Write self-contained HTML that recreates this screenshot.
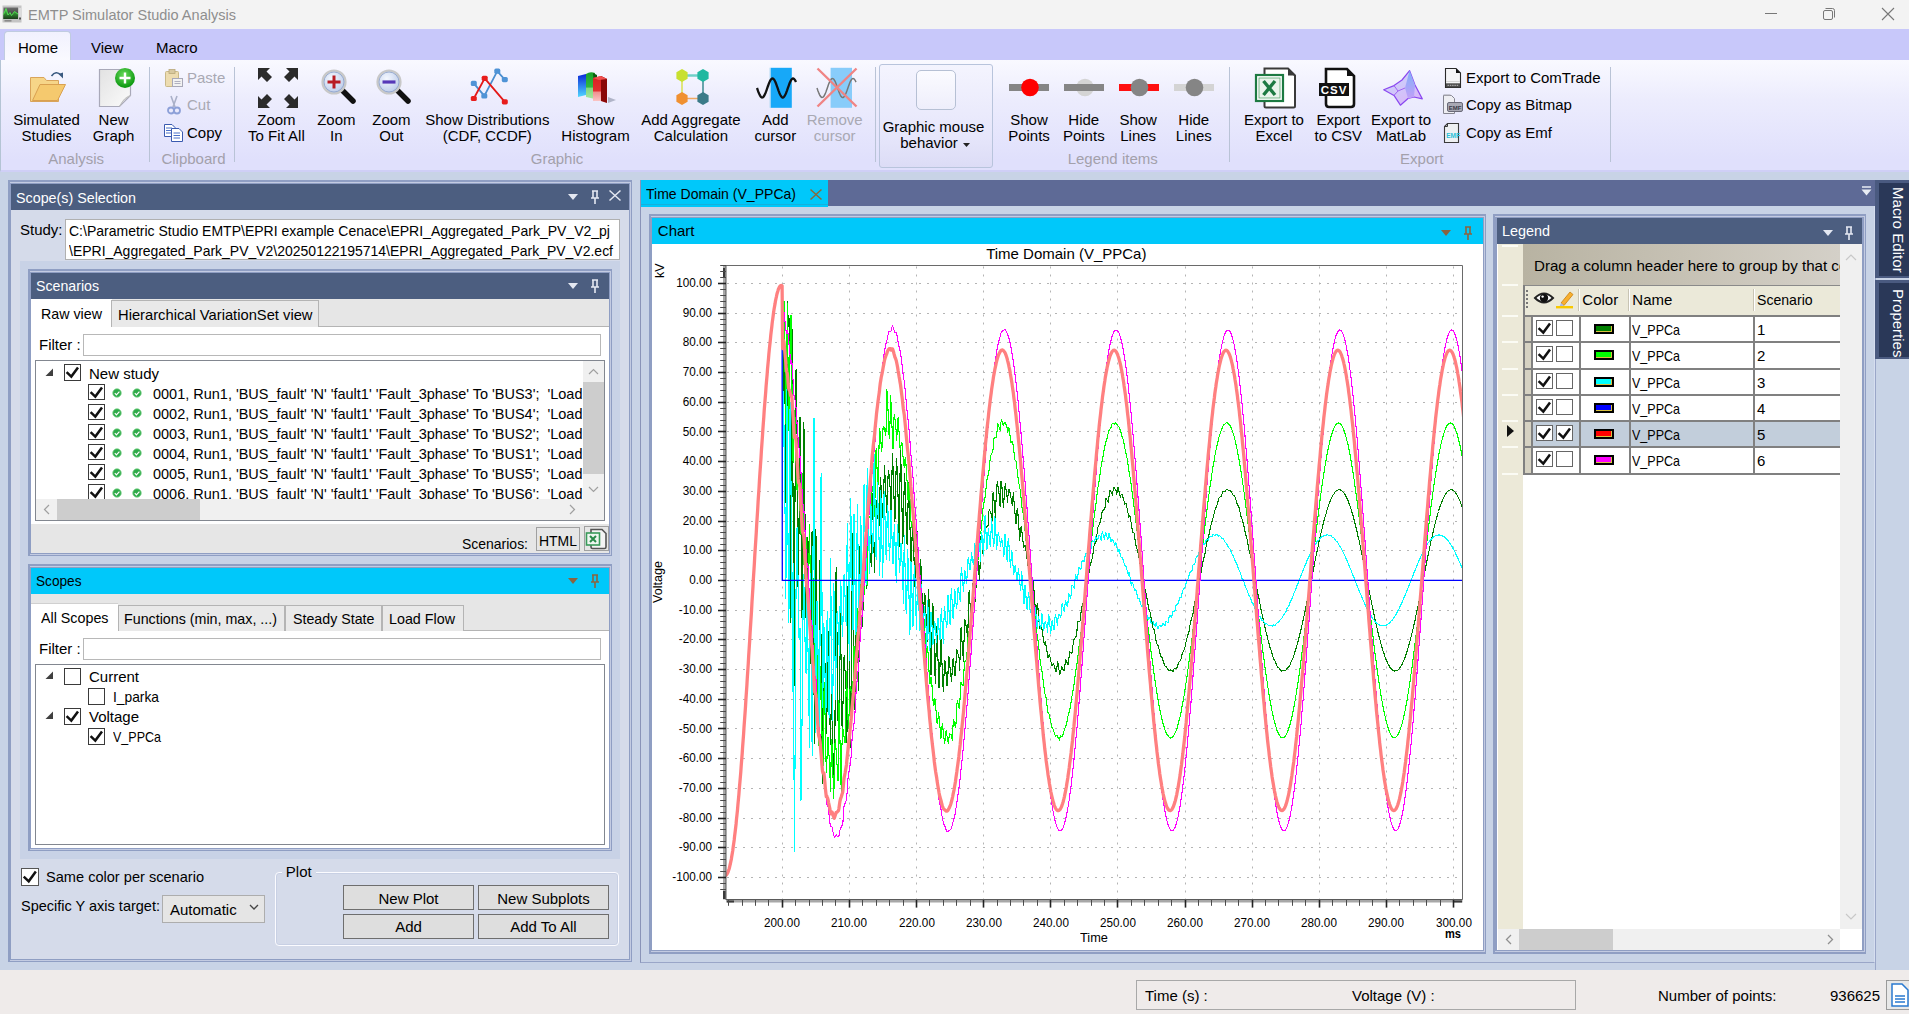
<!DOCTYPE html>
<html><head><meta charset="utf-8">
<style>
*{box-sizing:border-box}
html,body{margin:0;padding:0;width:1909px;height:1014px;overflow:hidden;background:#c8d3e6;font-family:"Liberation Sans",sans-serif;font-size:15px;color:#000}
.a{position:absolute}
.t{position:absolute;white-space:pre;line-height:1}
svg{position:absolute;overflow:visible}
</style></head><body>
<!-- title bar -->
<div class="a" style="left:0;top:0;width:1909px;height:29px;background:#f3f3f3"></div>
<svg style="left:2px;top:5px" width="20" height="18" viewBox="0 0 20 18"><defs><linearGradient id="scr" x1="0" y1="0" x2="0" y2="1"><stop offset="0" stop-color="#6e6e6e"/><stop offset="1" stop-color="#1e261e"/></linearGradient><linearGradient id="grn" x1="0" y1="0" x2="0" y2="1"><stop offset="0" stop-color="#48d848"/><stop offset="1" stop-color="#1a3a1a"/></linearGradient></defs><rect x="0.5" y="0.5" width="19" height="17" fill="#c4c4c4"/><rect x="1.5" y="2.5" width="14.5" height="11.5" fill="url(#scr)"/><path d="M1.5 9.5 L4 3.5 L6 10 L8 7.5 L9.5 10.5 L12.5 6.5 L16 9 V14 H1.5 Z" fill="url(#grn)"/><polyline points="1.5,9.5 4,3.5 6,10 8,7.5 9.5,10.5 12.5,6.5 16,9" fill="none" stroke="#50e050" stroke-width="1"/><rect x="17" y="3" width="2" height="11" fill="#dcdcdc"/><rect x="17" y="12.5" width="2" height="2" fill="#555"/><rect x="2.5" y="15" width="7" height="1.6" fill="#8a8a8a"/></svg>
<div class="t" style="left:28px;top:7px;color:#8e8e8e;font-size:15px;transform-origin:0 0;transform:scaleX(0.968)">EMTP Simulator Studio Analysis</div>
<div class="a" style="left:1765px;top:13px;width:12px;height:1px;background:#777"></div>
<svg style="left:1822px;top:7px" width="14" height="14" viewBox="0 0 14 14"><rect x="1.5" y="3.5" width="9" height="9" rx="1.5" fill="none" stroke="#777" stroke-width="1"/><path d="M3.5 1.5 H10.5 Q12.5 1.5 12.5 3.5 V10.5" fill="none" stroke="#777" stroke-width="1"/></svg>
<svg style="left:1881px;top:7px" width="14" height="14" viewBox="0 0 14 14"><path d="M1 1 L13 13 M13 1 L1 13" stroke="#777" stroke-width="1.1"/></svg>

<!-- tab bar -->
<div class="a" style="left:0;top:29px;width:1909px;height:31px;background:#c8c8fa"></div>
<div class="a" style="left:4px;top:30.5px;width:67px;height:30px;background:linear-gradient(#f1f1fe,#fafaff);border:1px solid #c0cce0;border-bottom:none;border-radius:4px 4px 0 0"></div>
<div class="t" style="left:18px;top:40px">Home</div>
<div class="t" style="left:91px;top:40px">View</div>
<div class="t" style="left:156px;top:40px">Macro</div>

<!-- ribbon -->
<div class="a" style="left:0;top:60px;width:1909px;height:112px;background:linear-gradient(#f9f9ff 0px,#ececfd 40px,#e0e0fc 100px);border-left:1px solid #b4c4d4;border-bottom:2px solid #cfcff6"></div>
<div class="a" style="left:149px;top:67px;width:1px;height:95px;background:#b9c3d6"></div>
<div class="a" style="left:234px;top:67px;width:1px;height:95px;background:#b9c3d6"></div>
<div class="a" style="left:875px;top:67px;width:1px;height:95px;background:#b9c3d6"></div>
<div class="a" style="left:1229px;top:67px;width:1px;height:95px;background:#b9c3d6"></div>
<div class="a" style="left:1610px;top:67px;width:1px;height:95px;background:#b9c3d6"></div>
<div class="t" style="left:-73.8px;top:150.9px;width:300px;text-align:center;color:#a3a0ab;">Analysis</div>
<div class="t" style="left:43.5px;top:150.9px;width:300px;text-align:center;color:#a3a0ab;">Clipboard</div>
<div class="t" style="left:407.0px;top:150.9px;width:300px;text-align:center;color:#a3a0ab;">Graphic</div>
<div class="t" style="left:962.7px;top:150.9px;width:300px;text-align:center;color:#a3a0ab;">Legend items</div>
<div class="t" style="left:1271.8px;top:150.9px;width:300px;text-align:center;color:#a3a0ab;">Export</div>
<div class="t" style="left:-103.5px;top:112.1px;width:300px;text-align:center;">Simulated</div>
<div class="t" style="left:-103.5px;top:127.8px;width:300px;text-align:center;">Studies</div>
<div class="t" style="left:-36.4px;top:112.1px;width:300px;text-align:center;">New</div>
<div class="t" style="left:-36.4px;top:127.8px;width:300px;text-align:center;">Graph</div>
<div class="t" style="left:126.4px;top:112.1px;width:300px;text-align:center;">Zoom</div>
<div class="t" style="left:126.4px;top:127.8px;width:300px;text-align:center;">To Fit All</div>
<div class="t" style="left:186.3px;top:112.1px;width:300px;text-align:center;">Zoom</div>
<div class="t" style="left:186.3px;top:127.8px;width:300px;text-align:center;">In</div>
<div class="t" style="left:241.4px;top:112.1px;width:300px;text-align:center;">Zoom</div>
<div class="t" style="left:241.4px;top:127.8px;width:300px;text-align:center;">Out</div>
<div class="t" style="left:337.3px;top:112.1px;width:300px;text-align:center;">Show Distributions</div>
<div class="t" style="left:337.3px;top:127.8px;width:300px;text-align:center;">(CDF, CCDF)</div>
<div class="t" style="left:445.5px;top:112.1px;width:300px;text-align:center;">Show</div>
<div class="t" style="left:445.5px;top:127.8px;width:300px;text-align:center;">Histogram</div>
<div class="t" style="left:540.9px;top:112.1px;width:300px;text-align:center;">Add Aggregate</div>
<div class="t" style="left:540.9px;top:127.8px;width:300px;text-align:center;">Calculation</div>
<div class="t" style="left:625.3px;top:112.1px;width:300px;text-align:center;">Add</div>
<div class="t" style="left:625.3px;top:127.8px;width:300px;text-align:center;">cursor</div>
<div class="t" style="left:684.7px;top:112.1px;width:300px;text-align:center;color:#a9a9b3;">Remove</div>
<div class="t" style="left:684.7px;top:127.8px;width:300px;text-align:center;color:#a9a9b3;">cursor</div>
<div class="t" style="left:879.0px;top:112.1px;width:300px;text-align:center;">Show</div>
<div class="t" style="left:879.0px;top:127.8px;width:300px;text-align:center;">Points</div>
<div class="t" style="left:933.8px;top:112.1px;width:300px;text-align:center;">Hide</div>
<div class="t" style="left:933.8px;top:127.8px;width:300px;text-align:center;">Points</div>
<div class="t" style="left:988.2px;top:112.1px;width:300px;text-align:center;">Show</div>
<div class="t" style="left:988.2px;top:127.8px;width:300px;text-align:center;">Lines</div>
<div class="t" style="left:1043.8px;top:112.1px;width:300px;text-align:center;">Hide</div>
<div class="t" style="left:1043.8px;top:127.8px;width:300px;text-align:center;">Lines</div>
<div class="t" style="left:1123.9px;top:112.1px;width:300px;text-align:center;">Export to</div>
<div class="t" style="left:1123.9px;top:127.8px;width:300px;text-align:center;">Excel</div>
<div class="t" style="left:1188.3px;top:112.1px;width:300px;text-align:center;">Export</div>
<div class="t" style="left:1188.3px;top:127.8px;width:300px;text-align:center;">to CSV</div>
<div class="t" style="left:1251.0px;top:112.1px;width:300px;text-align:center;">Export to</div>
<div class="t" style="left:1251.0px;top:127.8px;width:300px;text-align:center;">MatLab</div>
<div class="a" style="left:879px;top:64px;width:114px;height:104px;border:1px solid #b8c4dc;border-radius:3px;background:linear-gradient(#f4f4fe,#e6e6fb 70%,#dcdcf6)"></div>
<div class="a" style="left:916px;top:70px;width:40px;height:40px;border:1px solid #b6c0d4;border-radius:5px;background:linear-gradient(#fbfbff,#eeeefb)"></div>
<div class="t" style="left:783.5px;top:119.0px;width:300px;text-align:center;">Graphic mouse</div>
<div class="t" style="left:779.0px;top:134.5px;width:300px;text-align:center;">behavior</div>
<svg style="left:963px;top:143px" width="7" height="4" viewBox="0 0 7 4"><path d="M0 0 H7 L3.5 4 Z" fill="#222"/></svg>
<div class="t" style="left:187.0px;top:69.9px;color:#a9a9b3;">Paste</div>
<div class="t" style="left:187.0px;top:96.9px;color:#a9a9b3;">Cut</div>
<div class="t" style="left:187.0px;top:124.9px;">Copy</div>
<div class="t" style="left:1466.0px;top:69.8px;">Export to ComTrade</div>
<div class="t" style="left:1466.0px;top:97.3px;">Copy as Bitmap</div>
<div class="t" style="left:1466.0px;top:125.1px;">Copy as Emf</div>
<svg style="left:28px;top:70px" width="40" height="34" viewBox="0 0 40 34">
<path d="M2.5 7.5 H16 L18.5 10.5 H30.5 V31.5 H2.5 Z" fill="#f6d588" stroke="#d9a45a" stroke-width="1"/>
<path d="M12 14.5 H37.5 L29.5 30.5 H4.5 Z" fill="#f5c96e" stroke="#d9a050" stroke-width="1"/>
<path d="M23.5 6 Q28 0 33 5" fill="none" stroke="#3a5a80" stroke-width="1.6"/><path d="M30.5 4 L35 8.5 L35 2.5 Z" fill="#3a5a80"/></svg>
<svg style="left:98px;top:67px" width="36" height="42" viewBox="0 0 36 42">
<defs><linearGradient id="pg" x1="0" y1="0" x2="1" y2="1"><stop offset="0" stop-color="#e2e2e2"/><stop offset="1" stop-color="#fbfbfb"/></linearGradient>
<radialGradient id="gc" cx="0.45" cy="0.35" r="0.6"><stop offset="0" stop-color="#6bdc5c"/><stop offset="1" stop-color="#0e9a12"/></radialGradient></defs>
<path d="M1.5 2.5 H32.5 V28.5 L21.5 39.5 H1.5 Z" fill="url(#pg)" stroke="#a9a9b9" stroke-width="1.2"/>
<path d="M32.5 28.5 Q26 30 21.5 39.5 Q24 33 32.5 28.5" fill="#ddd" stroke="#bbb" stroke-width="0.8"/>
<circle cx="27" cy="11" r="10" fill="url(#gc)"/><path d="M21.5 11 H32.5 M27 5.5 V16.5" stroke="#fff" stroke-width="2.4"/></svg>
<svg style="left:164px;top:68px" width="20" height="20" viewBox="0 0 20 20"><rect x="1.5" y="3.5" width="13" height="15" rx="1" fill="#eddcb0" stroke="#c9b98a"/><rect x="5" y="1.5" width="6" height="4" fill="#d8c9a0" stroke="#b9a97a" stroke-width="0.8"/>
<rect x="8.5" y="10.5" width="10" height="8" fill="#f2f2f2" stroke="#a8a8b8"/><path d="M10.5 13.5 H16.5 M10.5 15.5 H16.5" stroke="#b0b0c0"/></svg>
<svg style="left:166px;top:95px" width="16" height="20" viewBox="0 0 16 20"><path d="M5 1 L9 12 M11 1 L7 12" stroke="#aab0c8" stroke-width="1.6"/><circle cx="5" cy="15.5" r="3" fill="none" stroke="#8da0d8" stroke-width="1.8"/><circle cx="11" cy="15.5" r="3" fill="none" stroke="#8da0d8" stroke-width="1.8"/></svg>
<svg style="left:163px;top:123px" width="22" height="19" viewBox="0 0 22 19"><path d="M1.5 1.5 H9 L12 4.5 V13.5 H1.5 Z" fill="#fff" stroke="#3a5ab0"/><path d="M3 5 H9 M3 7.5 H9 M3 10 H9" stroke="#4a70c8"/>
<path d="M8.5 5.5 H16 L19.5 9 V18.5 H8.5 Z" fill="#fff" stroke="#3a5ab0"/><path d="M10.5 10 H17 M10.5 12.5 H17 M10.5 15 H17" stroke="#4a70c8"/></svg>
<svg style="left:258px;top:68px" width="40" height="40" viewBox="0 0 40 40"><g><path d="M0 0 H12 L8.5 3.5 L14 9 L9 14 L3.5 8.5 L0 12 Z" fill="#2b2b2b"/></g><g transform="translate(40,0) scale(-1,1)"><path d="M0 0 H12 L8.5 3.5 L14 9 L9 14 L3.5 8.5 L0 12 Z" fill="#2b2b2b"/></g>
<g transform="translate(0,40) scale(1,-1)"><path d="M0 0 H12 L8.5 3.5 L14 9 L9 14 L3.5 8.5 L0 12 Z" fill="#2b2b2b"/></g><g transform="translate(40,40) scale(-1,-1)"><path d="M0 0 H12 L8.5 3.5 L14 9 L9 14 L3.5 8.5 L0 12 Z" fill="#2b2b2b"/></g></svg>
<svg style="left:321px;top:69px" width="36" height="36" viewBox="0 0 36 36"><defs><radialGradient id="lensi" cx="0.4" cy="0.35" r="0.7"><stop offset="0" stop-color="#f4f8ff"/><stop offset="1" stop-color="#b8c8e8"/></radialGradient></defs>
<path d="M22 22 L32 32" stroke="#111" stroke-width="5.5" stroke-linecap="round"/>
<circle cx="13" cy="13" r="11.5" fill="url(#lensi)" stroke="#c8c8c8" stroke-width="2.2"/><circle cx="13" cy="13" r="10" fill="none" stroke="#8aa0c8" stroke-width="0.8"/><path d="M6.5 13 H19.5 M13 6.5 V19.5" stroke="#b81c24" stroke-width="3"/></svg>
<svg style="left:376px;top:69px" width="36" height="36" viewBox="0 0 36 36"><defs><radialGradient id="lenso" cx="0.4" cy="0.35" r="0.7"><stop offset="0" stop-color="#f4f8ff"/><stop offset="1" stop-color="#b8c8e8"/></radialGradient></defs>
<path d="M22 22 L32 32" stroke="#111" stroke-width="5.5" stroke-linecap="round"/>
<circle cx="13" cy="13" r="11.5" fill="url(#lenso)" stroke="#c8c8c8" stroke-width="2.2"/><circle cx="13" cy="13" r="10" fill="none" stroke="#8aa0c8" stroke-width="0.8"/><path d="M6.5 13 H19.5" stroke="#5638b8" stroke-width="3.2"/></svg>
<svg style="left:460px;top:62px" width="52" height="48" viewBox="0 0 52 48"><polyline points="13.8,21.4 24.3,33.9 37.3,9.2 44.8,17.6" fill="none" stroke="#4a8ed0" stroke-width="1.8"/>
<polyline points="13.8,36.5 24.7,16.3 44.8,39.8" fill="none" stroke="#e41818" stroke-width="1.8"/><rect x="10.8" y="18.8" width="6" height="5.2" rx="1.6" fill="#4f93d6"/><rect x="21.3" y="31.3" width="6" height="5.2" rx="1.6" fill="#4f93d6"/><rect x="34.3" y="6.6" width="6" height="5.2" rx="1.6" fill="#4f93d6"/><rect x="41.8" y="15.0" width="6" height="5.2" rx="1.6" fill="#4f93d6"/><rect x="10.8" y="33.9" width="6" height="5.2" rx="1.6" fill="#e81c1c"/><rect x="21.7" y="13.7" width="6" height="5.2" rx="1.6" fill="#e81c1c"/><rect x="41.8" y="37.2" width="6" height="5.2" rx="1.6" fill="#e81c1c"/></svg>
<svg style="left:576px;top:72px" width="42" height="34" viewBox="0 0 42 34"><defs><linearGradient id="hb" x1="0" y1="0" x2="0" y2="1"><stop offset="0" stop-color="#0a28d8"/><stop offset="1" stop-color="#50d8ff"/></linearGradient>
<linearGradient id="hg" x1="0" y1="0" x2="0" y2="1"><stop offset="0" stop-color="#1aa02a"/><stop offset="0.55" stop-color="#30b840"/><stop offset="0.6" stop-color="#80d880"/><stop offset="1" stop-color="#a8e8a0"/></linearGradient>
<linearGradient id="hr" x1="0" y1="0" x2="0" y2="1"><stop offset="0" stop-color="#d82020"/><stop offset="0.55" stop-color="#e03030"/><stop offset="0.6" stop-color="#f09090"/><stop offset="1" stop-color="#fcd0d0"/></linearGradient></defs>
<path d="M32 25 L40 28 L32 31 Z" fill="#b0b4c8"/>
<path d="M2 4 L10 2 V23 L2 25 Z" fill="url(#hb)"/><path d="M10 2 L12 3 V24 L10 23 Z" fill="#2040a0"/>
<path d="M10 2 Q14 -1 19 1 V27 L10 25 Z" fill="url(#hg)"/><path d="M17 1 L21 3 V27 L19 27 Z" fill="#0a5a10"/>
<path d="M17 6 L25 4 L31 7 V31 L25 29 L17 29 Z" fill="url(#hr)"/><path d="M25 4 L31 7 V31 L25 29 Z" fill="#8a0808"/><path d="M17 6 L25 4 L31 7 L23 8 Z" fill="#f05050"/></svg>
<svg style="left:673px;top:67px" width="40" height="41" viewBox="0 0 40 41"><path d="M9 8.5 H30" stroke="#70d0c8" stroke-width="2.5"/><path d="M9 8.5 V31.5" stroke="#d8e050" stroke-width="1.5"/><path d="M30 8.5 V31.5" stroke="#3a8a90" stroke-width="1.5"/><path d="M9 31.5 H30" stroke="#f0a860" stroke-width="1.5"/>
<polygon points="14.6,11.8 9.0,15.0 3.4,11.8 3.4,5.3 9.0,2.0 14.6,5.2" fill="#c8e030"/><polygon points="35.6,11.8 30.0,15.0 24.4,11.8 24.4,5.3 30.0,2.0 35.6,5.2" fill="#20b8a0"/><polygon points="14.6,34.8 9.0,38.0 3.4,34.8 3.4,28.2 9.0,25.0 14.6,28.2" fill="#f09030"/><polygon points="35.6,34.8 30.0,38.0 24.4,34.8 24.4,28.2 30.0,25.0 35.6,28.2" fill="#3a7a88"/></svg>
<svg style="left:756px;top:67px" width="42" height="41" viewBox="0 0 42 41"><rect x="14.5" y="0.8" width="21.3" height="40" fill="#17a8f8"/><rect x="13.5" y="0.8" width="1" height="40" fill="#b8dcf4"/><polyline points="1.0,21.0 1.5,22.4 2.0,23.9 2.5,25.2 3.0,26.4 3.5,27.6 4.0,28.5 4.5,29.3 5.0,29.9 5.5,30.3 6.0,30.5 6.5,30.4 7.0,30.2 7.5,29.7 8.0,29.0 8.5,28.2 9.0,27.1 9.5,26.0 10.0,24.7 10.5,23.3 11.0,21.9 11.5,20.4 12.0,19.0 12.5,17.6 13.0,16.3 13.5,15.1 14.0,14.0 14.5,13.1 15.0,12.4 15.5,11.9 16.0,11.6 16.5,11.5 17.0,11.6 17.5,12.0 18.0,12.5 18.5,13.3 19.0,14.2 19.5,15.3 20.0,16.5 20.5,17.9 21.0,19.3 21.5,20.7 22.0,22.2 22.5,23.6 23.0,24.9 23.5,26.2 24.0,27.3 24.5,28.3 25.0,29.2 25.5,29.8 26.0,30.3 26.5,30.5 27.0,30.5 27.5,30.3 28.0,29.8 28.5,29.2 29.0,28.3 29.5,27.3 30.0,26.2 30.5,24.9 31.0,23.6 31.5,22.2 32.0,20.7 32.5,19.3 33.0,17.9 33.5,16.5 34.0,15.3 34.5,14.2 35.0,13.3 35.5,12.5 36.0,12.0 36.5,11.6 37.0,11.5 37.5,11.6 38.0,11.9 38.5,12.4 39.0,13.1 39.5,14.0 40.0,15.1" fill="none" stroke="#111" stroke-width="2.3"/></svg>
<svg style="left:816px;top:67px" width="42" height="41" viewBox="0 0 42 41"><rect x="14.6" y="0.8" width="21.4" height="40" fill="#88ccfa"/><polyline points="1.0,21.0 1.5,22.4 2.0,23.9 2.5,25.2 3.0,26.4 3.5,27.6 4.0,28.5 4.5,29.3 5.0,29.9 5.5,30.3 6.0,30.5 6.5,30.4 7.0,30.2 7.5,29.7 8.0,29.0 8.5,28.2 9.0,27.1 9.5,26.0 10.0,24.7 10.5,23.3 11.0,21.9 11.5,20.4 12.0,19.0 12.5,17.6 13.0,16.3 13.5,15.1 14.0,14.0 14.5,13.1 15.0,12.4 15.5,11.9 16.0,11.6 16.5,11.5 17.0,11.6 17.5,12.0 18.0,12.5 18.5,13.3 19.0,14.2 19.5,15.3 20.0,16.5 20.5,17.9 21.0,19.3 21.5,20.7 22.0,22.2 22.5,23.6 23.0,24.9 23.5,26.2 24.0,27.3 24.5,28.3 25.0,29.2 25.5,29.8 26.0,30.3 26.5,30.5 27.0,30.5 27.5,30.3 28.0,29.8 28.5,29.2 29.0,28.3 29.5,27.3 30.0,26.2 30.5,24.9 31.0,23.6 31.5,22.2 32.0,20.7 32.5,19.3 33.0,17.9 33.5,16.5 34.0,15.3 34.5,14.2 35.0,13.3 35.5,12.5 36.0,12.0 36.5,11.6 37.0,11.5 37.5,11.6 38.0,11.9 38.5,12.4 39.0,13.1 39.5,14.0 40.0,15.1" fill="none" stroke="#777" stroke-width="1.5"/><path d="M1.5 1.5 L40.5 39.5 M40.5 1.5 L1.5 39.5" stroke="#f08484" stroke-width="2.4"/></svg>
<svg style="left:1009px;top:77px" width="41" height="20" viewBox="0 0 41 20"><rect x="0" y="7" width="40" height="7" fill="#858585"/><circle cx="21" cy="10.5" r="8.8" fill="#ff0000"/></svg>
<svg style="left:1064px;top:77px" width="41" height="20" viewBox="0 0 41 20"><circle cx="21" cy="10.5" r="8.8" fill="#d4d4d4"/><rect x="0" y="7" width="40" height="7" fill="#858585"/></svg>
<svg style="left:1119px;top:77px" width="41" height="20" viewBox="0 0 41 20"><rect x="0" y="7" width="40" height="7" fill="#ff1010"/><circle cx="20.5" cy="10.5" r="8.8" fill="#858585"/></svg>
<svg style="left:1174px;top:77px" width="41" height="20" viewBox="0 0 41 20"><rect x="0" y="7" width="40" height="7" fill="#d4d4d4"/><circle cx="20.5" cy="10.5" r="8.8" fill="#858585"/></svg>
<svg style="left:1255px;top:67px" width="42" height="42" viewBox="0 0 42 42"><path d="M9.5 1.5 H33 L40 8.5 V39 Q40 40.5 38.5 40.5 H11 Q9.5 40.5 9.5 39 Z" fill="#fff" stroke="#3a3a3a" stroke-width="2"/><path d="M33 1.5 V8.5 H40" fill="#3a3a3a"/>
<rect x="1" y="8" width="27" height="26" fill="#fff" stroke="#1d7a42" stroke-width="2.2"/><rect x="4" y="11" width="21" height="20" fill="#eaf4ec" stroke="#5aa870" stroke-width="0.8"/><path d="M8.5 14 L20 28 M20 14 L8.5 28" stroke="#1d7a42" stroke-width="3.4"/></svg>
<svg style="left:1319px;top:67px" width="40" height="42" viewBox="0 0 40 42"><path d="M7 2 H28 L35 9 V37 Q35 40 32 40 H10 Q7 40 7 37 Z" fill="#fff" stroke="#111" stroke-width="2.6"/><path d="M28 2 V9 H35" fill="#111"/>
<rect x="0" y="16" width="30" height="13" fill="#111"/><text x="15" y="27" font-family="Liberation Sans" font-weight="bold" font-size="11.5" fill="#fff" text-anchor="middle" letter-spacing="1">CSV</text></svg>
<svg style="left:1382px;top:68px" width="42" height="40" viewBox="0 0 42 40"><defs><linearGradient id="ml" x1="0" y1="0" x2="0.6" y2="1"><stop offset="0" stop-color="#c8d8fc"/><stop offset="1" stop-color="#d8b8f8"/></linearGradient>
<linearGradient id="ml2" x1="0" y1="0" x2="0" y2="1"><stop offset="0" stop-color="#80b0f8"/><stop offset="1" stop-color="#c0a0f8"/></linearGradient></defs>
<path d="M27.6 2.6 L20 12 L12 17.6 L1.7 21.7 L12 27.4 L18.4 37.2 L26 30.5 L32 29 L40.3 30.9 L33 17 Z" fill="url(#ml)" stroke="#8a48f0" stroke-width="1.2" stroke-linejoin="round"/>
<path d="M27.6 2.6 L23 20 L26 30.5 L32 29 L33 17 Z" fill="url(#ml2)"/>
<path d="M12 17.6 L16 23 L12 27.4 M16 23 L23 20" fill="none" stroke="#9a58f0" stroke-width="0.9"/></svg>
<svg style="left:1443px;top:67px" width="20" height="22" viewBox="0 0 20 22"><path d="M2.5 1.5 H13 L17.5 6 V20.5 H2.5 Z" fill="#f4f4f6" stroke="#2a2a2a" stroke-width="1.1"/><path d="M13 1.5 V6 H17.5 Z" fill="#111"/><rect x="3" y="16.3" width="14" height="4" fill="#4a4a4a"/><path d="M4.5 18.3 H15.5" stroke="#bbb" stroke-width="1" stroke-dasharray="1.5 0.8"/><path d="M3 14.5 H17" stroke="#ccc" stroke-width="0.8"/></svg>
<svg style="left:1442px;top:94px" width="22" height="22" viewBox="0 0 22 22"><path d="M1.5 1.5 H9.5 L12.5 4.5 V19.5 H1.5 Z" fill="#eeeef2" stroke="#858590" stroke-width="1"/><rect x="1.5" y="0.5" width="7" height="1.5" fill="#a0a0a8"/><rect x="5.5" y="8.5" width="15" height="9" rx="1.5" fill="#a8a8b4" stroke="#6a6a78"/><text x="13" y="15.6" font-family="Liberation Sans" font-weight="bold" font-size="6" fill="#3a3a48" text-anchor="middle">EMF</text></svg>
<svg style="left:1443px;top:122px" width="20" height="22" viewBox="0 0 20 22"><path d="M4.5 1.5 H15.5 V20.5 H1.5 V4.5 Z" fill="#eef0f2" stroke="#3a3a3a" stroke-width="1.1"/><path d="M1.5 4.5 H4.5 V1.5" fill="none" stroke="#3a3a3a" stroke-width="1"/><text x="10" y="15.5" font-family="Liberation Sans" font-weight="bold" font-size="6.5" fill="#28c0d8" text-anchor="middle">EMF</text></svg>


<!-- status bar -->
<div class="a" style="left:0;top:970px;width:1909px;height:44px;background:#efebea"></div>
<div class="a" style="left:1136px;top:980px;width:440px;height:30px;border:1px solid #a8a8a8"></div>
<div class="t" style="left:1145px;top:988px">Time (s) :</div>
<div class="t" style="left:1352px;top:988px">Voltage (V) :</div>
<div class="t" style="left:1658px;top:988px">Number of points:</div>
<div class="t" style="left:1830px;top:988px">936625</div>
<div class="a" style="left:1886px;top:980px;width:24px;height:30px;border:1px solid #9a9a9a;background:#e8e8e8"></div>
<svg style="left:1890px;top:983px" width="19" height="24" viewBox="0 0 19 24"><path d="M2 1 H12 L18 7 V23 H2 Z" fill="#fff" stroke="#2a7ad0" stroke-width="1.5"/><path d="M5 13 H15 M5 16 H15 M5 19 H15" stroke="#2a7ad0" stroke-width="1.6"/></svg>

<div class="a" style="left:8px;top:180px;width:624px;height:782px;background:#8f9ec3"></div>
<div class="a" style="left:10px;top:182px;width:620px;height:1px;background:#c3cbe2"></div>
<div class="a" style="left:11px;top:184px;width:618px;height:26px;background:#4c5e80"></div>
<div class="a" style="left:11px;top:210px;width:618px;height:749px;background:#d5dbea"></div>
<div class="a" style="left:630px;top:182px;width:1px;height:779px;background:#c3cbe2"></div>
<div class="a" style="left:10px;top:960px;width:621px;height:1px;background:#c3cbe2"></div>
<div class="t" style="left:16.0px;top:190.1px;font-size:15px;transform-origin:0 0;transform:scaleX(0.9531);color:#fff;">Scope(s) Selection</div>
<svg style="left:568px;top:194px" width="10" height="6" viewBox="0 0 10 6"><path d="M0 0 H10 L5 6 Z" fill="#e4e8f2"/></svg>
<svg style="left:590px;top:190px" width="10" height="14" viewBox="0 0 10 14"><path d="M2 1 H8 M3 1 V8 H7 V1 M1 8 H9 M5 8 V14" fill="none" stroke="#e4e8f2" stroke-width="1.6"/></svg>
<svg style="left:609px;top:190px" width="12" height="11" viewBox="0 0 12 11"><path d="M0.5 0.5 L11.5 10.5 M11.5 0.5 L0.5 10.5" stroke="#e4e8f2" stroke-width="1.5"/></svg>
<div class="t" style="left:20.0px;top:222.0px;">Study:</div>
<div class="a" style="left:65px;top:219px;width:555px;height:41px;background:#fff;border:1px solid #b0b0b0"></div>
<div class="t" style="left:69.0px;top:222.7px;font-size:15px;transform-origin:0 0;transform:scaleX(0.9336);">C:\Parametric Studio EMTP\EPRI example Cenace\EPRI_Aggregated_Park_PV_V2_pj</div>
<div class="t" style="left:69.0px;top:243.1px;font-size:15px;transform-origin:0 0;transform:scaleX(0.9319);">\EPRI_Aggregated_Park_PV_V2\20250122195714\EPRI_Aggregated_Park_PV_V2.ecf</div>
<div class="a" style="left:20px;top:261px;width:600px;height:598px;background:#c8d2e6"></div>
<div class="a" style="left:28px;top:269px;width:584px;height:287px;background:#8f9ec3"></div>
<div class="a" style="left:30px;top:271px;width:580px;height:1px;background:#c3cbe2"></div>
<div class="a" style="left:31px;top:273px;width:578px;height:26px;background:#4c5e80"></div>
<div class="a" style="left:31px;top:299px;width:578px;height:254px;background:#e6e6e6"></div>
<div class="a" style="left:610px;top:271px;width:1px;height:284px;background:#c3cbe2"></div>
<div class="a" style="left:30px;top:554px;width:581px;height:1px;background:#c3cbe2"></div>
<div class="t" style="left:36.0px;top:278.1px;font-size:15px;transform-origin:0 0;transform:scaleX(0.9445);color:#fff;">Scenarios</div>
<svg style="left:568px;top:283px" width="10" height="6" viewBox="0 0 10 6"><path d="M0 0 H10 L5 6 Z" fill="#e4e8f2"/></svg>
<svg style="left:590px;top:279px" width="10" height="14" viewBox="0 0 10 14"><path d="M2 1 H8 M3 1 V8 H7 V1 M1 8 H9 M5 8 V14" fill="none" stroke="#e4e8f2" stroke-width="1.6"/></svg>
<div class="a" style="left:31px;top:326px;width:578px;height:198px;background:#fff"></div>
<div class="a" style="left:111px;top:326px;width:498px;height:1px;background:#b4b4b4"></div>
<div class="a" style="left:31px;top:299px;width:81px;height:28px;background:#fff"></div>
<div class="a" style="left:111px;top:300px;width:208px;height:27px;background:#e9e9e9;border:1px solid #b4b4b4;border-bottom:none"></div>
<div class="t" style="left:41.0px;top:305.9px;font-size:15px;transform-origin:0 0;transform:scaleX(0.9503);">Raw view</div>
<div class="t" style="left:117.5px;top:307.3px;font-size:15px;transform-origin:0 0;transform:scaleX(0.9816);">Hierarchical VariationSet view</div>
<div class="t" style="left:39.0px;top:337.0px;">Filter :</div>
<div class="a" style="left:83px;top:334px;width:518px;height:22px;background:#fff;border:1px solid #b8b8b8"></div>
<div class="a" style="left:35px;top:360px;width:570px;height:161px;background:#fff;border:1px solid #828790"></div>
<svg style="left:45px;top:368px" width="9" height="9" viewBox="0 0 9 9"><path d="M8 0.5 V8 H0.5 Z" fill="#404040"/></svg>
<svg style="left:64px;top:364px" width="17" height="17" viewBox="0 0 17 17"><rect x="0.5" y="0.5" width="16" height="16" fill="#fff" stroke="#3a3a3a"/><path d="M2.60 8.20 L7.30 12.60 L14.00 3.40" fill="none" stroke="#111" stroke-width="2.5"/></svg>
<div class="t" style="left:89.0px;top:366.3px;">New study</div>
<svg style="left:88px;top:383.6px" width="17" height="16" viewBox="0 0 17 16"><rect x="0.5" y="0.5" width="16" height="15" fill="#fff" stroke="#3a3a3a"/><path d="M2.60 8.20 L7.30 12.60 L14.00 3.40" fill="none" stroke="#111" stroke-width="2.5"/></svg>
<svg style="left:111.7px;top:387.6px" width="10" height="10" viewBox="0 0 10 10"><circle cx="5" cy="5" r="4.3" fill="#2eaa48"/><circle cx="5" cy="5" r="4.3" fill="none" stroke="#8ad898" stroke-width="0.8"/><path d="M2.8 5.2 L4.4 6.8 L7.4 3.6" fill="none" stroke="#fff" stroke-width="1.2"/></svg>
<svg style="left:131.6px;top:387.6px" width="10" height="10" viewBox="0 0 10 10"><circle cx="5" cy="5" r="4.3" fill="#2eaa48"/><circle cx="5" cy="5" r="4.3" fill="none" stroke="#8ad898" stroke-width="0.8"/><path d="M2.8 5.2 L4.4 6.8 L7.4 3.6" fill="none" stroke="#fff" stroke-width="1.2"/></svg>
<div class="t" style="left:152.7px;top:385.9px;font-size:15px;transform-origin:0 0;transform:scaleX(0.9655);">0001, Run1, 'BUS_fault' 'N' 'fault1' 'Fault_3phase' To 'BUS3';  'Load</div>
<svg style="left:88px;top:403.6px" width="17" height="16" viewBox="0 0 17 16"><rect x="0.5" y="0.5" width="16" height="15" fill="#fff" stroke="#3a3a3a"/><path d="M2.60 8.20 L7.30 12.60 L14.00 3.40" fill="none" stroke="#111" stroke-width="2.5"/></svg>
<svg style="left:111.7px;top:407.6px" width="10" height="10" viewBox="0 0 10 10"><circle cx="5" cy="5" r="4.3" fill="#2eaa48"/><circle cx="5" cy="5" r="4.3" fill="none" stroke="#8ad898" stroke-width="0.8"/><path d="M2.8 5.2 L4.4 6.8 L7.4 3.6" fill="none" stroke="#fff" stroke-width="1.2"/></svg>
<svg style="left:131.6px;top:407.6px" width="10" height="10" viewBox="0 0 10 10"><circle cx="5" cy="5" r="4.3" fill="#2eaa48"/><circle cx="5" cy="5" r="4.3" fill="none" stroke="#8ad898" stroke-width="0.8"/><path d="M2.8 5.2 L4.4 6.8 L7.4 3.6" fill="none" stroke="#fff" stroke-width="1.2"/></svg>
<div class="t" style="left:152.7px;top:405.9px;font-size:15px;transform-origin:0 0;transform:scaleX(0.9655);">0002, Run1, 'BUS_fault' 'N' 'fault1' 'Fault_3phase' To 'BUS4';  'Load</div>
<svg style="left:88px;top:423.6px" width="17" height="16" viewBox="0 0 17 16"><rect x="0.5" y="0.5" width="16" height="15" fill="#fff" stroke="#3a3a3a"/><path d="M2.60 8.20 L7.30 12.60 L14.00 3.40" fill="none" stroke="#111" stroke-width="2.5"/></svg>
<svg style="left:111.7px;top:427.6px" width="10" height="10" viewBox="0 0 10 10"><circle cx="5" cy="5" r="4.3" fill="#2eaa48"/><circle cx="5" cy="5" r="4.3" fill="none" stroke="#8ad898" stroke-width="0.8"/><path d="M2.8 5.2 L4.4 6.8 L7.4 3.6" fill="none" stroke="#fff" stroke-width="1.2"/></svg>
<svg style="left:131.6px;top:427.6px" width="10" height="10" viewBox="0 0 10 10"><circle cx="5" cy="5" r="4.3" fill="#2eaa48"/><circle cx="5" cy="5" r="4.3" fill="none" stroke="#8ad898" stroke-width="0.8"/><path d="M2.8 5.2 L4.4 6.8 L7.4 3.6" fill="none" stroke="#fff" stroke-width="1.2"/></svg>
<div class="t" style="left:152.7px;top:425.9px;font-size:15px;transform-origin:0 0;transform:scaleX(0.9655);">0003, Run1, 'BUS_fault' 'N' 'fault1' 'Fault_3phase' To 'BUS2';  'Load</div>
<svg style="left:88px;top:443.6px" width="17" height="16" viewBox="0 0 17 16"><rect x="0.5" y="0.5" width="16" height="15" fill="#fff" stroke="#3a3a3a"/><path d="M2.60 8.20 L7.30 12.60 L14.00 3.40" fill="none" stroke="#111" stroke-width="2.5"/></svg>
<svg style="left:111.7px;top:447.6px" width="10" height="10" viewBox="0 0 10 10"><circle cx="5" cy="5" r="4.3" fill="#2eaa48"/><circle cx="5" cy="5" r="4.3" fill="none" stroke="#8ad898" stroke-width="0.8"/><path d="M2.8 5.2 L4.4 6.8 L7.4 3.6" fill="none" stroke="#fff" stroke-width="1.2"/></svg>
<svg style="left:131.6px;top:447.6px" width="10" height="10" viewBox="0 0 10 10"><circle cx="5" cy="5" r="4.3" fill="#2eaa48"/><circle cx="5" cy="5" r="4.3" fill="none" stroke="#8ad898" stroke-width="0.8"/><path d="M2.8 5.2 L4.4 6.8 L7.4 3.6" fill="none" stroke="#fff" stroke-width="1.2"/></svg>
<div class="t" style="left:152.7px;top:445.9px;font-size:15px;transform-origin:0 0;transform:scaleX(0.9655);">0004, Run1, 'BUS_fault' 'N' 'fault1' 'Fault_3phase' To 'BUS1';  'Load</div>
<svg style="left:88px;top:463.6px" width="17" height="16" viewBox="0 0 17 16"><rect x="0.5" y="0.5" width="16" height="15" fill="#fff" stroke="#3a3a3a"/><path d="M2.60 8.20 L7.30 12.60 L14.00 3.40" fill="none" stroke="#111" stroke-width="2.5"/></svg>
<svg style="left:111.7px;top:467.6px" width="10" height="10" viewBox="0 0 10 10"><circle cx="5" cy="5" r="4.3" fill="#2eaa48"/><circle cx="5" cy="5" r="4.3" fill="none" stroke="#8ad898" stroke-width="0.8"/><path d="M2.8 5.2 L4.4 6.8 L7.4 3.6" fill="none" stroke="#fff" stroke-width="1.2"/></svg>
<svg style="left:131.6px;top:467.6px" width="10" height="10" viewBox="0 0 10 10"><circle cx="5" cy="5" r="4.3" fill="#2eaa48"/><circle cx="5" cy="5" r="4.3" fill="none" stroke="#8ad898" stroke-width="0.8"/><path d="M2.8 5.2 L4.4 6.8 L7.4 3.6" fill="none" stroke="#fff" stroke-width="1.2"/></svg>
<div class="t" style="left:152.7px;top:465.9px;font-size:15px;transform-origin:0 0;transform:scaleX(0.9655);">0005, Run1, 'BUS_fault' 'N' 'fault1' 'Fault_3phase' To 'BUS5';  'Load</div>
<svg style="left:88px;top:483.6px" width="17" height="16" viewBox="0 0 17 16"><rect x="0.5" y="0.5" width="16" height="15" fill="#fff" stroke="#3a3a3a"/><path d="M2.60 8.20 L7.30 12.60 L14.00 3.40" fill="none" stroke="#111" stroke-width="2.5"/></svg>
<svg style="left:111.7px;top:487.6px" width="10" height="10" viewBox="0 0 10 10"><circle cx="5" cy="5" r="4.3" fill="#2eaa48"/><circle cx="5" cy="5" r="4.3" fill="none" stroke="#8ad898" stroke-width="0.8"/><path d="M2.8 5.2 L4.4 6.8 L7.4 3.6" fill="none" stroke="#fff" stroke-width="1.2"/></svg>
<svg style="left:131.6px;top:487.6px" width="10" height="10" viewBox="0 0 10 10"><circle cx="5" cy="5" r="4.3" fill="#2eaa48"/><circle cx="5" cy="5" r="4.3" fill="none" stroke="#8ad898" stroke-width="0.8"/><path d="M2.8 5.2 L4.4 6.8 L7.4 3.6" fill="none" stroke="#fff" stroke-width="1.2"/></svg>
<div class="t" style="left:152.7px;top:485.9px;font-size:15px;transform-origin:0 0;transform:scaleX(0.9655);">0006, Run1, 'BUS_fault' 'N' 'fault1' 'Fault_3phase' To 'BUS6';  'Load</div>
<div class="a" style="left:36px;top:499px;width:568px;height:21px;background:#f0f0f0"></div>
<div class="a" style="left:57px;top:499px;width:143px;height:21px;background:#cdcdcd"></div>
<svg style="left:43px;top:504px" width="8" height="11" viewBox="0 0 8 11"><path d="M6 1 L1.5 5.5 L6 10" fill="none" stroke="#a0a0a0" stroke-width="1.2"/></svg>
<svg style="left:568px;top:504px" width="8" height="11" viewBox="0 0 8 11"><path d="M2 1 L6.5 5.5 L2 10" fill="none" stroke="#a0a0a0" stroke-width="1.2"/></svg>
<div class="a" style="left:583px;top:361px;width:21px;height:138px;background:#f0f0f0"></div>
<div class="a" style="left:583px;top:382px;width:21px;height:92px;background:#cdcdcd"></div>
<svg style="left:588px;top:368px" width="11" height="8" viewBox="0 0 11 8"><path d="M1 6 L5.5 1.5 L10 6" fill="none" stroke="#a0a0a0" stroke-width="1.2"/></svg>
<svg style="left:588px;top:485px" width="11" height="8" viewBox="0 0 11 8"><path d="M1 2 L5.5 6.5 L10 2" fill="none" stroke="#a0a0a0" stroke-width="1.2"/></svg>
<div class="t" style="left:462.4px;top:535.8px;font-size:15px;transform-origin:0 0;transform:scaleX(0.9312);">Scenarios:</div>
<div class="a" style="left:536px;top:527px;width:44px;height:24px;background:#e6e6e6;border:1px solid #a0a0a0"></div>
<div class="t" style="left:539.0px;top:532.8px;font-size:15px;transform-origin:0 0;transform:scaleX(0.9304);">HTML</div>
<div class="a" style="left:584px;top:526px;width:25px;height:25px;background:#e6e6e6;border:1px solid #a0a0a0"></div>
<svg style="left:585px;top:528px" width="23" height="22" viewBox="0 0 23 22"><path d="M6 1.5 H17 L21 5.5 V19 Q21 20.5 19.5 20.5 H7.5 Q6 20.5 6 19 Z" fill="#f4f4f4" stroke="#555" stroke-width="1.6"/><rect x="1.5" y="5" width="13" height="12" fill="#eef6f0" stroke="#3a9a5a" stroke-width="1.6"/><path d="M5 8 L11 14 M11 8 L5 14" stroke="#2a8a4a" stroke-width="2"/></svg>
<div class="a" style="left:28px;top:564px;width:584px;height:287px;background:#8f9ec3"></div>
<div class="a" style="left:30px;top:566px;width:580px;height:1px;background:#c3cbe2"></div>
<div class="a" style="left:31px;top:568px;width:578px;height:26px;background:#00c8fa"></div>
<div class="a" style="left:31px;top:594px;width:578px;height:254px;background:#e6e6e6"></div>
<div class="a" style="left:610px;top:566px;width:1px;height:284px;background:#c3cbe2"></div>
<div class="a" style="left:30px;top:849px;width:581px;height:1px;background:#c3cbe2"></div>
<div class="t" style="left:36.0px;top:572.7px;font-size:15px;transform-origin:0 0;transform:scaleX(0.9091);">Scopes</div>
<svg style="left:568px;top:578px" width="10" height="6" viewBox="0 0 10 6"><path d="M0 0 H10 L5 6 Z" fill="#8a6440"/></svg>
<svg style="left:590px;top:574px" width="10" height="14" viewBox="0 0 10 14"><path d="M2 1 H8 M3 1 V8 H7 V1 M1 8 H9 M5 8 V14" fill="none" stroke="#8a6440" stroke-width="1.6"/></svg>
<div class="a" style="left:31px;top:630px;width:578px;height:218px;background:#fff"></div>
<div class="a" style="left:118px;top:630px;width:491px;height:1px;background:#b4b4b4"></div>
<div class="a" style="left:31px;top:603px;width:87px;height:28px;background:#fff;border-top:1px solid #d0d0d0"></div>
<div class="a" style="left:118px;top:605px;width:167px;height:26px;background:#e9e9e9;border:1px solid #b4b4b4;border-bottom:none"></div>
<div class="a" style="left:285px;top:605px;width:97px;height:26px;background:#e9e9e9;border:1px solid #b4b4b4;border-bottom:none"></div>
<div class="a" style="left:382px;top:605px;width:82px;height:26px;background:#e9e9e9;border:1px solid #b4b4b4;border-bottom:none"></div>
<div class="t" style="left:41.0px;top:609.9px;font-size:15px;transform-origin:0 0;transform:scaleX(0.9524);">All Scopes</div>
<div class="t" style="left:124.0px;top:611.3px;font-size:15px;transform-origin:0 0;transform:scaleX(0.9510);">Functions (min, max, ...)</div>
<div class="t" style="left:293.0px;top:611.3px;font-size:15px;transform-origin:0 0;transform:scaleX(0.9487);">Steady State</div>
<div class="t" style="left:389.0px;top:611.3px;font-size:15px;transform-origin:0 0;transform:scaleX(0.9535);">Load Flow</div>
<div class="t" style="left:39.0px;top:640.8px;">Filter :</div>
<div class="a" style="left:83px;top:638px;width:518px;height:22px;background:#fff;border:1px solid #b8b8b8"></div>
<div class="a" style="left:35px;top:664px;width:570px;height:181px;background:#fff;border:1px solid #828790"></div>
<svg style="left:45px;top:671px" width="9" height="9" viewBox="0 0 9 9"><path d="M8 0.5 V8 H0.5 Z" fill="#404040"/></svg>
<svg style="left:64px;top:668px" width="17" height="17" viewBox="0 0 17 17"><rect x="0.5" y="0.5" width="16" height="16" fill="#fff" stroke="#3a3a3a"/></svg>
<div class="t" style="left:89.0px;top:668.7px;">Current</div>
<svg style="left:88px;top:688px" width="17" height="17" viewBox="0 0 17 17"><rect x="0.5" y="0.5" width="16" height="16" fill="#fff" stroke="#3a3a3a"/></svg>
<div class="t" style="left:112.7px;top:688.7px;font-size:15px;transform-origin:0 0;transform:scaleX(0.9191);">I_parka</div>
<svg style="left:45px;top:711px" width="9" height="9" viewBox="0 0 9 9"><path d="M8 0.5 V8 H0.5 Z" fill="#404040"/></svg>
<svg style="left:64px;top:708px" width="17" height="17" viewBox="0 0 17 17"><rect x="0.5" y="0.5" width="16" height="16" fill="#fff" stroke="#3a3a3a"/><path d="M2.60 8.20 L7.30 12.60 L14.00 3.40" fill="none" stroke="#111" stroke-width="2.5"/></svg>
<div class="t" style="left:89.0px;top:708.7px;">Voltage</div>
<svg style="left:88px;top:728px" width="17" height="17" viewBox="0 0 17 17"><rect x="0.5" y="0.5" width="16" height="16" fill="#fff" stroke="#3a3a3a"/><path d="M2.60 8.20 L7.30 12.60 L14.00 3.40" fill="none" stroke="#111" stroke-width="2.5"/></svg>
<div class="t" style="left:112.7px;top:728.7px;font-size:15px;transform-origin:0 0;transform:scaleX(0.8341);">V_PPCa</div>
<svg style="left:21px;top:868px" width="18" height="18" viewBox="0 0 18 18"><rect x="0.5" y="0.5" width="17" height="17" fill="#fff" stroke="#555"/><path d="M2.75 8.68 L7.73 13.34 L14.82 3.60" fill="none" stroke="#111" stroke-width="2.5"/></svg>
<div class="t" style="left:45.7px;top:868.8px;font-size:15px;transform-origin:0 0;transform:scaleX(0.9718);">Same color per scenario</div>
<div class="t" style="left:20.5px;top:898.0px;font-size:15px;transform-origin:0 0;transform:scaleX(0.9674);">Specific Y axis target:</div>
<div class="a" style="left:162px;top:895px;width:103px;height:28px;background:#e5e5e5;border:1px solid #adadad"></div>
<div class="t" style="left:170.0px;top:902.1px;">Automatic</div>
<svg style="left:249px;top:904px" width="10" height="7" viewBox="0 0 10 7"><path d="M1 1 L5 5 L9 1" fill="none" stroke="#444" stroke-width="1.3"/></svg>
<div class="a" style="left:275px;top:872px;width:344px;height:74px;border:1px solid #fbfbff;border-radius:4px;box-shadow:inset 0 0 0 1px #c8d0e4"></div>
<div class="a" style="left:282px;top:865px;width:34px;height:14px;background:#d5dbea"></div>
<div class="t" style="left:285.8px;top:864.3px;">Plot</div>
<div class="a" style="left:343px;top:885px;width:131px;height:25px;background:#dedede;border:1px solid #6e6e6e"></div>
<div class="t" style="left:258.5px;top:890.6px;width:300px;text-align:center;">New Plot</div>
<div class="a" style="left:478px;top:885px;width:131px;height:25px;background:#dedede;border:1px solid #6e6e6e"></div>
<div class="t" style="left:393.5px;top:890.6px;width:300px;text-align:center;">New Subplots</div>
<div class="a" style="left:343px;top:913.5px;width:131px;height:25px;background:#dedede;border:1px solid #6e6e6e"></div>
<div class="t" style="left:258.5px;top:919.1px;width:300px;text-align:center;">Add</div>
<div class="a" style="left:478px;top:913.5px;width:131px;height:25px;background:#dedede;border:1px solid #6e6e6e"></div>
<div class="t" style="left:393.5px;top:919.1px;width:300px;text-align:center;">Add To All</div>

<div class="a" style="left:640px;top:180px;width:1235px;height:783px;background:#c8d3e6;border-left:1px solid #8a94b8;border-bottom:1px solid #9aa6c8;border-right:1px solid #d6def0"></div>
<div class="a" style="left:641px;top:180px;width:1234px;height:26px;background:#5e6a96"></div>
<div class="a" style="left:641px;top:180px;width:187px;height:27px;background:#00c8fa"></div>
<div class="a" style="left:641px;top:204px;width:187px;height:1px;background:#18b0dc"></div>
<div class="t" style="left:646.3px;top:186.1px;font-size:15px;transform-origin:0 0;transform:scaleX(0.9356);">Time Domain (V_PPCa)</div>
<svg style="left:810px;top:189px" width="12" height="11" viewBox="0 0 12 11"><path d="M0.5 0.5 L11.5 10.5 M11.5 0.5 L0.5 10.5" stroke="#8a6a3a" stroke-width="1.5"/></svg>
<svg style="left:1861px;top:186px" width="11" height="11" viewBox="0 0 11 11"><path d="M1 1 H10" stroke="#e8ecf4" stroke-width="1.5"/><path d="M0.5 3.5 H10.5 L5.5 9.5 Z" fill="#e8ecf4"/></svg>
<div class="a" style="left:649px;top:214px;width:837px;height:740px;background:#8f9ec3"></div>
<div class="a" style="left:651px;top:216px;width:833px;height:1px;background:#c3cbe2"></div>
<div class="a" style="left:652px;top:217.5px;width:831px;height:26.5px;background:#00c8fa"></div>
<div class="a" style="left:652px;top:244px;width:831px;height:706px;background:#fff"></div>
<div class="a" style="left:1484px;top:216px;width:1px;height:736px;background:#c3cbe2"></div>
<div class="a" style="left:651px;top:951px;width:833px;height:1px;background:#c3cbe2"></div>
<div class="t" style="left:657.8px;top:223.3px;">Chart</div>
<svg style="left:1441px;top:230px" width="10" height="6" viewBox="0 0 10 6"><path d="M0 0 H10 L5 6 Z" fill="#8a6440"/></svg>
<svg style="left:1463px;top:226px" width="10" height="14" viewBox="0 0 10 14"><path d="M2 1 H8 M3 1 V8 H7 V1 M1 8 H9 M5 8 V14" fill="none" stroke="#8a6440" stroke-width="1.6"/></svg>
<svg style="left:0;top:0" width="1909" height="1014" viewBox="0 0 1909 1014"><g stroke="#b4b4b4" stroke-width="1" stroke-dasharray="2 6"><line x1="727" y1="877.5" x2="1462.5" y2="877.5"/><line x1="727" y1="847.5" x2="1462.5" y2="847.5"/><line x1="727" y1="818.5" x2="1462.5" y2="818.5"/><line x1="727" y1="788.5" x2="1462.5" y2="788.5"/><line x1="727" y1="758.5" x2="1462.5" y2="758.5"/><line x1="727" y1="728.5" x2="1462.5" y2="728.5"/><line x1="727" y1="699.5" x2="1462.5" y2="699.5"/><line x1="727" y1="669.5" x2="1462.5" y2="669.5"/><line x1="727" y1="639.5" x2="1462.5" y2="639.5"/><line x1="727" y1="610.5" x2="1462.5" y2="610.5"/><line x1="727" y1="580.5" x2="1462.5" y2="580.5"/><line x1="727" y1="550.5" x2="1462.5" y2="550.5"/><line x1="727" y1="521.5" x2="1462.5" y2="521.5"/><line x1="727" y1="491.5" x2="1462.5" y2="491.5"/><line x1="727" y1="461.5" x2="1462.5" y2="461.5"/><line x1="727" y1="431.5" x2="1462.5" y2="431.5"/><line x1="727" y1="402.5" x2="1462.5" y2="402.5"/><line x1="727" y1="372.5" x2="1462.5" y2="372.5"/><line x1="727" y1="342.5" x2="1462.5" y2="342.5"/><line x1="727" y1="313.5" x2="1462.5" y2="313.5"/><line x1="727" y1="283.5" x2="1462.5" y2="283.5"/><line x1="782.5" y1="266.5" x2="782.5" y2="899.5"/><line x1="849.5" y1="266.5" x2="849.5" y2="899.5"/><line x1="916.5" y1="266.5" x2="916.5" y2="899.5"/><line x1="983.5" y1="266.5" x2="983.5" y2="899.5"/><line x1="1050.5" y1="266.5" x2="1050.5" y2="899.5"/><line x1="1117.5" y1="266.5" x2="1117.5" y2="899.5"/><line x1="1185.5" y1="266.5" x2="1185.5" y2="899.5"/><line x1="1252.5" y1="266.5" x2="1252.5" y2="899.5"/><line x1="1319.5" y1="266.5" x2="1319.5" y2="899.5"/><line x1="1386.5" y1="266.5" x2="1386.5" y2="899.5"/><line x1="1453.5" y1="266.5" x2="1453.5" y2="899.5"/></g><clipPath id="pc"><rect x="726" y="265.5" width="736.5" height="634.0"/></clipPath><g clip-path="url(#pc)"><polyline points="725.2,875.3 725.7,875.3 726.2,875.0 726.7,874.5 727.1,873.9 727.6,873.0 728.1,871.9 728.5,870.6 729.0,869.2 729.5,867.5 729.9,865.6 730.4,863.5 730.9,861.2 731.4,858.8 731.8,856.1 732.3,853.2 732.8,850.2 733.2,846.9 733.7,843.5 734.2,839.9 734.6,836.1 735.1,832.2 735.6,828.0 736.1,823.7 736.5,819.2 737.0,814.6 737.5,809.8 737.9,804.8 738.4,799.7 738.9,794.4 739.3,788.9 739.8,783.4 740.3,777.6 740.8,771.8 741.2,765.8 741.7,759.7 742.2,753.5 742.6,747.1 743.1,740.6 743.6,734.0 744.0,727.3 744.5,720.5 745.0,713.6 745.5,706.6 745.9,699.6 746.4,692.4 746.9,685.2 747.3,677.9 747.8,670.5 748.3,663.0 748.7,655.5 749.2,648.0 749.7,640.4 750.1,632.7 750.6,625.1 751.1,617.4 751.6,609.6 752.0,601.9 752.5,594.1 753.0,586.3 753.4,578.5 753.9,570.8 754.4,563.0 754.8,555.2 755.3,547.5 755.8,539.8 756.3,532.1 756.7,524.4 757.2,516.8 757.7,509.2 758.1,501.7 758.6,494.2 759.1,486.8 759.5,479.5 760.0,472.2 760.5,465.0 761.0,457.9 761.4,450.8 761.9,443.9 762.4,437.0 762.8,430.3 763.3,423.6 763.8,417.1 764.2,410.7 764.7,404.4 765.2,398.2 765.7,392.1 766.1,386.2 766.6,380.4 767.1,374.8 767.5,369.3 768.0,363.9 768.5,358.7 768.9,353.6 769.4,348.7 769.9,344.0 770.4,339.4 770.8,335.0 771.3,330.8 771.8,326.7 772.2,322.9 772.7,319.2 773.2,315.6 773.6,312.3 774.1,309.1 774.6,306.2 775.1,303.4 775.5,300.8 776.0,298.5 776.5,296.3 776.9,294.3 777.4,292.5 777.9,290.9 778.3,289.5 778.8,288.3 779.3,287.4 779.7,286.6 780.2,286.0 780.7,285.6 781.2,285.5 781.6,285.5 782.1,285.8 782.6,468.7 783.0,384.1 783.5,301.2 784.0,301.2 784.4,341.2 784.9,389.2 785.4,436.8 785.9,484.0 786.3,530.8 786.8,470.1 787.3,378.3 787.7,301.2 788.2,326.5 788.7,326.8 789.1,318.5 789.6,392.2 790.1,502.3 790.6,622.1 791.0,494.7 791.5,368.7 792.0,328.8 792.4,401.6 792.9,473.8 793.4,545.2 793.8,616.0 794.3,686.0 794.8,533.3 795.3,445.4 795.7,374.5 796.2,369.0 796.7,380.7 797.1,440.2 797.6,530.2 798.1,592.4 798.5,602.7 799.0,528.8 799.5,455.8 800.0,417.2 800.4,462.5 800.9,507.4 801.4,551.9 801.8,595.9 802.3,639.5 802.8,576.3 803.2,499.0 803.7,422.5 804.2,435.0 804.7,482.4 805.1,529.4 805.6,575.8 806.1,621.8 806.5,641.0 807.0,603.1 807.5,565.6 807.9,537.5 808.4,563.3 808.9,588.8 809.3,614.1 809.8,639.0 810.3,663.8 810.8,663.6 811.2,599.2 811.7,535.6 812.2,531.3 812.6,570.7 813.1,609.8 813.6,648.4 814.0,686.6 814.5,743.3 815.0,671.3 815.5,600.2 815.9,529.8 816.4,572.6 816.9,614.9 817.3,656.8 817.8,698.2 818.3,739.1 818.7,740.5 819.2,658.9 819.7,578.2 820.2,552.8 820.6,599.9 821.1,646.5 821.6,692.6 822.0,738.1 822.5,783.1 823.0,684.7 823.4,659.0 823.9,633.6 824.4,644.2 824.9,660.5 825.3,676.6 825.8,692.4 826.3,708.0 826.7,733.3 827.2,693.0 827.7,653.1 828.1,631.5 828.6,654.6 829.1,677.4 829.6,699.9 830.0,722.1 830.5,744.0 831.0,718.2 831.4,693.7 831.9,669.5 832.4,707.2 832.8,752.5 833.3,788.3 833.8,761.7 834.3,744.0 834.7,763.6 835.2,692.4 835.7,621.8 836.1,567.3 836.6,605.1 837.1,642.4 837.5,679.2 838.0,715.6 838.5,751.4 838.9,742.9 839.4,681.6 839.9,621.0 840.4,613.2 840.8,644.4 841.3,675.2 841.8,705.6 842.2,735.6 842.7,715.7 843.2,695.4 843.6,675.2 844.1,655.2 844.6,663.7 845.1,672.0 845.5,680.2 846.0,688.2 846.5,696.1 846.9,742.7 847.4,669.1 847.9,596.3 848.3,570.6 848.8,606.8 849.3,642.6 849.8,677.9 850.2,712.8 850.7,747.2 851.2,671.2 851.6,601.8 852.1,533.1 852.6,552.4 853.0,586.0 853.5,619.1 854.0,651.9 854.5,684.2 854.9,709.1 855.4,658.1 855.9,607.6 856.3,578.4 856.8,601.5 857.3,624.3 857.7,646.8 858.2,669.0 858.7,690.9 859.2,635.8 859.6,589.1 860.1,542.8 860.6,544.7 861.0,565.5 861.5,586.0 862.0,606.3 862.4,626.4 862.9,613.2 863.4,590.0 863.9,567.0 864.3,548.6 864.8,556.9 865.3,565.0 865.7,573.0 866.2,580.9 866.7,588.8 867.1,575.6 867.6,560.0 868.1,544.5 868.5,540.4 869.0,544.8 869.5,549.2 870.0,553.5 870.4,557.8 870.9,562.0 871.4,566.4 871.8,529.5 872.3,493.0 872.8,509.3 873.2,525.4 873.7,541.3 874.2,557.1 874.7,572.7 875.1,538.8 875.6,523.0 876.1,507.4 876.5,500.9 877.0,506.4 877.5,511.8 877.9,517.1 878.4,522.5 878.9,527.8 879.4,517.0 879.8,497.3 880.3,477.7 880.8,482.1 881.2,490.4 881.7,498.7 882.2,506.9 882.6,515.1 883.1,518.3 883.6,497.8 884.1,477.5 884.5,465.9 885.0,475.4 885.5,484.8 885.9,494.2 886.4,503.5 886.9,512.8 887.3,493.4 887.8,482.0 888.3,470.8 888.8,471.6 889.2,477.1 889.7,482.6 890.2,488.1 890.6,493.6 891.1,523.3 891.6,497.8 892.0,472.8 892.5,453.5 893.0,467.2 893.5,480.9 893.9,494.5 894.4,508.0 894.9,521.5 895.3,505.3 895.8,482.6 896.3,460.1 896.7,458.2 897.2,471.5 897.7,484.7 898.1,497.9 898.6,511.0 899.1,546.2 899.6,512.1 900.0,478.5 900.5,445.4 901.0,465.4 901.4,485.3 901.9,505.0 902.4,524.6 902.8,544.0 903.3,523.8 903.8,501.7 904.3,480.0 904.7,473.8 905.2,488.3 905.7,502.6 906.1,516.8 906.6,531.0 907.1,545.0 907.5,530.3 908.0,506.4 908.5,482.8 909.0,493.2 909.4,509.2 909.9,525.1 910.4,540.9 910.8,556.5 911.3,568.3 911.8,549.4 912.2,530.7 912.7,521.5 913.2,535.0 913.7,548.5 914.1,561.9 914.6,575.1 915.1,588.3 915.5,567.4 916.0,545.6 916.5,524.1 916.9,529.1 917.4,544.6 917.9,559.9 918.4,575.1 918.8,590.2 919.3,602.3 919.8,586.6 920.2,571.0 920.7,559.6 921.2,571.8 921.6,583.9 922.1,595.8 922.6,607.7 923.1,619.4 923.5,614.5 924.0,603.8 924.5,593.3 924.9,594.1 925.4,603.4 925.9,612.6 926.3,621.7 926.8,630.7 927.3,639.6 927.7,641.9 928.2,615.4 928.7,589.2 929.2,606.7 929.6,624.0 930.1,641.2 930.6,658.1 931.0,674.9 931.5,661.9 932.0,636.3 932.4,611.0 932.9,603.7 933.4,620.2 933.9,636.5 934.3,652.5 934.8,668.4 935.3,684.0 935.7,669.2 936.2,647.7 936.7,626.5 937.1,635.2 937.6,648.7 938.1,662.1 938.6,675.2 939.0,688.2 939.5,683.7 940.0,665.3 940.4,647.1 940.9,637.4 941.4,648.7 941.8,659.7 942.3,670.6 942.8,681.3 943.3,691.8 943.7,681.6 944.2,671.0 944.7,660.5 945.1,662.0 945.6,668.1 946.1,674.2 946.5,680.1 947.0,685.9 947.5,681.9 948.0,672.8 948.4,663.7 948.9,656.7 949.4,661.3 949.8,665.8 950.3,670.2 950.8,674.5 951.2,678.7 951.7,681.0 952.2,670.7 952.7,660.5 953.1,658.7 953.6,663.1 954.1,667.3 954.5,671.4 955.0,675.4 955.5,670.1 955.9,663.4 956.4,656.7 956.9,649.9 957.3,651.7 957.8,653.4 958.3,655.0 958.8,656.6 959.2,658.0 959.7,670.2 960.2,652.4 960.6,634.6 961.1,627.6 961.6,634.6 962.0,641.5 962.5,648.2 963.0,654.8 963.5,661.3 963.9,643.6 964.4,631.7 964.9,619.7 965.3,620.9 965.8,624.2 966.3,627.5 966.7,630.6 967.2,633.6 967.7,638.1 968.2,619.9 968.6,601.8 969.1,590.8 969.6,597.1 970.0,603.3 970.5,609.3 971.0,615.3 971.4,621.2 971.9,606.1 972.4,594.8 972.9,583.5 973.3,582.0 973.8,584.4 974.3,586.8 974.7,589.0 975.2,591.3 975.7,601.2 976.1,582.7 976.6,564.3 977.1,549.6 977.6,555.8 978.0,562.0 978.5,568.0 979.0,573.9 979.4,579.8 979.9,570.8 980.4,554.5 980.8,538.4 981.3,534.6 981.8,539.7 982.3,544.8 982.7,549.9 983.2,554.9 983.7,544.1 984.1,538.7 984.6,533.3 985.1,528.1 985.5,527.8 986.0,527.5 986.5,527.2 986.9,526.9 987.4,526.7 987.9,527.1 988.4,519.8 988.8,512.5 989.3,509.0 989.8,510.2 990.2,511.5 990.7,512.7 991.2,514.0 991.6,515.3 992.1,520.4 992.6,506.2 993.1,492.2 993.5,495.0 994.0,500.5 994.5,506.0 994.9,511.5 995.4,517.0 995.9,503.7 996.3,495.0 996.8,486.5 997.3,481.5 997.8,484.8 998.2,488.1 998.7,491.5 999.2,494.9 999.6,498.3 1000.1,506.2 1000.6,493.4 1001.0,480.8 1001.5,481.7 1002.0,488.1 1002.5,494.4 1002.9,500.7 1003.4,507.0 1003.9,500.6 1004.3,494.3 1004.8,488.2 1005.3,483.5 1005.7,487.1 1006.2,490.8 1006.7,494.5 1007.2,498.2 1007.6,502.0 1008.1,494.4 1008.6,491.9 1009.0,489.5 1009.5,489.9 1010.0,492.4 1010.4,495.0 1010.9,497.5 1011.4,500.1 1011.9,502.8 1012.3,505.7 1012.8,499.1 1013.3,492.7 1013.7,498.1 1014.2,503.6 1014.7,509.0 1015.1,514.5 1015.6,519.9 1016.1,524.0 1016.5,516.9 1017.0,509.9 1017.5,508.7 1018.0,515.0 1018.4,521.3 1018.9,527.6 1019.4,533.9 1019.8,540.2 1020.3,530.8 1020.8,528.5 1021.2,526.3 1021.7,529.7 1022.2,534.0 1022.7,538.3 1023.1,542.6 1023.6,547.0 1024.1,546.7 1024.5,546.2 1025.0,545.7 1025.5,546.5 1025.9,550.2 1026.4,553.9 1026.9,557.7 1027.4,561.4 1027.8,565.1 1028.3,566.0 1028.8,564.1 1029.2,562.2 1029.7,565.0 1030.2,569.7 1030.6,574.4 1031.1,579.0 1031.6,583.7 1032.1,598.2 1032.5,592.1 1033.0,586.0 1033.5,581.9 1033.9,588.8 1034.4,595.6 1034.9,602.4 1035.3,609.1 1035.8,615.8 1036.3,612.6 1036.8,608.1 1037.2,603.8 1037.7,605.2 1038.2,611.1 1038.6,616.8 1039.1,622.5 1039.6,628.1 1040.0,626.8 1040.5,626.5 1041.0,626.1 1041.5,625.8 1041.9,629.1 1042.4,632.4 1042.9,635.6 1043.3,638.8 1043.8,641.9 1044.3,644.4 1044.7,643.1 1045.2,641.8 1045.7,642.5 1046.1,645.8 1046.6,649.0 1047.1,652.2 1047.6,655.3 1048.0,658.3 1048.5,656.0 1049.0,655.3 1049.4,654.5 1049.9,656.4 1050.4,658.8 1050.8,661.0 1051.3,663.2 1051.8,665.3 1052.3,665.9 1052.7,665.0 1053.2,664.1 1053.7,663.9 1054.1,665.6 1054.6,667.2 1055.1,668.8 1055.5,670.3 1056.0,671.7 1056.5,671.8 1057.0,666.7 1057.4,661.5 1057.9,662.3 1058.4,665.5 1058.8,668.5 1059.3,671.5 1059.8,674.4 1060.2,673.7 1060.7,671.4 1061.2,669.0 1061.7,667.0 1062.1,667.9 1062.6,668.7 1063.1,669.4 1063.5,670.0 1064.0,670.6 1064.5,670.0 1064.9,665.3 1065.4,660.7 1065.9,659.5 1066.4,660.7 1066.8,661.9 1067.3,662.9 1067.8,663.9 1068.2,665.0 1068.7,660.6 1069.2,656.2 1069.6,651.7 1070.1,652.1 1070.6,652.5 1071.1,652.8 1071.5,653.0 1072.0,653.1 1072.5,649.5 1072.9,645.9 1073.4,642.3 1073.9,639.9 1074.3,639.2 1074.8,638.5 1075.3,637.7 1075.7,636.9 1076.2,636.0 1076.7,634.0 1077.2,627.9 1077.6,621.8 1078.1,621.1 1078.6,621.2 1079.0,621.3 1079.5,621.3 1080.0,621.3 1080.4,617.5 1080.9,613.7 1081.4,609.9 1081.9,606.8 1082.3,605.3 1082.8,603.9 1083.3,602.4 1083.7,600.9 1084.2,599.3 1084.7,597.7 1085.1,591.9 1085.6,586.1 1086.1,584.1 1086.6,583.5 1087.0,582.9 1087.5,582.3 1088.0,581.7 1088.4,577.4 1088.9,573.6 1089.4,569.9 1089.8,566.4 1090.3,564.8 1090.8,563.2 1091.3,561.6 1091.7,560.0 1092.2,558.4 1092.7,557.4 1093.1,552.7 1093.6,548.1 1094.1,545.6 1094.5,544.6 1095.0,543.7 1095.5,542.8 1096.0,541.8 1096.4,538.5 1096.9,534.8 1097.4,531.2 1097.8,527.7 1098.3,526.5 1098.8,525.4 1099.2,524.4 1099.7,523.3 1100.2,522.3 1100.7,521.1 1101.1,517.7 1101.6,514.3 1102.1,512.1 1102.5,511.4 1103.0,510.7 1103.5,510.1 1103.9,509.5 1104.4,509.0 1104.9,508.6 1105.3,503.6 1105.8,498.7 1106.3,498.7 1106.8,499.5 1107.2,500.4 1107.7,501.2 1108.2,502.2 1108.6,500.1 1109.1,496.1 1109.6,492.3 1110.0,489.9 1110.5,490.8 1111.0,491.8 1111.5,492.9 1111.9,494.0 1112.4,495.1 1112.9,491.5 1113.3,489.7 1113.8,487.9 1114.3,487.8 1114.7,488.6 1115.2,489.3 1115.7,490.1 1116.2,491.0 1116.6,494.7 1117.1,491.9 1117.6,489.1 1118.0,487.1 1118.5,489.1 1119.0,491.2 1119.4,493.2 1119.9,495.3 1120.4,497.5 1120.9,495.0 1121.3,494.5 1121.8,494.1 1122.3,494.9 1122.7,496.4 1123.2,498.0 1123.7,499.7 1124.1,501.4 1124.6,504.5 1125.1,504.1 1125.6,503.8 1126.0,503.6 1126.5,505.8 1127.0,508.0 1127.4,510.3 1127.9,512.7 1128.4,515.0 1128.8,517.6 1129.3,516.7 1129.8,515.9 1130.3,516.8 1130.7,519.9 1131.2,523.1 1131.7,526.3 1132.1,529.5 1132.6,532.8 1133.1,532.5 1133.5,532.6 1134.0,532.7 1134.5,535.4 1134.9,538.5 1135.4,541.7 1135.9,544.9 1136.4,548.1 1136.8,548.6 1137.3,550.1 1137.8,551.6 1138.2,553.4 1138.7,556.2 1139.2,558.9 1139.6,561.6 1140.1,564.4 1140.6,567.1 1141.1,570.0 1141.5,569.9 1142.0,569.8 1142.5,572.5 1142.9,576.2 1143.4,579.9 1143.9,583.6 1144.3,587.3 1144.8,589.0 1145.3,590.5 1145.8,592.0 1146.2,593.6 1146.7,596.5 1147.2,599.3 1147.6,602.1 1148.1,604.9 1148.6,607.7 1149.0,609.3 1149.5,610.6 1150.0,611.9 1150.5,614.1 1150.9,616.8 1151.4,619.4 1151.9,622.1 1152.3,624.7 1152.8,627.2 1153.3,628.8 1153.7,629.1 1154.2,629.3 1154.7,632.2 1155.2,635.1 1155.6,637.9 1156.1,640.6 1156.6,643.3 1157.0,644.0 1157.5,644.7 1158.0,645.4 1158.4,646.7 1158.9,648.8 1159.4,650.8 1159.8,652.8 1160.3,654.7 1160.8,656.6 1161.3,656.9 1161.7,657.3 1162.2,657.7 1162.7,659.1 1163.1,660.7 1163.6,662.2 1164.1,663.6 1164.5,665.0 1165.0,666.0 1165.5,666.3 1166.0,666.5 1166.4,666.9 1166.9,667.8 1167.4,668.6 1167.8,669.4 1168.3,670.1 1168.8,670.8 1169.2,670.5 1169.7,670.3 1170.2,669.9 1170.7,670.1 1171.1,670.5 1171.6,670.7 1172.1,670.9 1172.5,671.1 1173.0,672.2 1173.5,670.8 1173.9,669.4 1174.4,668.1 1174.9,668.3 1175.4,668.4 1175.8,668.4 1176.3,668.4 1176.8,668.3 1177.2,666.7 1177.7,665.3 1178.2,663.7 1178.6,662.7 1179.1,662.1 1179.6,661.4 1180.1,660.7 1180.5,659.9 1181.0,659.0 1181.5,657.7 1181.9,655.3 1182.4,652.9 1182.9,652.0 1183.3,651.1 1183.8,650.2 1184.3,649.2 1184.8,648.1 1185.2,646.0 1185.7,643.6 1186.2,641.1 1186.6,639.0 1187.1,637.6 1187.6,636.1 1188.0,634.6 1188.5,633.1 1189.0,631.5 1189.4,628.6 1189.9,625.7 1190.4,622.8 1190.9,621.0 1191.3,619.3 1191.8,617.6 1192.3,615.8 1192.7,614.0 1193.2,613.1 1193.7,609.5 1194.1,605.9 1194.6,602.8 1195.1,601.2 1195.6,599.6 1196.0,598.0 1196.5,596.3 1197.0,594.6 1197.4,591.0 1197.9,587.8 1198.4,584.7 1198.8,582.4 1199.3,580.4 1199.8,578.4 1200.3,576.4 1200.7,574.4 1201.2,572.4 1201.7,569.2 1202.1,566.0 1202.6,563.0 1203.1,561.1 1203.5,559.2 1204.0,557.3 1204.5,555.5 1205.0,553.6 1205.4,551.0 1205.9,547.7 1206.4,544.4 1206.8,542.1 1207.3,540.5 1207.8,538.9 1208.2,537.4 1208.7,535.8 1209.2,533.6 1209.7,531.1 1210.1,528.7 1210.6,526.4 1211.1,524.7 1211.5,523.0 1212.0,521.4 1212.5,519.8 1212.9,518.3 1213.4,516.5 1213.9,514.5 1214.4,512.5 1214.8,510.8 1215.3,509.5 1215.8,508.2 1216.2,507.0 1216.7,505.8 1217.2,504.7 1217.6,503.2 1218.1,501.1 1218.6,499.0 1219.0,498.2 1219.5,497.6 1220.0,497.2 1220.5,496.7 1220.9,496.4 1221.4,495.8 1221.9,494.2 1222.3,492.7 1222.8,491.6 1223.3,491.5 1223.7,491.4 1224.2,491.4 1224.7,491.5 1225.2,491.6 1225.6,490.6 1226.1,490.1 1226.6,489.5 1227.0,489.5 1227.5,489.7 1228.0,490.0 1228.4,490.3 1228.9,490.7 1229.4,490.8 1229.9,490.8 1230.3,490.9 1230.8,491.0 1231.3,491.7 1231.7,492.4 1232.2,493.2 1232.7,494.1 1233.1,495.0 1233.6,495.8 1234.1,495.9 1234.6,496.2 1235.0,497.1 1235.5,498.5 1236.0,499.9 1236.4,501.4 1236.9,503.0 1237.4,505.0 1237.8,505.5 1238.3,506.1 1238.8,506.7 1239.3,508.6 1239.7,510.6 1240.2,512.5 1240.7,514.5 1241.1,516.6 1241.6,517.8 1242.1,519.3 1242.5,520.8 1243.0,522.5 1243.5,524.5 1244.0,526.6 1244.4,528.7 1244.9,530.8 1245.4,532.9 1245.8,535.0 1246.3,536.4 1246.8,537.8 1247.2,540.1 1247.7,542.7 1248.2,545.3 1248.6,547.9 1249.1,550.5 1249.6,552.6 1250.1,554.3 1250.5,555.9 1251.0,557.9 1251.5,560.6 1251.9,563.3 1252.4,565.9 1252.9,568.6 1253.3,571.4 1253.8,573.2 1254.3,575.2 1254.8,577.1 1255.2,579.5 1255.7,582.2 1256.2,584.8 1256.6,587.4 1257.1,590.1 1257.6,592.5 1258.0,594.5 1258.5,596.5 1259.0,598.6 1259.5,601.1 1259.9,603.6 1260.4,606.1 1260.9,608.6 1261.3,611.0 1261.8,613.1 1262.3,615.1 1262.7,617.2 1263.2,619.3 1263.7,621.5 1264.2,623.8 1264.6,625.9 1265.1,628.1 1265.6,630.1 1266.0,631.9 1266.5,633.7 1267.0,635.5 1267.4,637.4 1267.9,639.4 1268.4,641.2 1268.9,643.0 1269.3,644.8 1269.8,647.1 1270.3,648.2 1270.7,649.2 1271.2,650.6 1271.7,652.3 1272.1,654.0 1272.6,655.7 1273.1,657.3 1273.6,658.8 1274.0,659.3 1274.5,660.3 1275.0,661.1 1275.4,662.3 1275.9,663.4 1276.4,664.4 1276.8,665.4 1277.3,666.3 1277.8,667.2 1278.2,667.5 1278.7,667.8 1279.2,668.1 1279.7,668.8 1280.1,669.5 1280.6,670.1 1281.1,670.6 1281.5,671.1 1282.0,671.0 1282.5,670.9 1282.9,670.8 1283.4,670.8 1283.9,670.9 1284.4,670.9 1284.8,670.8 1285.3,670.6 1285.8,670.6 1286.2,669.8 1286.7,669.0 1287.2,668.2 1287.6,667.8 1288.1,667.4 1288.6,667.0 1289.1,666.5 1289.5,665.9 1290.0,664.9 1290.5,663.7 1290.9,662.4 1291.4,661.3 1291.9,660.4 1292.3,659.4 1292.8,658.4 1293.3,657.3 1293.8,656.1 1294.2,654.3 1294.7,652.7 1295.2,651.1 1295.6,649.6 1296.1,648.2 1296.6,646.7 1297.0,645.1 1297.5,643.5 1298.0,641.8 1298.5,639.9 1298.9,637.9 1299.4,636.0 1299.9,634.2 1300.3,632.3 1300.8,630.4 1301.3,628.5 1301.7,626.5 1302.2,624.3 1302.7,621.9 1303.2,619.5 1303.6,617.4 1304.1,615.4 1304.6,613.4 1305.0,611.3 1305.5,609.2 1306.0,606.7 1306.4,604.3 1306.9,601.9 1307.4,599.5 1307.8,597.3 1308.3,595.0 1308.8,592.6 1309.3,590.3 1309.7,588.0 1310.2,585.6 1310.7,583.1 1311.1,580.6 1311.6,578.2 1312.1,575.9 1312.5,573.6 1313.0,571.3 1313.5,569.0 1314.0,566.7 1314.4,564.1 1314.9,561.6 1315.4,559.1 1315.8,556.9 1316.3,554.7 1316.8,552.5 1317.2,550.4 1317.7,548.2 1318.2,546.1 1318.7,543.6 1319.1,541.1 1319.6,538.9 1320.1,537.0 1320.5,535.0 1321.0,533.1 1321.5,531.3 1321.9,529.4 1322.4,527.2 1322.9,525.1 1323.4,523.0 1323.8,521.3 1324.3,519.6 1324.8,517.9 1325.2,516.3 1325.7,514.8 1326.2,513.1 1326.6,511.4 1327.1,509.7 1327.6,508.2 1328.1,506.9 1328.5,505.6 1329.0,504.3 1329.5,503.1 1329.9,502.0 1330.4,500.7 1330.9,499.3 1331.3,498.0 1331.8,497.1 1332.3,496.3 1332.8,495.6 1333.2,494.9 1333.7,494.3 1334.2,493.5 1334.6,492.7 1335.1,492.1 1335.6,491.5 1336.0,491.1 1336.5,490.8 1337.0,490.5 1337.4,490.3 1337.9,490.1 1338.4,489.9 1338.9,489.8 1339.3,489.7 1339.8,489.8 1340.3,489.9 1340.7,490.2 1341.2,490.4 1341.7,490.8 1342.1,491.2 1342.6,491.6 1343.1,491.9 1343.6,492.4 1344.0,493.1 1344.5,493.8 1345.0,494.6 1345.4,495.5 1345.9,496.4 1346.4,497.3 1346.8,498.1 1347.3,499.0 1347.8,500.1 1348.3,501.3 1348.7,502.5 1349.2,503.8 1349.7,505.2 1350.1,506.5 1350.6,507.9 1351.1,509.3 1351.5,510.7 1352.0,512.3 1352.5,514.0 1353.0,515.6 1353.4,517.4 1353.9,519.1 1354.4,520.9 1354.8,522.7 1355.3,524.5 1355.8,526.3 1356.2,528.3 1356.7,530.3 1357.2,532.4 1357.7,534.5 1358.1,536.6 1358.6,538.6 1359.1,540.6 1359.5,542.7 1360.0,544.9 1360.5,547.2 1360.9,549.5 1361.4,551.8 1361.9,554.1 1362.4,556.6 1362.8,558.7 1363.3,560.9 1363.8,563.2 1364.2,565.6 1364.7,568.1 1365.2,570.5 1365.6,572.9 1366.1,575.4 1366.6,577.6 1367.0,579.9 1367.5,582.3 1368.0,584.7 1368.5,587.1 1368.9,589.5 1369.4,591.9 1369.9,594.3 1370.3,596.7 1370.8,599.0 1371.3,601.2 1371.7,603.5 1372.2,605.8 1372.7,608.1 1373.2,610.5 1373.6,612.7 1374.1,615.0 1374.6,617.3 1375.0,619.3 1375.5,621.3 1376.0,623.4 1376.4,625.6 1376.9,627.7 1377.4,629.8 1377.9,631.9 1378.3,633.9 1378.8,635.6 1379.3,637.3 1379.7,639.0 1380.2,640.9 1380.7,642.7 1381.1,644.5 1381.6,646.3 1382.1,648.0 1382.6,649.5 1383.0,651.0 1383.5,652.3 1384.0,653.7 1384.4,655.1 1384.9,656.5 1385.4,657.8 1385.8,659.1 1386.3,660.3 1386.8,661.3 1387.3,662.3 1387.7,663.2 1388.2,664.1 1388.7,665.1 1389.1,665.9 1389.6,666.8 1390.1,667.5 1390.5,668.2 1391.0,668.6 1391.5,669.1 1392.0,669.5 1392.4,669.9 1392.9,670.3 1393.4,670.6 1393.8,670.8 1394.3,671.0 1394.8,671.0 1395.2,671.0 1395.7,670.9 1396.2,670.8 1396.6,670.6 1397.1,670.4 1397.6,670.1 1398.1,669.8 1398.5,669.4 1399.0,668.8 1399.5,668.3 1399.9,667.6 1400.4,667.0 1400.9,666.3 1401.3,665.5 1401.8,664.6 1402.3,663.8 1402.8,662.8 1403.2,661.7 1403.7,660.6 1404.2,659.5 1404.6,658.3 1405.1,657.1 1405.6,655.8 1406.0,654.4 1406.5,653.2 1407.0,651.6 1407.5,650.0 1407.9,648.3 1408.4,646.8 1408.9,645.2 1409.3,643.6 1409.8,641.9 1410.3,640.2 1410.7,638.3 1411.2,636.4 1411.7,634.4 1412.2,632.4 1412.6,630.5 1413.1,628.5 1413.6,626.5 1414.0,624.5 1414.5,622.4 1415.0,620.3 1415.4,618.0 1415.9,615.7 1416.4,613.5 1416.9,611.3 1417.3,609.1 1417.8,606.9 1418.3,604.7 1418.7,602.3 1419.2,600.0 1419.7,597.6 1420.1,595.2 1420.6,592.9 1421.1,590.5 1421.6,588.1 1422.0,585.8 1422.5,583.4 1423.0,581.0 1423.4,578.6 1423.9,576.1 1424.4,573.7 1424.8,571.4 1425.3,569.0 1425.8,566.7 1426.2,564.4 1426.7,562.1 1427.2,559.7 1427.7,557.3 1428.1,555.0 1428.6,552.7 1429.1,550.5 1429.5,548.2 1430.0,546.0 1430.5,543.9 1430.9,541.7 1431.4,539.5 1431.9,537.3 1432.4,535.2 1432.8,533.2 1433.3,531.2 1433.8,529.2 1434.2,527.3 1434.7,525.4 1435.2,523.5 1435.6,521.6 1436.1,519.7 1436.6,518.0 1437.1,516.3 1437.5,514.7 1438.0,513.1 1438.5,511.5 1438.9,510.0 1439.4,508.5 1439.9,507.0 1440.3,505.6 1440.8,504.3 1441.3,503.1 1441.8,501.9 1442.2,500.8 1442.7,499.7 1443.2,498.5 1443.6,497.5 1444.1,496.6 1444.6,495.7 1445.0,494.9 1445.5,494.1 1446.0,493.5 1446.5,492.8 1446.9,492.3 1447.4,491.7 1447.9,491.2 1448.3,490.8 1448.8,490.5 1449.3,490.3 1449.7,490.1 1450.2,490.0 1450.7,489.9 1451.2,489.9 1451.6,489.8 1452.1,489.9 1452.6,490.1 1453.0,490.3 1453.5,490.7 1454.0,491.1 1454.4,491.5 1454.9,492.1 1455.4,492.5 1455.8,493.1 1456.3,493.7 1456.8,494.5 1457.3,495.3 1457.7,496.2 1458.2,497.1 1458.7,498.1 1459.1,499.1 1459.6,500.1 1460.1,501.2 1460.5,502.4 1461.0,503.7 1461.5,505.0 1462.0,506.4 1462.4,507.8 1462.9,509.3 1463.4,510.7 1463.8,512.2 1464.3,513.8 1464.8,515.4 1465.2,517.2" fill="none" stroke="#008000" stroke-width="1.1" stroke-linejoin="round" shape-rendering="crispEdges"/><polyline points="725.2,875.3 725.7,875.3 726.2,875.0 726.7,874.5 727.1,873.9 727.6,873.0 728.1,871.9 728.5,870.6 729.0,869.2 729.5,867.5 729.9,865.6 730.4,863.5 730.9,861.2 731.4,858.8 731.8,856.1 732.3,853.2 732.8,850.2 733.2,846.9 733.7,843.5 734.2,839.9 734.6,836.1 735.1,832.2 735.6,828.0 736.1,823.7 736.5,819.2 737.0,814.6 737.5,809.8 737.9,804.8 738.4,799.7 738.9,794.4 739.3,788.9 739.8,783.4 740.3,777.6 740.8,771.8 741.2,765.8 741.7,759.7 742.2,753.5 742.6,747.1 743.1,740.6 743.6,734.0 744.0,727.3 744.5,720.5 745.0,713.6 745.5,706.6 745.9,699.6 746.4,692.4 746.9,685.2 747.3,677.9 747.8,670.5 748.3,663.0 748.7,655.5 749.2,648.0 749.7,640.4 750.1,632.7 750.6,625.1 751.1,617.4 751.6,609.6 752.0,601.9 752.5,594.1 753.0,586.3 753.4,578.5 753.9,570.8 754.4,563.0 754.8,555.2 755.3,547.5 755.8,539.8 756.3,532.1 756.7,524.4 757.2,516.8 757.7,509.2 758.1,501.7 758.6,494.2 759.1,486.8 759.5,479.5 760.0,472.2 760.5,465.0 761.0,457.9 761.4,450.8 761.9,443.9 762.4,437.0 762.8,430.3 763.3,423.6 763.8,417.1 764.2,410.7 764.7,404.4 765.2,398.2 765.7,392.1 766.1,386.2 766.6,380.4 767.1,374.8 767.5,369.3 768.0,363.9 768.5,358.7 768.9,353.6 769.4,348.7 769.9,344.0 770.4,339.4 770.8,335.0 771.3,330.8 771.8,326.7 772.2,322.9 772.7,319.2 773.2,315.6 773.6,312.3 774.1,309.1 774.6,306.2 775.1,303.4 775.5,300.8 776.0,298.5 776.5,296.3 776.9,294.3 777.4,292.5 777.9,290.9 778.3,289.5 778.8,288.3 779.3,287.4 779.7,286.6 780.2,286.0 780.7,285.6 781.2,285.5 781.6,285.5 782.1,285.8 782.6,385.0 783.0,334.3 783.5,301.2 784.0,301.2 784.4,331.9 784.9,362.5 785.4,392.9 785.9,423.1 786.3,421.3 786.8,361.9 787.3,303.4 787.7,337.2 788.2,374.1 788.7,410.6 789.1,433.8 789.6,407.8 790.1,336.0 790.6,322.6 791.0,315.4 791.5,346.1 792.0,387.9 792.4,424.0 792.9,459.8 793.4,462.2 793.8,441.4 794.3,421.0 794.8,410.6 795.3,429.2 795.7,447.6 796.2,465.9 796.7,484.1 797.1,490.3 797.6,478.9 798.1,467.8 798.5,466.8 799.0,480.9 799.5,494.9 800.0,508.9 800.4,522.8 800.9,534.2 801.4,503.8 801.8,474.0 802.3,473.5 802.8,498.2 803.2,522.6 803.7,546.8 804.2,570.7 804.7,578.7 805.1,555.4 805.6,532.4 806.1,539.3 806.5,560.0 807.0,580.5 807.5,600.8 807.9,620.9 808.4,621.5 808.9,572.8 809.3,524.7 809.8,544.4 810.3,578.4 810.8,612.0 811.2,645.2 811.7,678.0 812.2,659.1 812.6,618.3 813.1,578.0 813.6,604.9 814.0,633.9 814.5,662.5 815.0,690.8 815.5,718.6 815.9,704.1 816.4,668.9 816.9,640.6 817.3,665.8 817.8,690.7 818.3,715.3 818.7,739.4 819.2,749.0 819.7,716.6 820.2,684.6 820.6,666.5 821.1,689.0 821.6,711.1 822.0,732.9 822.5,754.3 823.0,765.9 823.4,730.3 823.9,695.1 824.4,683.0 824.9,705.9 825.3,728.5 825.8,750.7 826.3,772.5 826.7,767.1 827.2,752.6 827.7,738.2 828.1,737.1 828.6,747.3 829.1,757.2 829.6,766.9 830.0,776.4 830.5,791.0 831.0,765.4 831.4,740.0 831.9,741.9 832.4,756.4 832.8,770.6 833.3,784.5 833.8,798.1 834.3,770.2 834.7,754.8 835.2,739.5 835.7,743.2 836.1,750.9 836.6,758.4 837.1,765.6 837.5,772.6 838.0,780.7 838.5,740.2 838.9,700.1 839.4,717.9 839.9,737.4 840.4,756.6 840.8,775.4 841.3,793.8 841.8,750.6 842.2,738.1 842.7,727.4 843.2,730.9 843.6,734.2 844.1,737.3 844.6,740.3 845.1,743.1 845.5,729.7 846.0,694.0 846.5,671.3 846.9,686.1 847.4,700.6 847.9,714.8 848.3,728.7 848.8,720.8 849.3,707.3 849.8,693.9 850.2,686.5 850.7,688.3 851.2,689.9 851.6,691.3 852.1,692.7 852.6,715.6 853.0,685.2 853.5,655.1 854.0,646.6 854.5,656.5 854.9,666.2 855.4,675.7 855.9,684.9 856.3,652.2 856.8,632.0 857.3,612.0 857.7,608.5 858.2,612.7 858.7,616.7 859.2,620.6 859.6,624.3 860.1,624.9 860.6,603.7 861.0,582.6 861.5,582.6 862.0,587.0 862.4,591.4 862.9,595.6 863.4,599.7 863.9,601.1 864.3,570.4 864.8,539.9 865.3,548.2 865.7,557.7 866.2,567.0 866.7,576.3 867.1,585.3 867.6,538.9 868.1,528.1 868.5,518.6 869.0,517.9 869.5,517.3 870.0,516.7 870.4,516.0 870.9,515.4 871.4,505.5 871.8,494.6 872.3,486.5 872.8,486.6 873.2,486.7 873.7,486.8 874.2,487.0 874.7,516.3 875.1,488.6 875.6,461.3 876.1,448.7 876.5,458.4 877.0,468.0 877.5,477.6 877.9,487.0 878.4,469.2 878.9,451.4 879.4,433.8 879.8,428.7 880.3,434.3 880.8,440.0 881.2,445.6 881.7,451.2 882.2,444.6 882.6,436.0 883.1,427.5 883.6,426.1 884.1,428.0 884.5,429.9 885.0,432.0 885.5,434.1 885.9,435.6 886.4,412.5 886.9,389.8 887.3,394.8 887.8,405.8 888.3,416.7 888.8,427.6 889.2,438.5 889.7,435.8 890.2,415.3 890.6,395.2 891.1,405.0 891.6,415.9 892.0,426.7 892.5,437.6 893.0,448.4 893.5,424.1 893.9,418.8 894.4,414.5 894.9,418.7 895.3,423.0 895.8,427.3 896.3,431.7 896.7,440.3 897.2,431.2 897.7,422.4 898.1,417.7 898.6,425.1 899.1,432.5 899.6,440.0 900.0,447.4 900.5,449.3 901.0,445.7 901.4,442.2 901.9,442.4 902.4,448.0 902.8,453.7 903.3,459.5 903.8,465.3 904.3,467.4 904.7,462.4 905.2,457.6 905.7,459.4 906.1,466.8 906.6,474.3 907.1,481.8 907.5,489.3 908.0,499.7 908.5,491.6 909.0,483.7 909.4,487.9 909.9,497.8 910.4,507.6 910.8,517.4 911.3,527.2 911.8,522.4 912.2,520.9 912.7,519.6 913.2,525.0 913.7,531.9 914.1,538.8 914.6,545.7 915.1,552.6 915.5,556.6 916.0,549.5 916.5,542.5 916.9,552.2 917.4,562.4 917.9,572.6 918.4,582.7 918.8,592.7 919.3,583.5 919.8,584.1 920.2,585.4 920.7,591.6 921.2,597.7 921.6,603.8 922.1,609.8 922.6,619.5 923.1,618.9 923.5,618.3 924.0,619.5 924.5,626.1 924.9,632.6 925.4,639.0 925.9,645.3 926.3,661.3 926.8,654.0 927.3,646.9 927.7,646.4 928.2,655.9 928.7,665.3 929.2,674.6 929.6,683.7 930.1,683.2 930.6,680.0 931.0,676.9 931.5,679.1 932.0,685.7 932.4,692.1 932.9,698.5 933.4,704.7 933.9,705.3 934.3,701.7 934.8,698.1 935.3,701.0 935.7,706.9 936.2,712.6 936.7,718.2 937.1,723.7 937.6,723.3 938.1,717.8 938.6,712.3 939.0,716.1 939.5,721.9 940.0,727.5 940.4,732.9 940.9,738.2 941.4,733.7 941.8,728.8 942.3,723.8 942.8,727.8 943.3,732.0 943.7,736.1 944.2,740.0 944.7,743.7 945.1,739.1 945.6,734.4 946.1,730.4 946.5,733.3 947.0,736.1 947.5,738.7 948.0,741.2 948.4,743.5 948.9,738.5 949.4,735.7 949.8,733.7 950.3,734.2 950.8,734.5 951.2,734.8 951.7,734.9 952.2,741.0 952.7,732.6 953.1,724.1 953.6,719.9 954.1,722.1 954.5,724.2 955.0,726.1 955.5,727.9 955.9,725.1 956.4,714.6 956.9,704.1 957.3,700.5 957.8,702.6 958.3,704.6 958.8,706.4 959.2,708.1 959.7,706.1 960.2,695.3 960.6,684.5 961.1,681.9 961.6,683.2 962.0,684.3 962.5,685.3 963.0,686.2 963.5,681.6 963.9,672.5 964.4,663.4 964.9,661.4 965.3,660.9 965.8,660.2 966.3,659.5 966.7,658.7 967.2,649.7 967.7,642.3 968.2,634.8 968.6,632.7 969.1,630.7 969.6,628.6 970.0,626.5 970.5,624.3 971.0,616.2 971.4,608.6 971.9,601.6 972.4,599.4 972.9,597.1 973.3,594.8 973.8,592.4 974.3,590.1 974.7,584.5 975.2,575.3 975.7,568.1 976.1,566.6 976.6,565.1 977.1,563.6 977.6,562.1 978.0,559.7 978.5,550.8 979.0,542.0 979.4,536.1 979.9,534.6 980.4,533.1 980.8,531.7 981.3,530.2 981.8,522.7 982.3,517.0 982.7,511.4 983.2,507.4 983.7,504.7 984.1,502.0 984.6,499.3 985.1,496.8 985.5,494.4 986.0,488.7 986.5,483.1 986.9,479.9 987.4,477.9 987.9,476.0 988.4,474.1 988.8,472.3 989.3,468.9 989.8,463.3 990.2,457.9 990.7,455.9 991.2,454.8 991.6,453.7 992.1,452.7 992.6,451.8 993.1,449.0 993.5,443.6 994.0,438.4 994.5,438.0 994.9,437.8 995.4,437.8 995.9,437.8 996.3,437.9 996.8,434.0 997.3,428.5 997.8,423.8 998.2,424.9 998.7,426.1 999.2,427.4 999.6,428.8 1000.1,430.2 1000.6,425.4 1001.0,422.1 1001.5,420.0 1002.0,421.2 1002.5,422.6 1002.9,424.0 1003.4,425.6 1003.9,423.9 1004.3,423.1 1004.8,422.4 1005.3,422.5 1005.7,423.7 1006.2,425.0 1006.7,426.4 1007.2,427.8 1007.6,432.6 1008.1,430.0 1008.6,427.6 1009.0,428.4 1009.5,431.8 1010.0,435.3 1010.4,438.8 1010.9,442.5 1011.4,441.6 1011.9,441.3 1012.3,441.1 1012.8,443.4 1013.3,446.8 1013.7,450.4 1014.2,454.0 1014.7,457.6 1015.1,460.6 1015.6,460.8 1016.1,461.2 1016.5,464.7 1017.0,468.9 1017.5,473.2 1018.0,477.5 1018.4,481.9 1018.9,483.4 1019.4,485.3 1019.8,487.2 1020.3,491.3 1020.8,495.6 1021.2,499.8 1021.7,504.2 1022.2,508.6 1022.7,511.1 1023.1,513.0 1023.6,515.2 1024.1,520.1 1024.5,525.0 1025.0,529.9 1025.5,534.8 1025.9,540.4 1026.4,542.6 1026.9,544.9 1027.4,548.0 1027.8,553.0 1028.3,558.0 1028.8,563.0 1029.2,568.0 1029.7,572.6 1030.2,574.2 1030.6,575.8 1031.1,578.9 1031.6,584.5 1032.1,590.0 1032.5,595.5 1033.0,601.0 1033.5,603.9 1033.9,607.1 1034.4,610.3 1034.9,614.2 1035.3,618.8 1035.8,623.2 1036.3,627.7 1036.8,632.1 1037.2,637.5 1037.7,639.5 1038.2,641.5 1038.6,645.4 1039.1,650.1 1039.6,654.8 1040.0,659.4 1040.5,663.9 1041.0,666.0 1041.5,668.5 1041.9,670.9 1042.4,674.5 1042.9,678.3 1043.3,682.1 1043.8,685.7 1044.3,689.3 1044.7,693.2 1045.2,694.1 1045.7,695.0 1046.1,698.7 1046.6,702.4 1047.1,706.1 1047.6,709.6 1048.0,713.0 1048.5,712.2 1049.0,713.8 1049.4,715.5 1049.9,717.8 1050.4,720.1 1050.8,722.3 1051.3,724.3 1051.8,727.4 1052.3,727.9 1052.7,728.3 1053.2,729.1 1053.7,730.8 1054.1,732.5 1054.6,734.1 1055.1,735.5 1055.5,736.3 1056.0,736.0 1056.5,735.5 1057.0,735.6 1057.4,736.5 1057.9,737.4 1058.4,738.1 1058.8,738.7 1059.3,740.1 1059.8,738.4 1060.2,736.6 1060.7,736.0 1061.2,736.3 1061.7,736.5 1062.1,736.6 1062.6,736.5 1063.1,734.0 1063.5,732.4 1064.0,730.8 1064.5,729.5 1064.9,728.5 1065.4,727.3 1065.9,726.0 1066.4,724.6 1066.8,722.8 1067.3,719.8 1067.8,716.8 1068.2,715.0 1068.7,713.5 1069.2,711.8 1069.6,710.1 1070.1,708.2 1070.6,705.1 1071.1,701.9 1071.5,698.5 1072.0,696.1 1072.5,693.6 1072.9,691.1 1073.4,688.4 1073.9,685.7 1074.3,682.1 1074.8,678.2 1075.3,674.3 1075.7,671.3 1076.2,668.3 1076.7,665.2 1077.2,662.1 1077.6,659.6 1078.1,655.0 1078.6,650.3 1079.0,646.0 1079.5,642.7 1080.0,639.4 1080.4,636.0 1080.9,632.6 1081.4,629.6 1081.9,624.1 1082.3,618.6 1082.8,614.0 1083.3,610.7 1083.7,607.4 1084.2,604.1 1084.7,600.8 1085.1,595.8 1085.6,590.8 1086.1,585.8 1086.6,581.5 1087.0,577.8 1087.5,574.1 1088.0,570.4 1088.4,566.7 1088.9,562.7 1089.4,557.2 1089.8,551.7 1090.3,547.7 1090.8,544.4 1091.3,541.1 1091.7,537.8 1092.2,534.5 1092.7,529.8 1093.1,525.4 1093.6,521.1 1094.1,517.4 1094.5,513.8 1095.0,510.3 1095.5,506.9 1096.0,503.5 1096.4,500.6 1096.9,495.8 1097.4,491.2 1097.8,488.3 1098.3,485.6 1098.8,483.0 1099.2,480.4 1099.7,477.8 1100.2,473.3 1100.7,469.7 1101.1,466.3 1101.6,463.8 1102.1,461.3 1102.5,459.0 1103.0,456.7 1103.5,454.2 1103.9,451.4 1104.4,448.6 1104.9,446.1 1105.3,444.2 1105.8,442.4 1106.3,440.7 1106.8,439.0 1107.2,438.1 1107.7,435.5 1108.2,433.1 1108.6,431.3 1109.1,430.4 1109.6,429.6 1110.0,429.0 1110.5,428.4 1111.0,427.5 1111.5,425.7 1111.9,424.0 1112.4,423.3 1112.9,423.3 1113.3,423.4 1113.8,423.7 1114.3,424.0 1114.7,423.2 1115.2,423.1 1115.7,423.0 1116.2,423.3 1116.6,423.8 1117.1,424.4 1117.6,425.1 1118.0,425.9 1118.5,426.7 1119.0,427.2 1119.4,427.8 1119.9,429.1 1120.4,430.5 1120.9,432.1 1121.3,433.7 1121.8,435.5 1122.3,437.4 1122.7,438.4 1123.2,439.5 1123.7,441.8 1124.1,444.2 1124.6,446.8 1125.1,449.4 1125.6,452.1 1126.0,453.5 1126.5,455.6 1127.0,457.9 1127.4,460.8 1127.9,463.7 1128.4,466.8 1128.8,469.9 1129.3,473.1 1129.8,475.7 1130.3,478.5 1130.7,481.5 1131.2,485.0 1131.7,488.5 1132.1,492.1 1132.6,495.7 1133.1,499.4 1133.5,502.8 1134.0,506.2 1134.5,509.9 1134.9,513.7 1135.4,517.6 1135.9,521.5 1136.4,525.4 1136.8,529.3 1137.3,533.1 1137.8,536.9 1138.2,540.9 1138.7,545.0 1139.2,549.2 1139.6,553.3 1140.1,557.5 1140.6,561.7 1141.1,565.4 1141.5,569.0 1142.0,573.2 1142.5,577.6 1142.9,582.0 1143.4,586.4 1143.9,590.8 1144.3,595.3 1144.8,598.7 1145.3,602.2 1145.8,606.5 1146.2,610.9 1146.7,615.3 1147.2,619.7 1147.6,624.0 1148.1,627.7 1148.6,631.0 1149.0,634.3 1149.5,638.5 1150.0,642.6 1150.5,646.8 1150.9,650.8 1151.4,654.9 1151.9,657.7 1152.3,660.9 1152.8,664.1 1153.3,667.8 1153.7,671.4 1154.2,675.0 1154.7,678.5 1155.2,681.7 1155.6,684.7 1156.1,687.6 1156.6,690.5 1157.0,693.5 1157.5,696.4 1158.0,699.3 1158.4,702.0 1158.9,704.9 1159.4,707.1 1159.8,709.3 1160.3,711.5 1160.8,713.9 1161.3,716.2 1161.7,718.4 1162.2,720.5 1162.7,722.5 1163.1,723.9 1163.6,725.1 1164.1,726.6 1164.5,728.3 1165.0,729.9 1165.5,731.3 1166.0,732.7 1166.4,733.7 1166.9,734.2 1167.4,734.6 1167.8,735.3 1168.3,736.2 1168.8,736.9 1169.2,737.5 1169.7,738.0 1170.2,738.1 1170.7,737.8 1171.1,737.4 1171.6,737.4 1172.1,737.3 1172.5,737.1 1173.0,736.8 1173.5,736.3 1173.9,735.4 1174.4,734.4 1174.9,733.3 1175.4,732.4 1175.8,731.3 1176.3,730.2 1176.8,729.0 1177.2,727.6 1177.7,725.9 1178.2,724.0 1178.6,722.0 1179.1,720.3 1179.6,718.5 1180.1,716.6 1180.5,714.6 1181.0,712.6 1181.5,710.0 1181.9,707.3 1182.4,704.7 1182.9,702.2 1183.3,699.7 1183.8,697.1 1184.3,694.4 1184.8,691.6 1185.2,688.4 1185.7,685.0 1186.2,681.8 1186.6,678.7 1187.1,675.6 1187.6,672.4 1188.0,669.1 1188.5,665.6 1189.0,661.9 1189.4,658.2 1189.9,654.5 1190.4,650.9 1190.9,647.3 1191.3,643.5 1191.8,639.8 1192.3,636.1 1192.7,631.9 1193.2,627.6 1193.7,623.7 1194.1,619.8 1194.6,616.0 1195.1,612.1 1195.6,608.2 1196.0,603.9 1196.5,599.5 1197.0,595.1 1197.4,591.0 1197.9,587.0 1198.4,583.1 1198.8,579.1 1199.3,575.1 1199.8,570.6 1200.3,566.4 1200.7,562.1 1201.2,558.0 1201.7,554.0 1202.1,550.0 1202.6,546.0 1203.1,542.0 1203.5,537.9 1204.0,533.8 1204.5,529.7 1205.0,525.8 1205.4,522.0 1205.9,518.3 1206.4,514.5 1206.8,510.9 1207.3,507.1 1207.8,503.2 1208.2,499.4 1208.7,496.0 1209.2,492.7 1209.7,489.4 1210.1,486.2 1210.6,482.9 1211.1,479.5 1211.5,476.3 1212.0,473.1 1212.5,470.2 1212.9,467.3 1213.4,464.5 1213.9,461.8 1214.4,459.2 1214.8,456.3 1215.3,453.6 1215.8,451.1 1216.2,448.9 1216.7,446.8 1217.2,444.8 1217.6,442.8 1218.1,440.9 1218.6,438.9 1219.0,436.9 1219.5,435.3 1220.0,433.8 1220.5,432.4 1220.9,431.1 1221.4,430.0 1221.9,428.8 1222.3,427.6 1222.8,426.5 1223.3,425.7 1223.7,425.1 1224.2,424.5 1224.7,424.1 1225.2,423.8 1225.6,423.3 1226.1,423.0 1226.6,422.7 1227.0,422.9 1227.5,423.1 1228.0,423.5 1228.4,423.9 1228.9,424.5 1229.4,424.9 1229.9,425.5 1230.3,426.3 1230.8,427.2 1231.3,428.3 1231.7,429.4 1232.2,430.7 1232.7,432.1 1233.1,433.4 1233.6,434.9 1234.1,436.4 1234.6,438.2 1235.0,440.1 1235.5,442.1 1236.0,444.2 1236.4,446.3 1236.9,448.5 1237.4,450.7 1237.8,453.1 1238.3,455.6 1238.8,458.2 1239.3,460.9 1239.7,463.7 1240.2,466.6 1240.7,469.4 1241.1,472.2 1241.6,475.3 1242.1,478.5 1242.5,481.7 1243.0,485.1 1243.5,488.5 1244.0,491.8 1244.4,495.2 1244.9,498.6 1245.4,502.1 1245.8,505.8 1246.3,509.6 1246.8,513.4 1247.2,517.3 1247.7,521.0 1248.2,524.8 1248.6,528.7 1249.1,532.7 1249.6,536.7 1250.1,540.7 1250.5,544.7 1251.0,548.8 1251.5,552.9 1251.9,556.9 1252.4,560.9 1252.9,565.1 1253.3,569.3 1253.8,573.5 1254.3,577.7 1254.8,582.0 1255.2,586.0 1255.7,590.1 1256.2,594.1 1256.6,598.3 1257.1,602.5 1257.6,606.6 1258.0,610.8 1258.5,614.9 1259.0,618.8 1259.5,622.7 1259.9,626.7 1260.4,630.7 1260.9,634.6 1261.3,638.5 1261.8,642.4 1262.3,646.3 1262.7,650.0 1263.2,653.6 1263.7,657.2 1264.2,660.8 1264.6,664.4 1265.1,667.9 1265.6,671.4 1266.0,674.8 1266.5,677.9 1267.0,681.0 1267.4,684.2 1267.9,687.3 1268.4,690.4 1268.9,693.4 1269.3,696.3 1269.8,699.1 1270.3,701.7 1270.7,704.2 1271.2,706.7 1271.7,709.2 1272.1,711.6 1272.6,713.9 1273.1,716.1 1273.6,718.1 1274.0,720.0 1274.5,721.8 1275.0,723.6 1275.4,725.3 1275.9,726.9 1276.4,728.4 1276.8,729.8 1277.3,731.1 1277.8,732.2 1278.2,733.1 1278.7,734.1 1279.2,735.0 1279.7,735.8 1280.1,736.4 1280.6,737.0 1281.1,737.3 1281.5,737.5 1282.0,737.6 1282.5,737.7 1282.9,737.7 1283.4,737.6 1283.9,737.4 1284.4,737.1 1284.8,736.5 1285.3,735.9 1285.8,735.2 1286.2,734.4 1286.7,733.5 1287.2,732.6 1287.6,731.5 1288.1,730.3 1288.6,728.9 1289.1,727.4 1289.5,725.9 1290.0,724.3 1290.5,722.6 1290.9,720.8 1291.4,718.8 1291.9,716.8 1292.3,714.7 1292.8,712.4 1293.3,710.1 1293.8,707.7 1294.2,705.2 1294.7,702.7 1295.2,700.1 1295.6,697.3 1296.1,694.4 1296.6,691.5 1297.0,688.5 1297.5,685.5 1298.0,682.4 1298.5,679.2 1298.9,676.0 1299.4,672.7 1299.9,669.2 1300.3,665.7 1300.8,662.2 1301.3,658.6 1301.7,655.0 1302.2,651.4 1302.7,647.7 1303.2,643.9 1303.6,640.0 1304.1,636.1 1304.6,632.2 1305.0,628.3 1305.5,624.3 1306.0,620.4 1306.4,616.4 1306.9,612.2 1307.4,608.1 1307.8,604.0 1308.3,599.9 1308.8,595.8 1309.3,591.7 1309.7,587.5 1310.2,583.4 1310.7,579.2 1311.1,575.1 1311.6,570.9 1312.1,566.8 1312.5,562.6 1313.0,558.5 1313.5,554.5 1314.0,550.4 1314.4,546.3 1314.9,542.2 1315.4,538.1 1315.8,534.2 1316.3,530.2 1316.8,526.4 1317.2,522.5 1317.7,518.6 1318.2,514.8 1318.7,511.0 1319.1,507.3 1319.6,503.7 1320.1,500.1 1320.5,496.6 1321.0,493.1 1321.5,489.7 1321.9,486.3 1322.4,483.0 1322.9,479.8 1323.4,476.6 1323.8,473.5 1324.3,470.5 1324.8,467.6 1325.2,464.7 1325.7,461.9 1326.2,459.2 1326.6,456.6 1327.1,454.1 1327.6,451.7 1328.1,449.3 1328.5,447.1 1329.0,445.0 1329.5,442.8 1329.9,440.8 1330.4,439.0 1330.9,437.2 1331.3,435.6 1331.8,434.0 1332.3,432.6 1332.8,431.1 1333.2,429.8 1333.7,428.6 1334.2,427.6 1334.6,426.7 1335.1,425.9 1335.6,425.1 1336.0,424.6 1336.5,424.0 1337.0,423.5 1337.4,423.2 1337.9,423.0 1338.4,423.0 1338.9,423.0 1339.3,423.2 1339.8,423.5 1340.3,423.8 1340.7,424.2 1341.2,424.7 1341.7,425.5 1342.1,426.3 1342.6,427.2 1343.1,428.2 1343.6,429.3 1344.0,430.5 1344.5,431.8 1345.0,433.2 1345.4,434.8 1345.9,436.4 1346.4,438.1 1346.8,440.0 1347.3,441.9 1347.8,443.9 1348.3,446.0 1348.7,448.2 1349.2,450.5 1349.7,452.9 1350.1,455.4 1350.6,458.0 1351.1,460.7 1351.5,463.4 1352.0,466.2 1352.5,469.1 1353.0,472.1 1353.4,475.1 1353.9,478.3 1354.4,481.5 1354.8,484.7 1355.3,488.0 1355.8,491.4 1356.2,494.9 1356.7,498.4 1357.2,502.0 1357.7,505.6 1358.1,509.3 1358.6,513.0 1359.1,516.8 1359.5,520.6 1360.0,524.5 1360.5,528.4 1360.9,532.3 1361.4,536.3 1361.9,540.3 1362.4,544.3 1362.8,548.4 1363.3,552.4 1363.8,556.5 1364.2,560.7 1364.7,564.8 1365.2,568.9 1365.6,573.1 1366.1,577.3 1366.6,581.4 1367.0,585.5 1367.5,589.7 1368.0,593.8 1368.5,598.0 1368.9,602.1 1369.4,606.2 1369.9,610.3 1370.3,614.3 1370.8,618.4 1371.3,622.4 1371.7,626.4 1372.2,630.4 1372.7,634.3 1373.2,638.2 1373.6,642.0 1374.1,645.8 1374.6,649.5 1375.0,653.3 1375.5,656.9 1376.0,660.5 1376.4,664.1 1376.9,667.6 1377.4,671.0 1377.9,674.3 1378.3,677.6 1378.8,680.9 1379.3,684.1 1379.7,687.2 1380.2,690.2 1380.7,693.1 1381.1,696.0 1381.6,698.7 1382.1,701.4 1382.6,704.0 1383.0,706.6 1383.5,709.0 1384.0,711.4 1384.4,713.6 1384.9,715.8 1385.4,717.8 1385.8,719.8 1386.3,721.7 1386.8,723.5 1387.3,725.2 1387.7,726.8 1388.2,728.2 1388.7,729.6 1389.1,730.9 1389.6,732.0 1390.1,733.1 1390.5,734.1 1391.0,734.9 1391.5,735.7 1392.0,736.3 1392.4,736.8 1392.9,737.2 1393.4,737.5 1393.8,737.7 1394.3,737.8 1394.8,737.8 1395.2,737.7 1395.7,737.4 1396.2,737.0 1396.6,736.6 1397.1,736.0 1397.6,735.3 1398.1,734.6 1398.5,733.7 1399.0,732.7 1399.5,731.6 1399.9,730.3 1400.4,729.0 1400.9,727.6 1401.3,726.1 1401.8,724.5 1402.3,722.8 1402.8,720.9 1403.2,719.0 1403.7,717.0 1404.2,714.9 1404.6,712.7 1405.1,710.4 1405.6,708.0 1406.0,705.5 1406.5,702.9 1407.0,700.3 1407.5,697.5 1407.9,694.7 1408.4,691.8 1408.9,688.9 1409.3,685.8 1409.8,682.7 1410.3,679.5 1410.7,676.2 1411.2,672.9 1411.7,669.5 1412.2,666.1 1412.6,662.6 1413.1,659.0 1413.6,655.4 1414.0,651.7 1414.5,648.0 1415.0,644.2 1415.4,640.4 1415.9,636.5 1416.4,632.6 1416.9,628.7 1417.3,624.7 1417.8,620.7 1418.3,616.7 1418.7,612.6 1419.2,608.5 1419.7,604.4 1420.1,600.3 1420.6,596.2 1421.1,592.1 1421.6,587.9 1422.0,583.8 1422.5,579.6 1423.0,575.5 1423.4,571.3 1423.9,567.2 1424.4,563.0 1424.8,558.9 1425.3,554.8 1425.8,550.7 1426.2,546.6 1426.7,542.6 1427.2,538.6 1427.7,534.6 1428.1,530.6 1428.6,526.7 1429.1,522.8 1429.5,519.0 1430.0,515.2 1430.5,511.4 1430.9,507.7 1431.4,504.1 1431.9,500.5 1432.4,496.9 1432.8,493.4 1433.3,490.0 1433.8,486.6 1434.2,483.3 1434.7,480.1 1435.2,476.9 1435.6,473.8 1436.1,470.8 1436.6,467.8 1437.1,465.0 1437.5,462.2 1438.0,459.5 1438.5,456.9 1438.9,454.3 1439.4,451.9 1439.9,449.5 1440.3,447.3 1440.8,445.1 1441.3,443.0 1441.8,441.1 1442.2,439.2 1442.7,437.4 1443.2,435.7 1443.6,434.1 1444.1,432.6 1444.6,431.2 1445.0,430.0 1445.5,428.8 1446.0,427.7 1446.5,426.8 1446.9,425.9 1447.4,425.2 1447.9,424.5 1448.3,424.0 1448.8,423.6 1449.3,423.3 1449.7,423.1 1450.2,423.0 1450.7,423.0 1451.2,423.1 1451.6,423.4 1452.1,423.7 1452.6,424.2 1453.0,424.7 1453.5,425.4 1454.0,426.2 1454.4,427.1 1454.9,428.1 1455.4,429.2 1455.8,430.4 1456.3,431.7 1456.8,433.1 1457.3,434.6 1457.7,436.3 1458.2,438.0 1458.7,439.8 1459.1,441.7 1459.6,443.7 1460.1,445.8 1460.5,448.0 1461.0,450.3 1461.5,452.7 1462.0,455.2 1462.4,457.7 1462.9,460.4 1463.4,463.1 1463.8,465.9 1464.3,468.8 1464.8,471.8 1465.2,474.8" fill="none" stroke="#00ff00" stroke-width="1.1" stroke-linejoin="round" shape-rendering="crispEdges"/><polyline points="725.2,875.3 725.7,875.3 726.2,875.0 726.7,874.5 727.1,873.9 727.6,873.0 728.1,871.9 728.5,870.6 729.0,869.2 729.5,867.5 729.9,865.6 730.4,863.5 730.9,861.2 731.4,858.8 731.8,856.1 732.3,853.2 732.8,850.2 733.2,846.9 733.7,843.5 734.2,839.9 734.6,836.1 735.1,832.2 735.6,828.0 736.1,823.7 736.5,819.2 737.0,814.6 737.5,809.8 737.9,804.8 738.4,799.7 738.9,794.4 739.3,788.9 739.8,783.4 740.3,777.6 740.8,771.8 741.2,765.8 741.7,759.7 742.2,753.5 742.6,747.1 743.1,740.6 743.6,734.0 744.0,727.3 744.5,720.5 745.0,713.6 745.5,706.6 745.9,699.6 746.4,692.4 746.9,685.2 747.3,677.9 747.8,670.5 748.3,663.0 748.7,655.5 749.2,648.0 749.7,640.4 750.1,632.7 750.6,625.1 751.1,617.4 751.6,609.6 752.0,601.9 752.5,594.1 753.0,586.3 753.4,578.5 753.9,570.8 754.4,563.0 754.8,555.2 755.3,547.5 755.8,539.8 756.3,532.1 756.7,524.4 757.2,516.8 757.7,509.2 758.1,501.7 758.6,494.2 759.1,486.8 759.5,479.5 760.0,472.2 760.5,465.0 761.0,457.9 761.4,450.8 761.9,443.9 762.4,437.0 762.8,430.3 763.3,423.6 763.8,417.1 764.2,410.7 764.7,404.4 765.2,398.2 765.7,392.1 766.1,386.2 766.6,380.4 767.1,374.8 767.5,369.3 768.0,363.9 768.5,358.7 768.9,353.6 769.4,348.7 769.9,344.0 770.4,339.4 770.8,335.0 771.3,330.8 771.8,326.7 772.2,322.9 772.7,319.2 773.2,315.6 773.6,312.3 774.1,309.1 774.6,306.2 775.1,303.4 775.5,300.8 776.0,298.5 776.5,296.3 776.9,294.3 777.4,292.5 777.9,290.9 778.3,289.5 778.8,288.3 779.3,287.4 779.7,286.6 780.2,286.0 780.7,285.6 781.2,285.5 781.6,285.5 782.1,285.8 782.6,500.8 783.0,442.3 783.5,391.3 784.0,428.5 784.4,465.5 784.9,502.1 785.4,538.4 785.9,598.3 786.3,493.6 786.8,389.9 787.3,440.1 787.7,501.4 788.2,562.1 788.7,622.3 789.1,603.1 789.6,502.2 790.1,402.4 790.6,428.2 791.0,487.5 791.5,546.3 792.0,604.4 792.4,691.6 792.9,576.5 793.4,564.0 793.8,707.1 794.3,851.6 794.8,787.1 795.3,734.3 795.7,621.4 796.2,577.8 796.7,534.7 797.1,527.3 797.6,555.3 798.1,583.0 798.5,610.3 799.0,637.4 799.5,637.8 800.0,628.0 800.4,703.9 800.9,800.6 801.4,794.6 801.8,738.0 802.3,700.9 802.8,635.5 803.2,598.3 803.7,574.3 804.2,597.8 804.7,621.0 805.1,644.0 805.6,666.7 806.1,673.8 806.5,630.2 807.0,592.0 807.5,618.1 807.9,643.9 808.4,669.3 808.9,694.5 809.3,747.2 809.8,659.7 810.3,573.1 810.8,612.3 811.2,660.6 811.7,708.3 812.2,755.5 812.6,668.4 813.1,537.3 813.6,429.6 814.0,418.0 814.5,519.8 815.0,634.6 815.5,698.2 815.9,732.3 816.4,666.7 816.9,601.7 817.3,601.6 817.8,637.1 818.3,672.3 818.7,707.0 819.2,726.3 819.7,687.6 820.2,610.0 820.6,537.2 821.1,473.5 821.6,509.8 822.0,601.7 822.5,707.2 823.0,686.8 823.4,643.3 823.9,623.6 824.4,646.3 824.9,668.7 825.3,690.8 825.8,712.7 826.3,699.1 826.7,646.6 827.2,611.4 827.7,638.3 828.1,665.0 828.6,691.3 829.1,717.2 829.6,709.0 830.0,629.1 830.5,558.5 831.0,599.8 831.4,640.6 831.9,680.9 832.4,720.8 832.8,706.6 833.3,644.8 833.8,583.6 834.3,608.1 834.7,638.8 835.2,669.2 835.7,699.2 836.1,652.3 836.6,631.8 837.1,611.5 837.5,614.0 838.0,622.5 838.5,631.0 838.9,639.3 839.4,655.5 839.9,618.7 840.4,582.3 840.8,580.5 841.3,597.5 841.8,614.4 842.2,631.1 842.7,636.5 843.2,608.9 843.6,581.5 844.1,574.0 844.6,586.2 845.1,598.1 845.5,610.0 846.0,621.7 846.5,625.1 846.9,555.6 847.4,523.7 847.9,558.4 848.3,592.7 848.8,626.7 849.3,660.3 849.8,604.9 850.2,541.3 850.7,498.6 851.2,530.3 851.6,561.6 852.1,592.6 852.6,623.4 853.0,630.1 853.5,568.7 854.0,514.4 854.5,544.8 854.9,574.9 855.4,604.7 855.9,634.2 856.3,624.4 856.8,564.1 857.3,504.4 857.7,528.0 858.2,557.8 858.7,587.2 859.2,616.4 859.6,623.7 860.1,569.7 860.6,516.2 861.0,525.9 861.5,552.5 862.0,578.8 862.4,604.9 862.9,609.5 863.4,547.4 863.9,485.9 864.3,484.4 864.8,515.8 865.3,547.0 865.7,577.8 866.2,584.6 866.7,532.3 867.1,480.6 867.6,468.3 868.1,494.9 868.5,521.3 869.0,547.5 869.5,573.4 870.0,540.5 870.4,515.5 870.9,504.0 871.4,516.6 871.8,529.0 872.3,541.4 872.8,553.7 873.2,538.1 873.7,487.7 874.2,454.3 874.7,481.0 875.1,507.4 875.6,533.6 876.1,559.6 876.5,544.4 877.0,511.5 877.5,482.7 877.9,500.2 878.4,517.6 878.9,534.9 879.4,552.0 879.8,575.6 880.3,532.9 880.8,490.7 881.2,509.1 881.7,532.1 882.2,554.8 882.6,577.4 883.1,557.6 883.6,524.3 884.1,491.4 884.5,499.0 885.0,517.4 885.5,535.7 885.9,553.8 886.4,559.0 886.9,532.3 887.3,505.9 887.8,506.5 888.3,521.7 888.8,536.8 889.2,551.8 889.7,560.2 890.2,537.2 890.6,514.4 891.1,509.9 891.6,523.6 892.0,537.2 892.5,550.6 893.0,564.0 893.5,559.5 893.9,535.2 894.4,525.0 894.9,539.6 895.3,554.1 895.8,568.5 896.3,582.7 896.7,556.1 897.2,537.0 897.7,524.7 898.1,536.8 898.6,548.9 899.1,560.9 899.6,572.8 900.0,565.0 900.5,553.2 901.0,542.9 901.4,551.3 901.9,559.5 902.4,567.7 902.8,575.9 903.3,603.6 903.8,569.5 904.3,535.7 904.7,552.2 905.2,572.3 905.7,592.3 906.1,612.0 906.6,613.9 907.1,581.7 907.5,549.8 908.0,558.1 908.5,577.3 909.0,596.2 909.4,615.0 909.9,634.6 910.4,597.8 910.8,561.4 911.3,562.4 911.8,583.9 912.2,605.1 912.7,626.2 913.2,624.7 913.7,597.8 914.1,571.1 914.6,566.0 915.1,582.2 915.5,598.3 916.0,614.1 916.5,629.8 916.9,608.7 917.4,586.7 917.9,577.5 918.4,591.0 918.8,604.4 919.3,617.6 919.8,630.7 920.2,628.2 920.7,601.5 921.2,584.1 921.6,599.8 922.1,615.4 922.6,630.7 923.1,645.9 923.5,624.6 924.0,614.7 924.5,606.1 924.9,612.5 925.4,618.9 925.9,625.1 926.3,631.3 926.8,647.6 927.3,624.2 927.7,600.9 928.2,611.7 928.7,624.9 929.2,637.9 929.6,650.8 930.1,646.3 930.6,629.2 931.0,612.2 931.5,616.1 932.0,625.6 932.4,635.0 932.9,644.3 933.4,642.2 933.9,631.7 934.3,621.2 934.8,621.2 935.3,626.8 935.7,632.4 936.2,637.8 936.7,642.6 937.1,631.6 937.6,620.7 938.1,618.1 938.6,623.7 939.0,629.1 939.5,634.5 940.0,639.7 940.4,634.8 940.9,617.1 941.4,609.0 941.8,617.8 942.3,626.6 942.8,635.2 943.3,643.7 943.7,626.6 944.2,614.9 944.7,607.0 945.1,612.3 945.6,617.5 946.1,622.7 946.5,627.7 947.0,624.6 947.5,608.9 948.0,595.0 948.4,602.2 948.9,609.3 949.4,616.3 949.8,623.2 950.3,624.3 950.8,606.1 951.2,588.0 951.7,594.4 952.2,602.6 952.7,610.7 953.1,618.7 953.6,617.2 954.1,603.4 954.5,589.8 955.0,591.3 955.5,597.0 955.9,602.5 956.4,608.0 956.9,606.3 957.3,597.7 957.8,589.2 958.3,588.0 958.8,590.7 959.2,593.4 959.7,596.1 960.2,601.3 960.6,586.5 961.1,571.9 961.6,567.7 962.0,573.7 962.5,579.6 963.0,585.5 963.5,591.3 963.9,585.6 964.4,575.8 964.9,570.7 965.3,574.1 965.8,577.4 966.3,580.8 966.7,584.0 967.2,573.3 967.7,563.8 968.2,557.1 968.6,560.4 969.1,563.7 969.6,566.9 970.0,570.1 970.5,569.2 971.0,560.6 971.4,553.0 971.9,555.9 972.4,558.7 972.9,561.6 973.3,564.4 973.8,564.7 974.3,553.9 974.7,543.2 975.2,546.4 975.7,550.6 976.1,554.9 976.6,559.0 977.1,552.7 977.6,546.7 978.0,540.8 978.5,541.1 979.0,543.0 979.4,545.0 979.9,546.9 980.4,561.3 980.8,547.4 981.3,533.6 981.8,532.9 982.3,539.3 982.7,545.6 983.2,552.0 983.7,554.4 984.1,537.0 984.6,519.8 985.1,515.6 985.5,524.2 986.0,532.8 986.5,541.3 986.9,549.8 987.4,542.2 987.9,533.2 988.4,529.0 988.8,533.5 989.3,538.0 989.8,542.5 990.2,547.0 990.7,540.1 991.2,527.4 991.6,519.0 992.1,525.8 992.6,532.6 993.1,539.4 993.5,546.2 994.0,544.2 994.5,529.5 994.9,516.7 995.4,524.9 995.9,533.1 996.3,541.3 996.8,549.4 997.3,539.1 997.8,535.8 998.2,532.5 998.7,534.6 999.2,537.1 999.6,539.6 1000.1,542.1 1000.6,546.5 1001.0,542.3 1001.5,538.2 1002.0,539.9 1002.5,543.1 1002.9,546.3 1003.4,549.6 1003.9,556.3 1004.3,545.1 1004.8,534.0 1005.3,534.8 1005.7,542.1 1006.2,549.3 1006.7,556.5 1007.2,561.7 1007.6,550.7 1008.1,539.9 1008.6,538.2 1009.0,545.6 1009.5,552.9 1010.0,560.2 1010.4,567.5 1010.9,562.0 1011.4,553.7 1011.9,550.6 1012.3,556.8 1012.8,562.9 1013.3,569.0 1013.7,575.0 1014.2,570.5 1014.7,567.3 1015.1,565.7 1015.6,569.1 1016.1,572.6 1016.5,576.1 1017.0,579.5 1017.5,578.2 1018.0,572.8 1018.4,568.2 1018.9,573.0 1019.4,577.7 1019.8,582.4 1020.3,587.0 1020.8,590.3 1021.2,580.9 1021.7,571.7 1022.2,577.4 1022.7,584.2 1023.1,591.0 1023.6,597.7 1024.1,603.9 1024.5,594.7 1025.0,585.5 1025.5,588.9 1025.9,595.5 1026.4,602.1 1026.9,608.6 1027.4,609.2 1027.8,600.9 1028.3,592.8 1028.8,593.8 1029.2,599.8 1029.7,605.7 1030.2,611.6 1030.6,612.0 1031.1,609.0 1031.6,606.0 1032.1,606.0 1032.5,609.1 1033.0,612.0 1033.5,615.0 1033.9,617.9 1034.4,618.5 1034.9,610.2 1035.3,607.0 1035.8,612.6 1036.3,618.1 1036.8,623.5 1037.2,628.9 1037.7,623.3 1038.2,618.9 1038.6,616.2 1039.1,619.4 1039.6,622.6 1040.0,625.7 1040.5,628.8 1041.0,626.6 1041.5,619.6 1041.9,613.4 1042.4,617.8 1042.9,622.0 1043.3,626.2 1043.8,630.4 1044.3,626.8 1044.7,624.1 1045.2,621.3 1045.7,622.7 1046.1,624.4 1046.6,626.0 1047.1,627.6 1047.6,632.3 1048.0,623.5 1048.5,614.9 1049.0,616.6 1049.4,621.2 1049.9,625.6 1050.4,629.9 1050.8,633.4 1051.3,627.3 1051.8,621.1 1052.3,620.8 1052.7,623.6 1053.2,626.3 1053.7,629.0 1054.1,630.0 1054.6,623.0 1055.1,616.1 1055.5,614.2 1056.0,617.1 1056.5,619.9 1057.0,622.7 1057.4,625.5 1057.9,619.8 1058.4,616.1 1058.8,614.1 1059.3,615.0 1059.8,615.8 1060.2,616.6 1060.7,617.4 1061.2,614.1 1061.7,607.9 1062.1,603.5 1062.6,605.5 1063.1,607.4 1063.5,609.3 1064.0,611.2 1064.5,611.7 1064.9,605.8 1065.4,600.4 1065.9,602.0 1066.4,603.6 1066.8,605.2 1067.3,606.7 1067.8,605.1 1068.2,599.2 1068.7,593.2 1069.2,594.2 1069.6,595.6 1070.1,597.0 1070.6,598.4 1071.1,594.8 1071.5,590.2 1072.0,585.6 1072.5,585.2 1072.9,585.8 1073.4,586.4 1073.9,587.0 1074.3,588.9 1074.8,582.5 1075.3,576.1 1075.7,574.8 1076.2,576.4 1076.7,578.0 1077.2,579.5 1077.6,577.9 1078.1,573.6 1078.6,569.3 1079.0,567.4 1079.5,567.9 1080.0,568.4 1080.4,568.9 1080.9,569.3 1081.4,566.4 1081.9,562.5 1082.3,560.2 1082.8,560.6 1083.3,560.9 1083.7,561.3 1084.2,561.7 1084.7,558.9 1085.1,555.8 1085.6,553.4 1086.1,553.5 1086.6,553.6 1087.0,553.7 1087.5,553.9 1088.0,554.9 1088.4,549.7 1088.9,544.9 1089.4,546.4 1089.8,547.9 1090.3,549.3 1090.8,550.8 1091.3,545.8 1091.7,543.4 1092.2,541.0 1092.7,541.0 1093.1,541.3 1093.6,541.5 1094.1,541.8 1094.5,542.2 1095.0,539.5 1095.5,536.9 1096.0,536.8 1096.4,537.5 1096.9,538.2 1097.4,538.8 1097.8,539.1 1098.3,537.4 1098.8,535.7 1099.2,535.4 1099.7,535.9 1100.2,536.4 1100.7,536.9 1101.1,540.3 1101.6,536.6 1102.1,532.9 1102.5,532.0 1103.0,533.9 1103.5,535.8 1103.9,537.7 1104.4,539.6 1104.9,536.4 1105.3,533.4 1105.8,532.2 1106.3,534.0 1106.8,535.9 1107.2,537.8 1107.7,539.7 1108.2,537.6 1108.6,534.9 1109.1,533.3 1109.6,535.3 1110.0,537.3 1110.5,539.4 1111.0,541.4 1111.5,540.0 1111.9,539.5 1112.4,539.1 1112.9,540.3 1113.3,541.5 1113.8,542.7 1114.3,544.0 1114.7,545.6 1115.2,543.9 1115.7,542.2 1116.2,544.1 1116.6,546.2 1117.1,548.3 1117.6,550.4 1118.0,551.8 1118.5,550.6 1119.0,549.5 1119.4,550.9 1119.9,552.9 1120.4,554.9 1120.9,557.0 1121.3,557.7 1121.8,557.6 1122.3,557.5 1122.7,558.5 1123.2,560.2 1123.7,561.9 1124.1,563.6 1124.6,565.0 1125.1,565.2 1125.6,565.5 1126.0,566.5 1126.5,568.1 1127.0,569.7 1127.4,571.3 1127.9,572.9 1128.4,575.5 1128.8,572.9 1129.3,572.4 1129.8,575.6 1130.3,578.8 1130.7,582.0 1131.2,585.1 1131.7,582.2 1132.1,582.2 1132.6,582.7 1133.1,584.5 1133.5,586.3 1134.0,588.1 1134.5,589.8 1134.9,590.6 1135.4,590.2 1135.9,589.9 1136.4,591.9 1136.8,593.9 1137.3,595.9 1137.8,597.9 1138.2,599.0 1138.7,598.7 1139.2,598.3 1139.6,600.0 1140.1,601.9 1140.6,603.7 1141.1,605.4 1141.5,606.9 1142.0,605.6 1142.5,604.4 1142.9,605.8 1143.4,608.0 1143.9,610.1 1144.3,612.2 1144.8,612.9 1145.3,612.9 1145.8,612.9 1146.2,613.7 1146.7,614.9 1147.2,616.2 1147.6,617.4 1148.1,619.5 1148.6,618.4 1149.0,617.3 1149.5,617.6 1150.0,619.1 1150.5,620.7 1150.9,622.2 1151.4,623.6 1151.9,622.4 1152.3,621.4 1152.8,621.2 1153.3,622.4 1153.7,623.6 1154.2,624.7 1154.7,625.8 1155.2,626.4 1155.6,624.2 1156.1,622.8 1156.6,624.3 1157.0,625.8 1157.5,627.2 1158.0,628.6 1158.4,626.4 1158.9,625.9 1159.4,625.3 1159.8,625.6 1160.3,625.9 1160.8,626.1 1161.3,626.3 1161.7,626.3 1162.2,624.9 1162.7,623.5 1163.1,623.8 1163.6,624.2 1164.1,624.5 1164.5,624.8 1165.0,625.5 1165.5,623.5 1166.0,621.6 1166.4,621.5 1166.9,621.8 1167.4,622.1 1167.8,622.3 1168.3,622.0 1168.8,619.0 1169.2,616.0 1169.7,615.3 1170.2,615.9 1170.7,616.5 1171.1,617.0 1171.6,617.4 1172.1,615.1 1172.5,612.8 1173.0,611.7 1173.5,611.6 1173.9,611.5 1174.4,611.4 1174.9,611.3 1175.4,608.6 1175.8,606.3 1176.3,604.8 1176.8,604.5 1177.2,604.2 1177.7,603.9 1178.2,603.6 1178.6,602.8 1179.1,600.1 1179.6,597.9 1180.1,597.7 1180.5,597.5 1181.0,597.2 1181.5,596.9 1181.9,594.2 1182.4,592.1 1182.9,590.1 1183.3,589.5 1183.8,588.8 1184.3,588.1 1184.8,587.5 1185.2,586.1 1185.7,584.4 1186.2,582.7 1186.6,581.7 1187.1,580.8 1187.6,579.8 1188.0,578.9 1188.5,578.2 1189.0,575.8 1189.4,573.4 1189.9,572.5 1190.4,571.9 1190.9,571.4 1191.3,570.8 1191.8,571.5 1192.3,568.6 1192.7,565.7 1193.2,564.5 1193.7,564.3 1194.1,564.2 1194.6,564.0 1195.1,563.0 1195.6,560.4 1196.0,557.9 1196.5,556.5 1197.0,556.3 1197.4,556.0 1197.9,555.8 1198.4,555.6 1198.8,553.2 1199.3,551.5 1199.8,550.3 1200.3,549.8 1200.7,549.3 1201.2,548.8 1201.7,548.4 1202.1,547.8 1202.6,545.7 1203.1,544.1 1203.5,544.0 1204.0,544.0 1204.5,544.0 1205.0,544.0 1205.4,543.0 1205.9,540.9 1206.4,539.1 1206.8,539.3 1207.3,539.5 1207.8,539.8 1208.2,540.1 1208.7,538.6 1209.2,537.5 1209.7,536.4 1210.1,536.4 1210.6,536.4 1211.1,536.4 1211.5,536.5 1212.0,536.9 1212.5,535.7 1212.9,534.5 1213.4,534.5 1213.9,535.0 1214.4,535.5 1214.8,536.0 1215.3,535.5 1215.8,534.8 1216.2,534.1 1216.7,534.2 1217.2,534.7 1217.6,535.3 1218.1,535.8 1218.6,536.3 1219.0,536.0 1219.5,535.7 1220.0,535.8 1220.5,536.5 1220.9,537.1 1221.4,537.8 1221.9,538.6 1222.3,538.7 1222.8,538.6 1223.3,538.9 1223.7,539.7 1224.2,540.6 1224.7,541.5 1225.2,542.5 1225.6,542.8 1226.1,542.9 1226.6,543.3 1227.0,544.3 1227.5,545.3 1228.0,546.4 1228.4,547.4 1228.9,548.0 1229.4,548.3 1229.9,548.6 1230.3,549.8 1230.8,551.1 1231.3,552.3 1231.7,553.6 1232.2,554.4 1232.7,555.0 1233.1,555.7 1233.6,556.9 1234.1,558.1 1234.6,559.3 1235.0,560.5 1235.5,561.8 1236.0,562.3 1236.4,562.8 1236.9,564.0 1237.4,565.5 1237.8,567.0 1238.3,568.4 1238.8,569.5 1239.3,570.4 1239.7,571.2 1240.2,572.4 1240.7,573.7 1241.1,575.1 1241.6,576.5 1242.1,578.7 1242.5,579.0 1243.0,579.3 1243.5,580.2 1244.0,581.9 1244.4,583.6 1244.9,585.3 1245.4,586.9 1245.8,587.7 1246.3,588.1 1246.8,589.0 1247.2,590.5 1247.7,592.1 1248.2,593.6 1248.6,595.2 1249.1,595.4 1249.6,596.3 1250.1,597.3 1250.5,598.5 1251.0,599.7 1251.5,600.9 1251.9,602.1 1252.4,603.4 1252.9,603.6 1253.3,603.9 1253.8,605.4 1254.3,606.8 1254.8,608.2 1255.2,609.5 1255.7,610.1 1256.2,610.7 1256.6,611.2 1257.1,612.2 1257.6,613.2 1258.0,614.2 1258.5,615.2 1259.0,616.1 1259.5,616.3 1259.9,616.5 1260.4,617.3 1260.9,618.3 1261.3,619.2 1261.8,620.1 1262.3,620.9 1262.7,620.9 1263.2,620.8 1263.7,621.3 1264.2,622.1 1264.6,622.8 1265.1,623.6 1265.6,624.1 1266.0,624.0 1266.5,623.9 1267.0,624.1 1267.4,624.6 1267.9,625.0 1268.4,625.5 1268.9,625.9 1269.3,625.6 1269.8,625.4 1270.3,625.3 1270.7,625.5 1271.2,625.7 1271.7,625.9 1272.1,626.1 1272.6,626.0 1273.1,625.5 1273.6,625.0 1274.0,625.1 1274.5,625.1 1275.0,625.1 1275.4,625.1 1275.9,624.3 1276.4,623.8 1276.8,623.2 1277.3,622.9 1277.8,622.6 1278.2,622.3 1278.7,622.0 1279.2,622.0 1279.7,620.8 1280.1,619.5 1280.6,619.2 1281.1,619.0 1281.5,618.7 1282.0,618.3 1282.5,617.2 1282.9,616.2 1283.4,615.3 1283.9,614.5 1284.4,613.8 1284.8,613.1 1285.3,612.4 1285.8,612.1 1286.2,610.6 1286.7,609.1 1287.2,608.2 1287.6,607.6 1288.1,606.9 1288.6,606.3 1289.1,605.2 1289.5,603.9 1290.0,602.6 1290.5,601.5 1290.9,600.5 1291.4,599.6 1291.9,598.6 1292.3,597.7 1292.8,596.4 1293.3,594.9 1293.8,593.7 1294.2,592.7 1294.7,591.7 1295.2,590.7 1295.6,589.6 1296.1,588.3 1296.6,586.8 1297.0,585.4 1297.5,584.4 1298.0,583.4 1298.5,582.3 1298.9,581.3 1299.4,579.8 1299.9,578.5 1300.3,577.1 1300.8,576.0 1301.3,574.9 1301.7,573.8 1302.2,572.7 1302.7,571.5 1303.2,570.1 1303.6,568.8 1304.1,567.7 1304.6,566.7 1305.0,565.6 1305.5,564.6 1306.0,563.6 1306.4,562.2 1306.9,560.8 1307.4,559.8 1307.8,558.9 1308.3,558.0 1308.8,557.1 1309.3,556.2 1309.7,554.8 1310.2,553.6 1310.7,552.6 1311.1,551.8 1311.6,551.0 1312.1,550.3 1312.5,549.7 1313.0,548.4 1313.5,547.1 1314.0,546.1 1314.4,545.6 1314.9,545.1 1315.4,544.6 1315.8,544.1 1316.3,543.2 1316.8,542.0 1317.2,541.1 1317.7,540.8 1318.2,540.4 1318.7,540.2 1319.1,539.9 1319.6,539.0 1320.1,538.4 1320.5,537.8 1321.0,537.5 1321.5,537.2 1321.9,536.9 1322.4,536.6 1322.9,536.5 1323.4,536.0 1323.8,535.5 1324.3,535.4 1324.8,535.4 1325.2,535.4 1325.7,535.5 1326.2,535.2 1326.6,535.0 1327.1,534.8 1327.6,534.9 1328.1,535.0 1328.5,535.2 1329.0,535.4 1329.5,535.7 1329.9,535.5 1330.4,535.3 1330.9,535.6 1331.3,536.1 1331.8,536.6 1332.3,537.1 1332.8,537.4 1333.2,537.6 1333.7,537.9 1334.2,538.3 1334.6,538.9 1335.1,539.5 1335.6,540.1 1336.0,541.0 1336.5,541.2 1337.0,541.5 1337.4,542.0 1337.9,542.9 1338.4,543.8 1338.9,544.7 1339.3,545.7 1339.8,546.1 1340.3,546.6 1340.7,547.3 1341.2,548.3 1341.7,549.3 1342.1,550.3 1342.6,551.4 1343.1,552.2 1343.6,553.0 1344.0,553.9 1344.5,555.0 1345.0,556.0 1345.4,557.1 1345.9,558.2 1346.4,559.2 1346.8,560.2 1347.3,561.2 1347.8,562.3 1348.3,563.5 1348.7,564.6 1349.2,565.8 1349.7,567.0 1350.1,568.0 1350.6,569.0 1351.1,570.3 1351.5,571.5 1352.0,572.8 1352.5,574.0 1353.0,575.3 1353.4,576.2 1353.9,577.0 1354.4,578.3 1354.8,579.7 1355.3,581.0 1355.8,582.4 1356.2,583.5 1356.7,584.6 1357.2,585.7 1357.7,586.9 1358.1,588.1 1358.6,589.3 1359.1,590.6 1359.5,591.9 1360.0,592.9 1360.5,593.8 1360.9,594.9 1361.4,596.2 1361.9,597.4 1362.4,598.6 1362.8,599.8 1363.3,600.7 1363.8,601.6 1364.2,602.6 1364.7,603.7 1365.2,604.8 1365.6,605.9 1366.1,607.0 1366.6,607.9 1367.0,608.7 1367.5,609.6 1368.0,610.5 1368.5,611.5 1368.9,612.4 1369.4,613.4 1369.9,614.1 1370.3,614.7 1370.8,615.3 1371.3,616.1 1371.7,617.0 1372.2,617.8 1372.7,618.6 1373.2,619.1 1373.6,619.6 1374.1,620.1 1374.6,620.7 1375.0,621.3 1375.5,621.9 1376.0,622.4 1376.4,623.0 1376.9,623.2 1377.4,623.4 1377.9,623.8 1378.3,624.3 1378.8,624.7 1379.3,625.0 1379.7,625.3 1380.2,625.3 1380.7,625.3 1381.1,625.4 1381.6,625.6 1382.1,625.8 1382.6,625.9 1383.0,626.1 1383.5,625.9 1384.0,625.6 1384.4,625.4 1384.9,625.5 1385.4,625.4 1385.8,625.4 1386.3,625.3 1386.8,624.9 1387.3,624.5 1387.7,624.1 1388.2,623.9 1388.7,623.6 1389.1,623.3 1389.6,622.9 1390.1,622.5 1390.5,621.8 1391.0,621.1 1391.5,620.7 1392.0,620.3 1392.4,619.8 1392.9,619.3 1393.4,618.5 1393.8,617.7 1394.3,616.9 1394.8,616.2 1395.2,615.6 1395.7,614.9 1396.2,614.1 1396.6,613.3 1397.1,612.3 1397.6,611.3 1398.1,610.4 1398.5,609.6 1399.0,608.8 1399.5,607.9 1399.9,606.9 1400.4,605.8 1400.9,604.6 1401.3,603.7 1401.8,602.7 1402.3,601.7 1402.8,600.7 1403.2,599.8 1403.7,598.5 1404.2,597.2 1404.6,596.1 1405.1,595.1 1405.6,594.0 1406.0,593.0 1406.5,591.9 1407.0,590.6 1407.5,589.2 1407.9,588.0 1408.4,586.9 1408.9,585.8 1409.3,584.7 1409.8,583.6 1410.3,582.3 1410.7,581.0 1411.2,579.8 1411.7,578.6 1412.2,577.5 1412.6,576.3 1413.1,575.1 1413.6,573.9 1414.0,572.6 1414.5,571.4 1415.0,570.3 1415.4,569.1 1415.9,568.0 1416.4,566.9 1416.9,565.8 1417.3,564.6 1417.8,563.3 1418.3,562.3 1418.7,561.3 1419.2,560.2 1419.7,559.2 1420.1,558.1 1420.6,557.0 1421.1,555.8 1421.6,554.9 1422.0,553.9 1422.5,553.1 1423.0,552.2 1423.4,551.3 1423.9,550.3 1424.4,549.3 1424.8,548.4 1425.3,547.6 1425.8,546.9 1426.2,546.1 1426.7,545.3 1427.2,544.5 1427.7,543.7 1428.1,543.0 1428.6,542.4 1429.1,541.8 1429.5,541.2 1430.0,540.8 1430.5,540.1 1430.9,539.4 1431.4,538.9 1431.9,538.5 1432.4,538.1 1432.8,537.7 1433.3,537.4 1433.8,536.9 1434.2,536.5 1434.7,536.2 1435.2,536.0 1435.6,535.8 1436.1,535.6 1436.6,535.5 1437.1,535.3 1437.5,535.1 1438.0,535.0 1438.5,535.0 1438.9,535.0 1439.4,535.0 1439.9,535.1 1440.3,535.1 1440.8,535.2 1441.3,535.3 1441.8,535.5 1442.2,535.7 1442.7,536.0 1443.2,536.2 1443.6,536.6 1444.1,536.8 1444.6,537.2 1445.0,537.6 1445.5,538.0 1446.0,538.5 1446.5,539.0 1446.9,539.6 1447.4,540.0 1447.9,540.4 1448.3,541.1 1448.8,541.7 1449.3,542.4 1449.7,543.1 1450.2,543.8 1450.7,544.5 1451.2,545.2 1451.6,546.0 1452.1,546.8 1452.6,547.6 1453.0,548.5 1453.5,549.4 1454.0,550.2 1454.4,551.0 1454.9,551.9 1455.4,552.9 1455.8,553.9 1456.3,555.0 1456.8,556.0 1457.3,556.9 1457.7,557.9 1458.2,558.9 1458.7,560.0 1459.1,561.1 1459.6,562.3 1460.1,563.4 1460.5,564.5 1461.0,565.5 1461.5,566.6 1462.0,567.8 1462.4,569.0 1462.9,570.2 1463.4,571.5 1463.8,572.6 1464.3,573.7 1464.8,574.8 1465.2,576.1" fill="none" stroke="#00ffff" stroke-width="1.1" stroke-linejoin="round" shape-rendering="crispEdges"/><polyline points="725.2,875.3 725.7,875.3 726.2,875.0 726.7,874.5 727.1,873.9 727.6,873.0 728.1,871.9 728.5,870.6 729.0,869.2 729.5,867.5 729.9,865.6 730.4,863.5 730.9,861.2 731.4,858.8 731.8,856.1 732.3,853.2 732.8,850.2 733.2,846.9 733.7,843.5 734.2,839.9 734.6,836.1 735.1,832.2 735.6,828.0 736.1,823.7 736.5,819.2 737.0,814.6 737.5,809.8 737.9,804.8 738.4,799.7 738.9,794.4 739.3,788.9 739.8,783.4 740.3,777.6 740.8,771.8 741.2,765.8 741.7,759.7 742.2,753.5 742.6,747.1 743.1,740.6 743.6,734.0 744.0,727.3 744.5,720.5 745.0,713.6 745.5,706.6 745.9,699.6 746.4,692.4 746.9,685.2 747.3,677.9 747.8,670.5 748.3,663.0 748.7,655.5 749.2,648.0 749.7,640.4 750.1,632.7 750.6,625.1 751.1,617.4 751.6,609.6 752.0,601.9 752.5,594.1 753.0,586.3 753.4,578.5 753.9,570.8 754.4,563.0 754.8,555.2 755.3,547.5 755.8,539.8 756.3,532.1 756.7,524.4 757.2,516.8 757.7,509.2 758.1,501.7 758.6,494.2 759.1,486.8 759.5,479.5 760.0,472.2 760.5,465.0 761.0,457.9 761.4,450.8 761.9,443.9 762.4,437.0 762.8,430.3 763.3,423.6 763.8,417.1 764.2,410.7 764.7,404.4 765.2,398.2 765.7,392.1 766.1,386.2 766.6,380.4 767.1,374.8 767.5,369.3 768.0,363.9 768.5,358.7 768.9,353.6 769.4,348.7 769.9,344.0 770.4,339.4 770.8,335.0 771.3,330.8 771.8,326.7 772.2,322.9 772.7,319.2 773.2,315.6 773.6,312.3 774.1,309.1 774.6,306.2 775.1,303.4 775.5,300.8 776.0,298.5 776.5,296.3 776.9,294.3 777.4,292.5 777.9,290.9 778.3,289.5 778.8,288.3 779.3,287.4 779.7,286.6 780.2,286.0 780.7,285.6 781.2,285.5 781.6,285.5 782.1,285.8 782.3,580.4 1462.5,580.4" fill="none" stroke="#0000ff" stroke-width="1.3"/><polyline points="725.2,875.3 725.7,875.3 726.2,875.0 726.7,874.5 727.1,873.9 727.6,873.0 728.1,871.9 728.5,870.6 729.0,869.2 729.5,867.5 729.9,865.6 730.4,863.5 730.9,861.2 731.4,858.8 731.8,856.1 732.3,853.2 732.8,850.2 733.2,846.9 733.7,843.5 734.2,839.9 734.6,836.1 735.1,832.2 735.6,828.0 736.1,823.7 736.5,819.2 737.0,814.6 737.5,809.8 737.9,804.8 738.4,799.7 738.9,794.4 739.3,788.9 739.8,783.4 740.3,777.6 740.8,771.8 741.2,765.8 741.7,759.7 742.2,753.5 742.6,747.1 743.1,740.6 743.6,734.0 744.0,727.3 744.5,720.5 745.0,713.6 745.5,706.6 745.9,699.6 746.4,692.4 746.9,685.2 747.3,677.9 747.8,670.5 748.3,663.0 748.7,655.5 749.2,648.0 749.7,640.4 750.1,632.7 750.6,625.1 751.1,617.4 751.6,609.6 752.0,601.9 752.5,594.1 753.0,586.3 753.4,578.5 753.9,570.8 754.4,563.0 754.8,555.2 755.3,547.5 755.8,539.8 756.3,532.1 756.7,524.4 757.2,516.8 757.7,509.2 758.1,501.7 758.6,494.2 759.1,486.8 759.5,479.5 760.0,472.2 760.5,465.0 761.0,457.9 761.4,450.8 761.9,443.9 762.4,437.0 762.8,430.3 763.3,423.6 763.8,417.1 764.2,410.7 764.7,404.4 765.2,398.2 765.7,392.1 766.1,386.2 766.6,380.4 767.1,374.8 767.5,369.3 768.0,363.9 768.5,358.7 768.9,353.6 769.4,348.7 769.9,344.0 770.4,339.4 770.8,335.0 771.3,330.8 771.8,326.7 772.2,322.9 772.7,319.2 773.2,315.6 773.6,312.3 774.1,309.1 774.6,306.2 775.1,303.4 775.5,300.8 776.0,298.5 776.5,296.3 776.9,294.3 777.4,292.5 777.9,290.9 778.3,289.5 778.8,288.3 779.3,287.4 779.7,286.6 780.2,286.0 780.7,285.6 781.2,285.5 781.6,285.5 782.1,285.8 782.6,318.1 783.0,314.7 783.5,311.6 784.0,312.5 784.4,316.5 784.9,320.6 785.4,324.8 785.9,329.2 786.3,333.7 786.8,331.5 787.3,331.1 787.7,330.9 788.2,335.5 788.7,340.3 789.1,345.2 789.6,350.2 790.1,355.4 790.6,363.2 791.0,362.0 791.5,360.9 792.0,363.5 792.4,370.5 792.9,377.7 793.4,385.0 793.8,392.4 794.3,399.9 794.8,399.2 795.3,401.2 795.7,403.5 796.2,409.8 796.7,417.0 797.1,424.2 797.6,431.5 798.1,438.8 798.5,444.1 799.0,447.8 799.5,451.6 800.0,456.5 800.4,463.9 800.9,471.5 801.4,479.1 801.8,486.7 802.3,494.4 802.8,503.0 803.2,505.3 803.7,507.7 804.2,514.8 804.7,523.9 805.1,532.9 805.6,542.0 806.1,551.0 806.5,563.9 807.0,563.5 807.5,563.3 807.9,564.6 808.4,575.4 808.9,586.0 809.3,596.6 809.8,607.2 810.3,617.6 810.8,619.9 811.2,620.6 811.7,621.3 812.2,627.3 812.6,637.3 813.1,647.1 813.6,656.9 814.0,666.5 814.5,675.6 815.0,676.4 815.5,677.2 815.9,678.0 816.4,687.2 816.9,696.2 817.3,705.1 817.8,713.9 818.3,722.6 818.7,725.1 819.2,728.2 819.7,731.2 820.2,735.8 820.6,742.5 821.1,749.0 821.6,755.3 822.0,761.6 822.5,767.6 823.0,770.3 823.4,771.0 823.9,771.7 824.4,777.2 824.9,783.4 825.3,789.4 825.8,795.2 826.3,800.9 826.7,803.9 827.2,804.8 827.7,805.6 828.1,807.4 828.6,811.6 829.1,815.6 829.6,819.5 830.0,823.2 830.5,826.7 831.0,826.9 831.4,826.9 831.9,826.8 832.4,828.6 832.8,831.0 833.3,833.2 833.8,835.2 834.3,837.0 834.7,837.7 835.2,836.7 835.7,835.6 836.1,834.6 836.6,835.3 837.1,835.9 837.5,836.3 838.0,836.6 838.5,836.6 838.9,836.3 839.4,833.4 839.9,830.3 840.4,828.6 840.8,828.0 841.3,827.2 841.8,826.2 842.2,825.0 842.7,825.4 843.2,818.7 843.6,811.9 844.1,805.0 844.6,804.3 845.1,803.5 845.5,802.5 846.0,801.2 846.5,799.8 846.9,795.2 847.4,787.7 847.9,780.1 848.3,774.8 848.8,772.5 849.3,770.0 849.8,767.3 850.2,764.6 850.7,761.6 851.2,755.4 851.6,747.0 852.1,738.5 852.6,734.3 853.0,730.7 853.5,727.0 854.0,723.2 854.5,719.2 854.9,713.7 855.4,704.7 855.9,695.6 856.3,687.9 856.8,683.5 857.3,679.0 857.7,674.4 858.2,669.7 858.7,665.0 859.2,655.7 859.6,648.0 860.1,640.2 860.6,633.8 861.0,627.9 861.5,621.9 862.0,616.0 862.4,610.0 862.9,603.4 863.4,595.2 863.9,587.0 864.3,579.1 864.8,573.2 865.3,567.3 865.7,561.4 866.2,555.5 866.7,549.7 867.1,544.0 867.6,535.2 868.1,526.5 868.5,519.7 869.0,514.4 869.5,509.1 870.0,503.9 870.4,498.6 870.9,493.5 871.4,485.3 871.8,476.8 872.3,468.5 872.8,463.7 873.2,459.0 873.7,454.4 874.2,449.9 874.7,445.4 875.1,440.4 875.6,432.5 876.1,424.7 876.5,418.7 877.0,414.9 877.5,411.1 877.9,407.5 878.4,404.0 878.9,400.6 879.4,393.4 879.8,386.6 880.3,380.1 880.8,376.7 881.2,374.0 881.7,371.4 882.2,369.0 882.6,366.7 883.1,361.6 883.6,357.7 884.1,353.9 884.5,350.6 885.0,348.3 885.5,346.0 885.9,344.0 886.4,342.1 886.9,340.3 887.3,339.5 887.8,336.2 888.3,333.0 888.8,331.8 889.2,331.4 889.7,331.1 890.2,331.1 890.6,331.2 891.1,330.9 891.6,328.9 892.0,327.1 892.5,325.8 893.0,326.8 893.5,328.0 893.9,329.4 894.4,330.9 894.9,332.5 895.3,332.9 895.8,332.8 896.3,332.9 896.7,334.3 897.2,336.7 897.7,339.3 898.1,342.0 898.6,344.8 899.1,346.7 899.6,348.6 900.0,350.6 900.5,352.8 901.0,356.2 901.4,359.7 901.9,363.4 902.4,367.3 902.8,371.2 903.3,375.6 903.8,378.5 904.3,381.5 904.7,385.3 905.2,390.2 905.7,395.2 906.1,400.4 906.6,405.6 907.1,411.0 907.5,414.6 908.0,419.2 908.5,423.9 909.0,429.3 909.4,435.0 909.9,440.7 910.4,446.6 910.8,452.5 911.3,459.5 911.8,463.8 912.2,468.3 912.7,473.4 913.2,480.3 913.7,487.3 914.1,494.3 914.6,501.4 915.1,508.5 915.5,514.7 916.0,519.8 916.5,524.9 916.9,531.6 917.4,538.8 917.9,546.1 918.4,553.4 918.8,560.7 919.3,567.1 919.8,572.8 920.2,578.5 920.7,584.4 921.2,591.6 921.6,598.7 922.1,605.8 922.6,612.9 923.1,619.9 923.5,625.5 924.0,631.4 924.5,637.3 924.9,643.6 925.4,650.4 925.9,657.0 926.3,663.6 926.8,670.2 927.3,676.7 927.7,682.8 928.2,687.6 928.7,692.4 929.2,698.9 929.6,705.3 930.1,711.7 930.6,717.9 931.0,724.0 931.5,729.1 932.0,733.6 932.4,738.0 932.9,742.8 933.4,748.2 933.9,753.5 934.3,758.7 934.8,763.7 935.3,768.6 935.7,772.2 936.2,775.4 936.7,778.5 937.1,782.8 937.6,787.1 938.1,791.3 938.6,795.4 939.0,799.3 939.5,802.3 940.0,804.4 940.4,806.4 940.9,808.7 941.4,811.8 941.8,814.7 942.3,817.4 942.8,820.0 943.3,822.4 943.7,823.9 944.2,824.8 944.7,825.7 945.1,827.0 945.6,828.4 946.1,829.6 946.5,830.7 947.0,831.5 947.5,831.8 948.0,831.5 948.4,831.0 948.9,830.5 949.4,830.5 949.8,830.2 950.3,829.8 950.8,829.3 951.2,828.5 951.7,827.4 952.2,825.4 952.7,823.3 953.1,821.6 953.6,820.0 954.1,818.3 954.5,816.4 955.0,814.4 955.5,811.9 955.9,808.8 956.4,805.5 956.9,802.1 957.3,799.2 957.8,796.1 958.3,792.9 958.8,789.5 959.2,786.0 959.7,782.1 960.2,777.8 960.6,773.3 961.1,768.9 961.6,764.7 962.0,760.2 962.5,755.7 963.0,751.0 963.5,746.2 963.9,741.1 964.4,735.7 964.9,730.1 965.3,724.8 965.8,719.5 966.3,714.1 966.7,708.7 967.2,703.1 967.7,697.6 968.2,691.1 968.6,684.6 969.1,678.2 969.6,672.4 970.0,666.5 970.5,660.5 971.0,654.5 971.4,648.5 971.9,641.4 972.4,634.8 972.9,628.1 973.3,621.7 973.8,615.2 974.3,608.7 974.7,602.2 975.2,595.7 975.7,589.1 976.1,582.4 976.6,575.6 977.1,568.9 977.6,562.3 978.0,555.8 978.5,549.3 979.0,542.8 979.4,536.4 979.9,529.9 980.4,523.0 980.8,516.2 981.3,509.8 981.8,503.7 982.3,497.6 982.7,491.6 983.2,485.7 983.7,479.8 984.1,473.6 984.6,467.4 985.1,461.3 985.5,455.6 986.0,450.0 986.5,444.6 986.9,439.2 987.4,433.9 987.9,428.5 988.4,422.9 988.8,417.5 989.3,412.4 989.8,407.8 990.2,403.2 990.7,398.7 991.2,394.4 991.6,390.2 992.1,385.8 992.6,381.4 993.1,377.2 993.5,373.5 994.0,370.0 994.5,366.6 994.9,363.4 995.4,360.3 995.9,357.1 996.3,353.9 996.8,351.0 997.3,348.2 997.8,345.9 998.2,343.8 998.7,341.8 999.2,339.9 999.6,338.3 1000.1,336.7 1000.6,334.9 1001.0,333.2 1001.5,332.1 1002.0,331.4 1002.5,330.9 1002.9,330.6 1003.4,330.4 1003.9,330.1 1004.3,329.9 1004.8,329.8 1005.3,330.0 1005.7,330.6 1006.2,331.3 1006.7,332.2 1007.2,333.3 1007.6,334.5 1008.1,335.7 1008.6,337.0 1009.0,338.5 1009.5,340.3 1010.0,342.4 1010.4,344.7 1010.9,347.2 1011.4,349.8 1011.9,352.5 1012.3,355.2 1012.8,358.1 1013.3,361.1 1013.7,364.4 1014.2,367.9 1014.7,371.6 1015.1,375.4 1015.6,379.3 1016.1,383.5 1016.5,387.4 1017.0,391.4 1017.5,395.8 1018.0,400.4 1018.4,405.2 1018.9,410.2 1019.4,415.2 1019.8,420.3 1020.3,425.2 1020.8,430.3 1021.2,435.5 1021.7,441.0 1022.2,446.6 1022.7,452.3 1023.1,458.1 1023.6,464.0 1024.1,469.9 1024.5,475.7 1025.0,481.6 1025.5,487.6 1025.9,493.9 1026.4,500.2 1026.9,506.6 1027.4,513.0 1027.8,519.5 1028.3,526.0 1028.8,532.2 1029.2,538.5 1029.7,545.1 1030.2,551.7 1030.6,558.4 1031.1,565.2 1031.6,571.9 1032.1,578.4 1032.5,584.9 1033.0,591.3 1033.5,597.9 1033.9,604.5 1034.4,611.1 1034.9,617.8 1035.3,624.3 1035.8,630.9 1036.3,637.4 1036.8,643.7 1037.2,649.9 1037.7,656.2 1038.2,662.5 1038.6,668.8 1039.1,675.1 1039.6,681.3 1040.0,687.5 1040.5,693.2 1041.0,698.9 1041.5,704.4 1041.9,710.2 1042.4,716.0 1042.9,721.6 1043.3,727.1 1043.8,732.5 1044.3,737.5 1044.7,742.5 1045.2,747.4 1045.7,752.2 1046.1,757.0 1046.6,761.7 1047.1,766.2 1047.6,770.6 1048.0,774.9 1048.5,778.9 1049.0,782.8 1049.4,786.6 1049.9,790.3 1050.4,793.9 1050.8,797.3 1051.3,800.5 1051.8,803.6 1052.3,806.6 1052.7,809.3 1053.2,811.8 1053.7,814.2 1054.1,816.5 1054.6,818.7 1055.1,820.7 1055.5,822.5 1056.0,824.1 1056.5,825.6 1057.0,826.8 1057.4,827.7 1057.9,828.7 1058.4,829.5 1058.8,830.2 1059.3,830.7 1059.8,831.0 1060.2,831.0 1060.7,830.8 1061.2,830.4 1061.7,829.8 1062.1,829.2 1062.6,828.5 1063.1,827.6 1063.5,826.5 1064.0,825.2 1064.5,823.6 1064.9,821.9 1065.4,820.0 1065.9,818.0 1066.4,815.9 1066.8,813.6 1067.3,811.1 1067.8,808.5 1068.2,805.8 1068.7,802.8 1069.2,799.6 1069.6,796.2 1070.1,792.8 1070.6,789.3 1071.1,785.6 1071.5,781.8 1072.0,777.8 1072.5,773.6 1072.9,769.3 1073.4,764.8 1073.9,760.3 1074.3,755.7 1074.8,750.9 1075.3,746.0 1075.7,741.0 1076.2,735.9 1076.7,730.7 1077.2,725.3 1077.6,719.8 1078.1,714.2 1078.6,708.7 1079.0,703.0 1079.5,697.2 1080.0,691.4 1080.4,685.4 1080.9,679.3 1081.4,673.2 1081.9,667.0 1082.3,660.8 1082.8,654.5 1083.3,648.2 1083.7,641.8 1084.2,635.4 1084.7,628.9 1085.1,622.3 1085.6,615.7 1086.1,609.1 1086.6,602.6 1087.0,596.1 1087.5,589.5 1088.0,583.0 1088.4,576.5 1088.9,569.8 1089.4,563.1 1089.8,556.4 1090.3,549.9 1090.8,543.4 1091.3,536.9 1091.7,530.5 1092.2,524.1 1092.7,517.6 1093.1,511.1 1093.6,504.7 1094.1,498.4 1094.5,492.2 1095.0,486.1 1095.5,480.1 1096.0,474.1 1096.4,468.3 1096.9,462.3 1097.4,456.5 1097.8,450.7 1098.3,445.1 1098.8,439.6 1099.2,434.3 1099.7,429.0 1100.2,423.8 1100.7,418.7 1101.1,413.6 1101.6,408.7 1102.1,403.9 1102.5,399.3 1103.0,394.8 1103.5,390.5 1103.9,386.3 1104.4,382.3 1104.9,378.2 1105.3,374.3 1105.8,370.6 1106.3,367.1 1106.8,363.7 1107.2,360.5 1107.7,357.4 1108.2,354.5 1108.6,351.8 1109.1,349.1 1109.6,346.6 1110.0,344.3 1110.5,342.2 1111.0,340.3 1111.5,338.5 1111.9,336.9 1112.4,335.5 1112.9,334.2 1113.3,333.0 1113.8,332.0 1114.3,331.3 1114.7,330.7 1115.2,330.3 1115.7,330.1 1116.2,330.1 1116.6,330.2 1117.1,330.4 1117.6,330.8 1118.0,331.4 1118.5,332.2 1119.0,333.2 1119.4,334.4 1119.9,335.7 1120.4,337.2 1120.9,338.9 1121.3,340.7 1121.8,342.6 1122.3,344.8 1122.7,347.1 1123.2,349.6 1123.7,352.3 1124.1,355.1 1124.6,358.1 1125.1,361.2 1125.6,364.4 1126.0,367.7 1126.5,371.3 1127.0,375.1 1127.4,379.0 1127.9,383.0 1128.4,387.1 1128.8,391.4 1129.3,395.7 1129.8,400.2 1130.3,404.9 1130.7,409.7 1131.2,414.6 1131.7,419.6 1132.1,424.8 1132.6,430.0 1133.1,435.3 1133.5,440.7 1134.0,446.2 1134.5,451.8 1134.9,457.5 1135.4,463.4 1135.9,469.3 1136.4,475.3 1136.8,481.3 1137.3,487.4 1137.8,493.5 1138.2,499.7 1138.7,506.0 1139.2,512.4 1139.6,518.8 1140.1,525.2 1140.6,531.7 1141.1,538.1 1141.5,544.6 1142.0,551.2 1142.5,557.8 1142.9,564.4 1143.4,571.0 1143.9,577.6 1144.3,584.2 1144.8,590.8 1145.3,597.4 1145.8,603.9 1146.2,610.5 1146.7,617.1 1147.2,623.6 1147.6,630.1 1148.1,636.6 1148.6,643.0 1149.0,649.4 1149.5,655.7 1150.0,661.9 1150.5,668.1 1150.9,674.3 1151.4,680.4 1151.9,686.4 1152.3,692.4 1152.8,698.3 1153.3,704.0 1153.7,709.7 1154.2,715.3 1154.7,720.8 1155.2,726.3 1155.6,731.6 1156.1,736.8 1156.6,742.0 1157.0,747.0 1157.5,751.8 1158.0,756.5 1158.4,761.2 1158.9,765.7 1159.4,770.1 1159.8,774.3 1160.3,778.5 1160.8,782.5 1161.3,786.3 1161.7,789.9 1162.2,793.5 1162.7,796.9 1163.1,800.1 1163.6,803.2 1164.1,806.2 1164.5,808.9 1165.0,811.6 1165.5,814.0 1166.0,816.3 1166.4,818.4 1166.9,820.4 1167.4,822.2 1167.8,823.8 1168.3,825.3 1168.8,826.6 1169.2,827.7 1169.7,828.6 1170.2,829.4 1170.7,830.0 1171.1,830.4 1171.6,830.7 1172.1,830.8 1172.5,830.7 1173.0,830.4 1173.5,830.0 1173.9,829.4 1174.4,828.6 1174.9,827.6 1175.4,826.5 1175.8,825.2 1176.3,823.7 1176.8,822.0 1177.2,820.2 1177.7,818.2 1178.2,816.1 1178.6,813.7 1179.1,811.3 1179.6,808.7 1180.1,805.9 1180.5,802.9 1181.0,799.8 1181.5,796.6 1181.9,793.1 1182.4,789.6 1182.9,785.9 1183.3,782.0 1183.8,778.0 1184.3,773.9 1184.8,769.7 1185.2,765.3 1185.7,760.7 1186.2,756.1 1186.6,751.3 1187.1,746.4 1187.6,741.4 1188.0,736.3 1188.5,731.1 1189.0,725.8 1189.4,720.4 1189.9,714.8 1190.4,709.2 1190.9,703.5 1191.3,697.7 1191.8,691.8 1192.3,685.9 1192.7,679.8 1193.2,673.8 1193.7,667.6 1194.1,661.3 1194.6,655.0 1195.1,648.7 1195.6,642.4 1196.0,635.9 1196.5,629.5 1197.0,623.0 1197.4,616.5 1197.9,609.9 1198.4,603.3 1198.8,596.7 1199.3,590.1 1199.8,583.5 1200.3,576.9 1200.7,570.3 1201.2,563.7 1201.7,557.2 1202.1,550.6 1202.6,544.0 1203.1,537.5 1203.5,531.0 1204.0,524.6 1204.5,518.1 1205.0,511.8 1205.4,505.4 1205.9,499.1 1206.4,492.9 1206.8,486.8 1207.3,480.7 1207.8,474.6 1208.2,468.7 1208.7,462.8 1209.2,457.0 1209.7,451.3 1210.1,445.7 1210.6,440.2 1211.1,434.8 1211.5,429.4 1212.0,424.2 1212.5,419.1 1212.9,414.1 1213.4,409.2 1213.9,404.5 1214.4,399.8 1214.8,395.3 1215.3,390.9 1215.8,386.7 1216.2,382.6 1216.7,378.6 1217.2,374.8 1217.6,371.1 1218.1,367.5 1218.6,364.1 1219.0,360.8 1219.5,357.7 1220.0,354.8 1220.5,352.0 1220.9,349.4 1221.4,346.9 1221.9,344.6 1222.3,342.5 1222.8,340.5 1223.3,338.7 1223.7,337.1 1224.2,335.6 1224.7,334.3 1225.2,333.2 1225.6,332.2 1226.1,331.4 1226.6,330.8 1227.0,330.4 1227.5,330.1 1228.0,330.0 1228.4,330.1 1228.9,330.4 1229.4,330.8 1229.9,331.4 1230.3,332.2 1230.8,333.1 1231.3,334.3 1231.7,335.6 1232.2,337.1 1232.7,338.7 1233.1,340.5 1233.6,342.5 1234.1,344.6 1234.6,346.9 1235.0,349.4 1235.5,352.0 1236.0,354.8 1236.4,357.7 1236.9,360.8 1237.4,364.1 1237.8,367.5 1238.3,371.0 1238.8,374.7 1239.3,378.6 1239.7,382.6 1240.2,386.7 1240.7,390.9 1241.1,395.3 1241.6,399.8 1242.1,404.5 1242.5,409.2 1243.0,414.1 1243.5,419.1 1244.0,424.2 1244.4,429.4 1244.9,434.8 1245.4,440.2 1245.8,445.7 1246.3,451.3 1246.8,457.0 1247.2,462.8 1247.7,468.7 1248.2,474.6 1248.6,480.7 1249.1,486.8 1249.6,492.9 1250.1,499.2 1250.5,505.4 1251.0,511.7 1251.5,518.1 1251.9,524.6 1252.4,531.0 1252.9,537.5 1253.3,544.0 1253.8,550.6 1254.3,557.1 1254.8,563.7 1255.2,570.3 1255.7,576.9 1256.2,583.5 1256.6,590.2 1257.1,596.8 1257.6,603.4 1258.0,609.9 1258.5,616.5 1259.0,623.0 1259.5,629.5 1259.9,635.9 1260.4,642.4 1260.9,648.7 1261.3,655.1 1261.8,661.4 1262.3,667.6 1262.7,673.7 1263.2,679.8 1263.7,685.9 1264.2,691.8 1264.6,697.7 1265.1,703.5 1265.6,709.2 1266.0,714.8 1266.5,720.3 1267.0,725.8 1267.4,731.1 1267.9,736.3 1268.4,741.4 1268.9,746.4 1269.3,751.3 1269.8,756.1 1270.3,760.7 1270.7,765.3 1271.2,769.7 1271.7,773.9 1272.1,778.0 1272.6,782.0 1273.1,785.9 1273.6,789.6 1274.0,793.1 1274.5,796.5 1275.0,799.8 1275.4,802.9 1275.9,805.9 1276.4,808.7 1276.8,811.3 1277.3,813.8 1277.8,816.1 1278.2,818.2 1278.7,820.2 1279.2,822.0 1279.7,823.7 1280.1,825.1 1280.6,826.5 1281.1,827.6 1281.5,828.6 1282.0,829.3 1282.5,830.0 1282.9,830.4 1283.4,830.7 1283.9,830.8 1284.4,830.7 1284.8,830.4 1285.3,830.0 1285.8,829.4 1286.2,828.6 1286.7,827.7 1287.2,826.6 1287.6,825.3 1288.1,823.8 1288.6,822.2 1289.1,820.4 1289.5,818.4 1290.0,816.3 1290.5,814.0 1290.9,811.5 1291.4,808.9 1291.9,806.1 1292.3,803.2 1292.8,800.1 1293.3,796.9 1293.8,793.5 1294.2,789.9 1294.7,786.2 1295.2,782.4 1295.6,778.4 1296.1,774.3 1296.6,770.1 1297.0,765.7 1297.5,761.2 1298.0,756.5 1298.5,751.8 1298.9,746.9 1299.4,741.9 1299.9,736.8 1300.3,731.6 1300.8,726.3 1301.3,720.9 1301.7,715.4 1302.2,709.7 1302.7,704.0 1303.2,698.2 1303.6,692.4 1304.1,686.4 1304.6,680.4 1305.0,674.3 1305.5,668.2 1306.0,661.9 1306.4,655.7 1306.9,649.3 1307.4,643.0 1307.8,636.5 1308.3,630.1 1308.8,623.6 1309.3,617.1 1309.7,610.5 1310.2,604.0 1310.7,597.4 1311.1,590.8 1311.6,584.2 1312.1,577.6 1312.5,571.0 1313.0,564.4 1313.5,557.8 1314.0,551.2 1314.4,544.7 1314.9,538.1 1315.4,531.6 1315.8,525.2 1316.3,518.7 1316.8,512.4 1317.2,506.0 1317.7,499.7 1318.2,493.5 1318.7,487.4 1319.1,481.3 1319.6,475.2 1320.1,469.3 1320.5,463.4 1321.0,457.6 1321.5,451.9 1321.9,446.2 1322.4,440.7 1322.9,435.3 1323.4,429.9 1323.8,424.7 1324.3,419.6 1324.8,414.6 1325.2,409.7 1325.7,404.9 1326.2,400.3 1326.6,395.7 1327.1,391.3 1327.6,387.1 1328.1,383.0 1328.5,379.0 1329.0,375.1 1329.5,371.4 1329.9,367.8 1330.4,364.4 1330.9,361.1 1331.3,358.0 1331.8,355.1 1332.3,352.3 1332.8,349.6 1333.2,347.2 1333.7,344.8 1334.2,342.7 1334.6,340.7 1335.1,338.9 1335.6,337.2 1336.0,335.7 1336.5,334.4 1337.0,333.3 1337.4,332.3 1337.9,331.5 1338.4,330.9 1338.9,330.4 1339.3,330.1 1339.8,330.0 1340.3,330.1 1340.7,330.3 1341.2,330.8 1341.7,331.4 1342.1,332.1 1342.6,333.1 1343.1,334.2 1343.6,335.5 1344.0,336.9 1344.5,338.5 1345.0,340.3 1345.4,342.3 1345.9,344.4 1346.4,346.7 1346.8,349.1 1347.3,351.8 1347.8,354.5 1348.3,357.5 1348.7,360.5 1349.2,363.8 1349.7,367.2 1350.1,370.7 1350.6,374.4 1351.1,378.2 1351.5,382.2 1352.0,386.3 1352.5,390.5 1353.0,394.9 1353.4,399.4 1353.9,404.0 1354.4,408.8 1354.8,413.6 1355.3,418.6 1355.8,423.7 1356.2,428.9 1356.7,434.3 1357.2,439.7 1357.7,445.2 1358.1,450.8 1358.6,456.5 1359.1,462.3 1359.5,468.1 1360.0,474.1 1360.5,480.1 1360.9,486.2 1361.4,492.3 1361.9,498.6 1362.4,504.8 1362.8,511.2 1363.3,517.5 1363.8,523.9 1364.2,530.4 1364.7,536.9 1365.2,543.4 1365.6,550.0 1366.1,556.5 1366.6,563.1 1367.0,569.7 1367.5,576.3 1368.0,582.9 1368.5,589.5 1368.9,596.1 1369.4,602.7 1369.9,609.3 1370.3,615.8 1370.8,622.4 1371.3,628.9 1371.7,635.3 1372.2,641.7 1372.7,648.1 1373.2,654.5 1373.6,660.8 1374.1,667.0 1374.6,673.2 1375.0,679.3 1375.5,685.3 1376.0,691.3 1376.4,697.1 1376.9,702.9 1377.4,708.7 1377.9,714.3 1378.3,719.8 1378.8,725.3 1379.3,730.6 1379.7,735.8 1380.2,741.0 1380.7,746.0 1381.1,750.9 1381.6,755.7 1382.1,760.3 1382.6,764.8 1383.0,769.2 1383.5,773.5 1384.0,777.7 1384.4,781.7 1384.9,785.5 1385.4,789.2 1385.8,792.8 1386.3,796.2 1386.8,799.5 1387.3,802.6 1387.7,805.6 1388.2,808.4 1388.7,811.0 1389.1,813.5 1389.6,815.9 1390.1,818.0 1390.5,820.0 1391.0,821.9 1391.5,823.5 1392.0,825.0 1392.4,826.3 1392.9,827.5 1393.4,828.5 1393.8,829.3 1394.3,829.9 1394.8,830.4 1395.2,830.7 1395.7,830.8 1396.2,830.7 1396.6,830.5 1397.1,830.1 1397.6,829.5 1398.1,828.7 1398.5,827.8 1399.0,826.7 1399.5,825.4 1399.9,824.0 1400.4,822.3 1400.9,820.6 1401.3,818.6 1401.8,816.5 1402.3,814.2 1402.8,811.8 1403.2,809.2 1403.7,806.4 1404.2,803.5 1404.6,800.4 1405.1,797.2 1405.6,793.8 1406.0,790.3 1406.5,786.6 1407.0,782.8 1407.5,778.8 1407.9,774.7 1408.4,770.5 1408.9,766.1 1409.3,761.6 1409.8,757.0 1410.3,752.2 1410.7,747.4 1411.2,742.4 1411.7,737.3 1412.2,732.1 1412.6,726.8 1413.1,721.4 1413.6,715.9 1414.0,710.3 1414.5,704.6 1415.0,698.8 1415.4,692.9 1415.9,687.0 1416.4,681.0 1416.9,674.9 1417.3,668.8 1417.8,662.5 1418.3,656.3 1418.7,649.9 1419.2,643.6 1419.7,637.2 1420.1,630.7 1420.6,624.2 1421.1,617.7 1421.6,611.2 1422.0,604.6 1422.5,598.0 1423.0,591.4 1423.4,584.8 1423.9,578.2 1424.4,571.6 1424.8,565.0 1425.3,558.4 1425.8,551.8 1426.2,545.3 1426.7,538.8 1427.2,532.3 1427.7,525.8 1428.1,519.4 1428.6,513.0 1429.1,506.6 1429.5,500.3 1430.0,494.1 1430.5,487.9 1430.9,481.8 1431.4,475.8 1431.9,469.8 1432.4,463.9 1432.8,458.1 1433.3,452.4 1433.8,446.8 1434.2,441.2 1434.7,435.8 1435.2,430.5 1435.6,425.2 1436.1,420.1 1436.6,415.1 1437.1,410.2 1437.5,405.4 1438.0,400.7 1438.5,396.2 1438.9,391.8 1439.4,387.5 1439.9,383.3 1440.3,379.3 1440.8,375.5 1441.3,371.7 1441.8,368.2 1442.2,364.7 1442.7,361.5 1443.2,358.3 1443.6,355.4 1444.1,352.5 1444.6,349.9 1445.0,347.4 1445.5,345.0 1446.0,342.9 1446.5,340.9 1446.9,339.0 1447.4,337.4 1447.9,335.9 1448.3,334.5 1448.8,333.4 1449.3,332.4 1449.7,331.6 1450.2,330.9 1450.7,330.4 1451.2,330.2 1451.6,330.0 1452.1,330.1 1452.6,330.3 1453.0,330.7 1453.5,331.3 1454.0,332.0 1454.4,333.0 1454.9,334.1 1455.4,335.3 1455.8,336.8 1456.3,338.4 1456.8,340.1 1457.3,342.1 1457.7,344.2 1458.2,346.5 1458.7,348.9 1459.1,351.5 1459.6,354.3 1460.1,357.2 1460.5,360.2 1461.0,363.5 1461.5,366.8 1462.0,370.4 1462.4,374.0 1462.9,377.8 1463.4,381.8 1463.8,385.9 1464.3,390.1 1464.8,394.5 1465.2,399.0" fill="none" stroke="#ff00ff" stroke-width="1.1" stroke-linejoin="round" shape-rendering="crispEdges"/><polyline points="725.2,875.3 725.7,875.3 726.2,875.0 726.7,874.5 727.1,873.9 727.6,873.0 728.1,871.9 728.5,870.6 729.0,869.2 729.5,867.5 729.9,865.6 730.4,863.5 730.9,861.2 731.4,858.8 731.8,856.1 732.3,853.2 732.8,850.2 733.2,846.9 733.7,843.5 734.2,839.9 734.6,836.1 735.1,832.2 735.6,828.0 736.1,823.7 736.5,819.2 737.0,814.6 737.5,809.8 737.9,804.8 738.4,799.7 738.9,794.4 739.3,788.9 739.8,783.4 740.3,777.6 740.8,771.8 741.2,765.8 741.7,759.7 742.2,753.5 742.6,747.1 743.1,740.6 743.6,734.0 744.0,727.3 744.5,720.5 745.0,713.6 745.5,706.6 745.9,699.6 746.4,692.4 746.9,685.2 747.3,677.9 747.8,670.5 748.3,663.0 748.7,655.5 749.2,648.0 749.7,640.4 750.1,632.7 750.6,625.1 751.1,617.4 751.6,609.6 752.0,601.9 752.5,594.1 753.0,586.3 753.4,578.5 753.9,570.8 754.4,563.0 754.8,555.2 755.3,547.5 755.8,539.8 756.3,532.1 756.7,524.4 757.2,516.8 757.7,509.2 758.1,501.7 758.6,494.2 759.1,486.8 759.5,479.5 760.0,472.2 760.5,465.0 761.0,457.9 761.4,450.8 761.9,443.9 762.4,437.0 762.8,430.3 763.3,423.6 763.8,417.1 764.2,410.7 764.7,404.4 765.2,398.2 765.7,392.1 766.1,386.2 766.6,380.4 767.1,374.8 767.5,369.3 768.0,363.9 768.5,358.7 768.9,353.6 769.4,348.7 769.9,344.0 770.4,339.4 770.8,335.0 771.3,330.8 771.8,326.7 772.2,322.9 772.7,319.2 773.2,315.6 773.6,312.3 774.1,309.1 774.6,306.2 775.1,303.4 775.5,300.8 776.0,298.5 776.5,296.3 776.9,294.3 777.4,292.5 777.9,290.9 778.3,289.5 778.8,288.3 779.3,287.4 779.7,286.6 780.2,286.0 780.7,285.6 781.2,285.5 781.6,285.5 782.1,285.8 782.6,348.6 783.0,344.4 783.5,340.5 784.0,341.9 784.4,347.1 784.9,352.4 785.4,357.8 785.9,363.4 786.3,369.0 786.8,371.8 787.3,373.7 787.7,376.9 788.2,383.8 788.7,388.4 789.1,389.9 789.6,390.0 790.1,392.5 790.6,395.6 791.0,395.8 791.5,395.6 792.0,398.5 792.4,406.1 792.9,413.9 793.4,421.6 793.8,429.5 794.3,437.4 794.8,438.1 795.3,436.9 795.7,436.0 796.2,443.3 796.7,452.1 797.1,460.8 797.6,469.6 798.1,478.4 798.5,482.5 799.0,483.3 799.5,484.4 800.0,487.7 800.4,496.2 800.9,504.8 801.4,513.4 801.8,522.0 802.3,530.5 802.8,533.1 803.2,534.0 803.7,535.0 804.2,541.9 804.7,551.0 805.1,560.1 805.6,569.1 806.1,578.1 806.5,582.7 807.0,587.8 807.5,592.8 807.9,598.2 808.4,605.1 808.9,612.0 809.3,618.8 809.8,625.7 810.3,632.4 810.8,638.8 811.2,642.0 811.7,645.2 812.2,650.9 812.6,658.3 813.1,665.7 813.6,672.9 814.0,680.1 814.5,691.5 815.0,692.7 815.5,693.9 815.9,695.1 816.4,702.7 816.9,710.2 817.3,717.6 817.8,724.8 818.3,731.9 818.7,735.8 819.2,737.5 819.7,739.1 820.2,742.6 820.6,748.6 821.1,754.4 821.6,760.1 822.0,765.7 822.5,771.1 823.0,773.0 823.4,773.0 823.9,773.0 824.4,777.5 824.9,782.6 825.3,787.6 825.8,792.3 826.3,796.9 826.7,795.7 827.2,797.1 827.7,798.3 828.1,799.9 828.6,802.6 829.1,805.0 829.6,807.3 830.0,809.4 830.5,811.4 831.0,813.8 831.4,812.9 831.9,811.9 832.4,812.8 832.8,814.4 833.3,815.9 833.8,817.1 834.3,818.2 834.7,817.0 835.2,815.5 835.7,813.9 836.1,812.3 836.6,812.3 837.1,812.1 837.5,811.7 838.0,811.2 838.5,810.5 838.9,808.6 839.4,805.1 839.9,801.4 840.4,799.3 840.8,798.1 841.3,796.8 841.8,795.3 842.2,793.7 842.7,792.2 843.2,787.6 843.6,782.8 844.1,777.9 844.6,775.5 845.1,773.0 845.5,770.4 846.0,767.6 846.5,764.7 846.9,759.7 847.4,755.1 847.9,750.4 848.3,745.9 848.8,741.7 849.3,737.5 849.8,733.1 850.2,728.6 850.7,724.1 851.2,719.2 851.6,713.2 852.1,707.2 852.6,702.3 853.0,697.4 853.5,692.5 854.0,687.5 854.5,682.4 854.9,676.5 855.4,669.8 855.9,663.2 856.3,656.9 856.8,651.6 857.3,646.2 857.7,640.7 858.2,635.2 858.7,629.6 859.2,624.7 859.6,616.7 860.1,608.8 860.6,602.9 861.0,597.7 861.5,592.5 862.0,587.3 862.4,582.1 862.9,576.4 863.4,568.7 863.9,561.1 864.3,553.8 864.8,548.5 865.3,543.2 865.7,537.9 866.2,532.7 866.7,527.4 867.1,519.6 867.6,513.1 868.1,506.7 868.5,500.9 869.0,495.4 869.5,490.0 870.0,484.7 870.4,479.5 870.9,474.3 871.4,468.2 871.8,461.5 872.3,455.0 872.8,450.6 873.2,446.2 873.7,441.9 874.2,437.7 874.7,433.6 875.1,428.2 875.6,423.2 876.1,418.3 876.5,413.8 877.0,409.8 877.5,405.9 877.9,402.2 878.4,398.6 878.9,395.1 879.4,391.6 879.8,387.2 880.3,383.0 880.8,380.1 881.2,377.5 881.7,375.1 882.2,372.8 882.6,370.6 883.1,367.8 883.6,365.1 884.1,362.5 884.5,360.2 885.0,358.6 885.5,357.1 885.9,355.7 886.4,354.5 886.9,353.4 887.3,351.9 887.8,350.7 888.3,349.7 888.8,349.1 889.2,348.7 889.7,348.6 890.2,348.6 890.6,348.7 891.1,350.1 891.6,349.4 892.0,349.0 892.5,348.9 893.0,350.2 893.5,351.7 893.9,353.4 894.4,355.2 894.9,357.2 895.3,357.9 895.8,359.3 896.3,360.8 896.7,362.8 897.2,365.3 897.7,367.9 898.1,370.6 898.6,373.5 899.1,376.6 899.6,379.2 900.0,381.9 900.5,384.8 901.0,388.4 901.4,392.0 901.9,395.9 902.4,399.8 902.8,403.9 903.3,408.5 903.8,411.7 904.3,415.1 904.7,419.2 905.2,424.1 905.7,429.2 906.1,434.3 906.6,439.5 907.1,444.8 907.5,448.8 908.0,453.2 908.5,457.7 909.0,463.1 909.4,468.8 909.9,474.6 910.4,480.5 910.8,486.4 911.3,491.8 911.8,497.1 912.2,502.5 912.7,508.1 913.2,514.1 913.7,520.2 914.1,526.3 914.6,532.4 915.1,538.5 915.5,544.9 916.0,550.3 916.5,555.7 916.9,561.8 917.4,568.3 917.9,574.7 918.4,581.2 918.8,587.6 919.3,593.4 919.8,599.1 920.2,604.8 920.7,610.5 921.2,616.8 921.6,623.0 922.1,629.2 922.6,635.3 923.1,641.4 923.5,647.4 924.0,652.8 924.5,658.1 924.9,663.8 925.4,669.7 925.9,675.5 926.3,681.2 926.8,686.9 927.3,692.5 927.7,697.1 928.2,702.1 928.7,707.1 929.2,712.2 929.6,717.3 930.1,722.3 930.6,727.1 931.0,731.9 931.5,736.9 932.0,740.9 932.4,744.7 932.9,748.8 933.4,753.1 933.9,757.4 934.3,761.5 934.8,765.4 935.3,769.3 935.7,772.1 936.2,775.1 936.7,777.9 937.1,781.1 937.6,784.2 938.1,787.2 938.6,790.0 939.0,792.6 939.5,795.2 940.0,797.0 940.4,798.6 940.9,800.2 941.4,802.2 941.8,804.0 942.3,805.7 942.8,807.1 943.3,808.5 943.7,809.0 944.2,809.4 944.7,809.7 945.1,810.2 945.6,810.7 946.1,811.0 946.5,811.2 947.0,811.2 947.5,810.9 948.0,810.2 948.4,809.4 948.9,808.5 949.4,807.6 949.8,806.6 950.3,805.4 950.8,804.0 951.2,802.5 951.7,800.8 952.2,798.7 952.7,796.5 953.1,794.2 953.6,792.0 954.1,789.6 954.5,787.0 955.0,784.3 955.5,781.3 955.9,778.1 956.4,774.8 956.9,771.3 957.3,767.9 957.8,764.4 958.3,760.7 958.8,756.9 959.2,753.0 959.7,748.9 960.2,744.5 960.6,740.1 961.1,735.6 961.6,731.1 962.0,726.5 962.5,721.8 963.0,717.0 963.5,712.1 963.9,706.9 964.4,701.7 964.9,696.4 965.3,691.2 965.8,685.8 966.3,680.4 966.7,674.9 967.2,669.4 967.7,663.8 968.2,658.0 968.6,652.1 969.1,646.2 969.6,640.4 970.0,634.6 970.5,628.7 971.0,622.8 971.4,616.9 971.9,610.9 972.4,604.7 972.9,598.4 973.3,592.4 973.8,586.4 974.3,580.4 974.7,574.4 975.2,568.4 975.7,562.2 976.1,556.1 976.6,550.0 977.1,544.0 977.6,538.0 978.0,532.1 978.5,526.2 979.0,520.3 979.4,514.5 979.9,508.8 980.4,502.9 980.8,497.1 981.3,491.4 981.8,485.9 982.3,480.5 982.7,475.1 983.2,469.8 983.7,464.5 984.1,459.2 984.6,453.9 985.1,448.8 985.5,443.9 986.0,439.1 986.5,434.4 986.9,429.8 987.4,425.3 987.9,420.9 988.4,416.5 988.8,412.2 989.3,408.0 989.8,404.1 990.2,400.3 990.7,396.6 991.2,393.0 991.6,389.6 992.1,386.2 992.6,382.9 993.1,379.7 993.5,376.8 994.0,374.1 994.5,371.5 994.9,369.1 995.4,366.8 995.9,364.6 996.3,362.5 996.8,360.5 997.3,358.7 997.8,357.2 998.2,355.8 998.7,354.5 999.2,353.5 999.6,352.6 1000.1,351.7 1000.6,351.0 1001.0,350.4 1001.5,350.1 1002.0,350.0 1002.5,350.0 1002.9,350.2 1003.4,350.6 1003.9,351.1 1004.3,351.7 1004.8,352.4 1005.3,353.3 1005.7,354.4 1006.2,355.7 1006.7,357.2 1007.2,358.8 1007.6,360.6 1008.1,362.5 1008.6,364.5 1009.0,366.6 1009.5,368.9 1010.0,371.4 1010.4,374.1 1010.9,377.0 1011.4,379.9 1011.9,383.0 1012.3,386.1 1012.8,389.4 1013.3,392.8 1013.7,396.4 1014.2,400.2 1014.7,404.0 1015.1,408.0 1015.6,412.1 1016.1,416.4 1016.5,420.6 1017.0,424.9 1017.5,429.4 1018.0,434.1 1018.4,438.9 1018.9,443.8 1019.4,448.8 1019.8,453.9 1020.3,459.0 1020.8,464.1 1021.2,469.4 1021.7,474.8 1022.2,480.2 1022.7,485.8 1023.1,491.3 1023.6,497.0 1024.1,502.7 1024.5,508.4 1025.0,514.1 1025.5,519.9 1025.9,525.8 1026.4,531.8 1026.9,537.8 1027.4,543.8 1027.8,549.9 1028.3,555.9 1028.8,561.9 1029.2,567.9 1029.7,573.9 1030.2,580.1 1030.6,586.2 1031.1,592.3 1031.6,598.4 1032.1,604.4 1032.5,610.4 1033.0,616.4 1033.5,622.4 1033.9,628.4 1034.4,634.3 1034.9,640.2 1035.3,646.1 1035.8,651.9 1036.3,657.7 1036.8,663.3 1037.2,668.9 1037.7,674.4 1038.2,680.0 1038.6,685.5 1039.1,690.9 1039.6,696.2 1040.0,701.4 1040.5,706.5 1041.0,711.5 1041.5,716.4 1041.9,721.3 1042.4,726.0 1042.9,730.7 1043.3,735.3 1043.8,739.7 1044.3,744.1 1044.7,748.3 1045.2,752.3 1045.7,756.3 1046.1,760.2 1046.6,763.9 1047.1,767.5 1047.6,771.0 1048.0,774.4 1048.5,777.6 1049.0,780.6 1049.4,783.5 1049.9,786.3 1050.4,789.0 1050.8,791.5 1051.3,793.9 1051.8,796.1 1052.3,798.1 1052.7,800.0 1053.2,801.7 1053.7,803.3 1054.1,804.8 1054.6,806.1 1055.1,807.2 1055.5,808.2 1056.0,809.0 1056.5,809.6 1057.0,810.1 1057.4,810.4 1057.9,810.6 1058.4,810.6 1058.8,810.5 1059.3,810.2 1059.8,809.7 1060.2,809.2 1060.7,808.3 1061.2,807.3 1061.7,806.2 1062.1,804.9 1062.6,803.6 1063.1,802.0 1063.5,800.3 1064.0,798.4 1064.5,796.3 1064.9,794.1 1065.4,791.8 1065.9,789.3 1066.4,786.7 1066.8,783.9 1067.3,781.0 1067.8,778.0 1068.2,774.8 1068.7,771.5 1069.2,768.0 1069.6,764.4 1070.1,760.7 1070.6,756.8 1071.1,752.9 1071.5,748.8 1072.0,744.7 1072.5,740.4 1072.9,735.9 1073.4,731.3 1073.9,726.7 1074.3,722.0 1074.8,717.1 1075.3,712.2 1075.7,707.2 1076.2,702.1 1076.7,696.9 1077.2,691.6 1077.6,686.2 1078.1,680.8 1078.6,675.3 1079.0,669.7 1079.5,664.1 1080.0,658.4 1080.4,652.7 1080.9,646.9 1081.4,641.0 1081.9,635.1 1082.3,629.2 1082.8,623.2 1083.3,617.3 1083.7,611.3 1084.2,605.2 1084.7,599.2 1085.1,593.1 1085.6,587.0 1086.1,581.0 1086.6,574.9 1087.0,568.8 1087.5,562.8 1088.0,556.7 1088.4,550.7 1088.9,544.7 1089.4,538.7 1089.8,532.7 1090.3,526.8 1090.8,520.9 1091.3,515.1 1091.7,509.3 1092.2,503.5 1092.7,497.8 1093.1,492.2 1093.6,486.6 1094.1,481.1 1094.5,475.6 1095.0,470.3 1095.5,465.0 1096.0,459.8 1096.4,454.6 1096.9,449.6 1097.4,444.6 1097.8,439.7 1098.3,435.0 1098.8,430.3 1099.2,425.8 1099.7,421.3 1100.2,417.0 1100.7,412.8 1101.1,408.7 1101.6,404.7 1102.1,400.8 1102.5,397.1 1103.0,393.5 1103.5,390.0 1103.9,386.7 1104.4,383.5 1104.9,380.4 1105.3,377.4 1105.8,374.6 1106.3,372.0 1106.8,369.5 1107.2,367.1 1107.7,364.9 1108.2,362.9 1108.6,361.0 1109.1,359.2 1109.6,357.6 1110.0,356.1 1110.5,354.8 1111.0,353.7 1111.5,352.7 1111.9,351.9 1112.4,351.3 1112.9,350.7 1113.3,350.4 1113.8,350.2 1114.3,350.2 1114.7,350.3 1115.2,350.7 1115.7,351.1 1116.2,351.7 1116.6,352.5 1117.1,353.5 1117.6,354.5 1118.0,355.8 1118.5,357.2 1119.0,358.8 1119.4,360.5 1119.9,362.4 1120.4,364.4 1120.9,366.6 1121.3,368.9 1121.8,371.4 1122.3,374.0 1122.7,376.8 1123.2,379.7 1123.7,382.7 1124.1,385.9 1124.6,389.2 1125.1,392.7 1125.6,396.2 1126.0,399.9 1126.5,403.8 1127.0,407.7 1127.4,411.8 1127.9,416.0 1128.4,420.3 1128.8,424.7 1129.3,429.3 1129.8,433.9 1130.3,438.6 1130.7,443.5 1131.2,448.4 1131.7,453.4 1132.1,458.5 1132.6,463.7 1133.1,469.0 1133.5,474.3 1134.0,479.8 1134.5,485.3 1134.9,490.8 1135.4,496.5 1135.9,502.2 1136.4,507.9 1136.8,513.7 1137.3,519.5 1137.8,525.4 1138.2,531.3 1138.7,537.3 1139.2,543.2 1139.6,549.3 1140.1,555.3 1140.6,561.3 1141.1,567.4 1141.5,573.5 1142.0,579.5 1142.5,585.6 1142.9,591.7 1143.4,597.7 1143.9,603.8 1144.3,609.8 1144.8,615.8 1145.3,621.8 1145.8,627.8 1146.2,633.7 1146.7,639.6 1147.2,645.5 1147.6,651.3 1148.1,657.0 1148.6,662.7 1149.0,668.4 1149.5,673.9 1150.0,679.5 1150.5,684.9 1150.9,690.3 1151.4,695.6 1151.9,700.8 1152.3,705.9 1152.8,711.0 1153.3,715.9 1153.7,720.8 1154.2,725.6 1154.7,730.2 1155.2,734.8 1155.6,739.2 1156.1,743.6 1156.6,747.8 1157.0,751.9 1157.5,755.9 1158.0,759.8 1158.4,763.5 1158.9,767.1 1159.4,770.6 1159.8,774.0 1160.3,777.2 1160.8,780.3 1161.3,783.2 1161.7,786.0 1162.2,788.7 1162.7,791.2 1163.1,793.6 1163.6,795.8 1164.1,797.8 1164.5,799.8 1165.0,801.5 1165.5,803.1 1166.0,804.6 1166.4,805.9 1166.9,807.0 1167.4,808.0 1167.8,808.8 1168.3,809.5 1168.8,810.0 1169.2,810.4 1169.7,810.5 1170.2,810.6 1170.7,810.4 1171.1,810.1 1171.6,809.7 1172.1,809.1 1172.5,808.3 1173.0,807.4 1173.5,806.3 1173.9,805.0 1174.4,803.6 1174.9,802.1 1175.4,800.4 1175.8,798.5 1176.3,796.5 1176.8,794.3 1177.2,792.0 1177.7,789.5 1178.2,786.9 1178.6,784.2 1179.1,781.3 1179.6,778.2 1180.1,775.1 1180.5,771.8 1181.0,768.3 1181.5,764.7 1181.9,761.0 1182.4,757.2 1182.9,753.3 1183.3,749.2 1183.8,745.0 1184.3,740.7 1184.8,736.3 1185.2,731.8 1185.7,727.1 1186.2,722.4 1186.6,717.6 1187.1,712.6 1187.6,707.6 1188.0,702.5 1188.5,697.3 1189.0,692.1 1189.4,686.7 1189.9,681.3 1190.4,675.8 1190.9,670.2 1191.3,664.6 1191.8,658.9 1192.3,653.2 1192.7,647.4 1193.2,641.6 1193.7,635.7 1194.1,629.8 1194.6,623.8 1195.1,617.8 1195.6,611.8 1196.0,605.8 1196.5,599.8 1197.0,593.7 1197.4,587.6 1197.9,581.6 1198.4,575.5 1198.8,569.4 1199.3,563.3 1199.8,557.3 1200.3,551.3 1200.7,545.3 1201.2,539.3 1201.7,533.3 1202.1,527.4 1202.6,521.5 1203.1,515.6 1203.5,509.8 1204.0,504.1 1204.5,498.4 1205.0,492.7 1205.4,487.1 1205.9,481.6 1206.4,476.2 1206.8,470.8 1207.3,465.5 1207.8,460.3 1208.2,455.1 1208.7,450.1 1209.2,445.1 1209.7,440.2 1210.1,435.5 1210.6,430.8 1211.1,426.2 1211.5,421.8 1212.0,417.4 1212.5,413.2 1212.9,409.1 1213.4,405.1 1213.9,401.2 1214.4,397.5 1214.8,393.8 1215.3,390.3 1215.8,387.0 1216.2,383.8 1216.7,380.7 1217.2,377.7 1217.6,374.9 1218.1,372.3 1218.6,369.7 1219.0,367.4 1219.5,365.1 1220.0,363.1 1220.5,361.1 1220.9,359.4 1221.4,357.7 1221.9,356.3 1222.3,355.0 1222.8,353.8 1223.3,352.8 1223.7,352.0 1224.2,351.3 1224.7,350.8 1225.2,350.5 1225.6,350.3 1226.1,350.2 1226.6,350.4 1227.0,350.6 1227.5,351.1 1228.0,351.7 1228.4,352.5 1228.9,353.4 1229.4,354.5 1229.9,355.7 1230.3,357.1 1230.8,358.6 1231.3,360.4 1231.7,362.2 1232.2,364.2 1232.7,366.4 1233.1,368.7 1233.6,371.2 1234.1,373.8 1234.6,376.5 1235.0,379.4 1235.5,382.4 1236.0,385.6 1236.4,388.9 1236.9,392.3 1237.4,395.9 1237.8,399.6 1238.3,403.4 1238.8,407.4 1239.3,411.4 1239.7,415.6 1240.2,419.9 1240.7,424.3 1241.1,428.8 1241.6,433.5 1242.1,438.2 1242.5,443.0 1243.0,447.9 1243.5,452.9 1244.0,458.0 1244.4,463.2 1244.9,468.5 1245.4,473.8 1245.8,479.3 1246.3,484.8 1246.8,490.3 1247.2,495.9 1247.7,501.6 1248.2,507.3 1248.6,513.1 1249.1,519.0 1249.6,524.8 1250.1,530.8 1250.5,536.7 1251.0,542.7 1251.5,548.7 1251.9,554.7 1252.4,560.8 1252.9,566.8 1253.3,572.9 1253.8,579.0 1254.3,585.0 1254.8,591.1 1255.2,597.2 1255.7,603.2 1256.2,609.2 1256.6,615.3 1257.1,621.3 1257.6,627.2 1258.0,633.1 1258.5,639.0 1259.0,644.9 1259.5,650.7 1259.9,656.5 1260.4,662.2 1260.9,667.8 1261.3,673.4 1261.8,678.9 1262.3,684.4 1262.7,689.8 1263.2,695.1 1263.7,700.3 1264.2,705.4 1264.6,710.5 1265.1,715.5 1265.6,720.3 1266.0,725.1 1266.5,729.8 1267.0,734.3 1267.4,738.8 1267.9,743.2 1268.4,747.4 1268.9,751.5 1269.3,755.5 1269.8,759.4 1270.3,763.2 1270.7,766.8 1271.2,770.3 1271.7,773.7 1272.1,776.9 1272.6,780.0 1273.1,782.9 1273.6,785.8 1274.0,788.4 1274.5,791.0 1275.0,793.3 1275.4,795.6 1275.9,797.6 1276.4,799.6 1276.8,801.4 1277.3,803.0 1277.8,804.5 1278.2,805.8 1278.7,806.9 1279.2,807.9 1279.7,808.8 1280.1,809.4 1280.6,810.0 1281.1,810.3 1281.5,810.5 1282.0,810.6 1282.5,810.5 1282.9,810.2 1283.4,809.7 1283.9,809.1 1284.4,808.4 1284.8,807.5 1285.3,806.4 1285.8,805.2 1286.2,803.8 1286.7,802.2 1287.2,800.5 1287.6,798.7 1288.1,796.7 1288.6,794.5 1289.1,792.2 1289.5,789.8 1290.0,787.2 1290.5,784.4 1290.9,781.5 1291.4,778.5 1291.9,775.4 1292.3,772.1 1292.8,768.6 1293.3,765.1 1293.8,761.4 1294.2,757.6 1294.7,753.6 1295.2,749.6 1295.6,745.4 1296.1,741.1 1296.6,736.7 1297.0,732.2 1297.5,727.6 1298.0,722.8 1298.5,718.0 1298.9,713.1 1299.4,708.1 1299.9,703.0 1300.3,697.8 1300.8,692.6 1301.3,687.2 1301.7,681.8 1302.2,676.3 1302.7,670.8 1303.2,665.1 1303.6,659.5 1304.1,653.7 1304.6,647.9 1305.0,642.1 1305.5,636.2 1306.0,630.3 1306.4,624.4 1306.9,618.4 1307.4,612.4 1307.8,606.4 1308.3,600.3 1308.8,594.3 1309.3,588.2 1309.7,582.1 1310.2,576.1 1310.7,570.0 1311.1,563.9 1311.6,557.9 1312.1,551.8 1312.5,545.8 1313.0,539.8 1313.5,533.9 1314.0,527.9 1314.4,522.0 1314.9,516.2 1315.4,510.4 1315.8,504.6 1316.3,498.9 1316.8,493.3 1317.2,487.7 1317.7,482.1 1318.2,476.7 1318.7,471.3 1319.1,466.0 1319.6,460.8 1320.1,455.6 1320.5,450.5 1321.0,445.6 1321.5,440.7 1321.9,435.9 1322.4,431.2 1322.9,426.7 1323.4,422.2 1323.8,417.8 1324.3,413.6 1324.8,409.5 1325.2,405.5 1325.7,401.6 1326.2,397.8 1326.6,394.2 1327.1,390.7 1327.6,387.3 1328.1,384.1 1328.5,381.0 1329.0,378.0 1329.5,375.2 1329.9,372.5 1330.4,370.0 1330.9,367.6 1331.3,365.3 1331.8,363.3 1332.3,361.3 1332.8,359.5 1333.2,357.9 1333.7,356.4 1334.2,355.1 1334.6,353.9 1335.1,352.9 1335.6,352.1 1336.0,351.4 1336.5,350.9 1337.0,350.5 1337.4,350.3 1337.9,350.2 1338.4,350.3 1338.9,350.6 1339.3,351.0 1339.8,351.6 1340.3,352.4 1340.7,353.3 1341.2,354.4 1341.7,355.6 1342.1,357.0 1342.6,358.5 1343.1,360.2 1343.6,362.0 1344.0,364.0 1344.5,366.2 1345.0,368.5 1345.4,370.9 1345.9,373.5 1346.4,376.2 1346.8,379.1 1347.3,382.1 1347.8,385.3 1348.3,388.6 1348.7,392.0 1349.2,395.6 1349.7,399.2 1350.1,403.0 1350.6,407.0 1351.1,411.0 1351.5,415.2 1352.0,419.5 1352.5,423.9 1353.0,428.4 1353.4,433.0 1353.9,437.7 1354.4,442.5 1354.8,447.5 1355.3,452.5 1355.8,457.6 1356.2,462.7 1356.7,468.0 1357.2,473.3 1357.7,478.7 1358.1,484.2 1358.6,489.8 1359.1,495.4 1359.5,501.1 1360.0,506.8 1360.5,512.6 1360.9,518.4 1361.4,524.3 1361.9,530.2 1362.4,536.1 1362.8,542.1 1363.3,548.1 1363.8,554.1 1364.2,560.2 1364.7,566.2 1365.2,572.3 1365.6,578.4 1366.1,584.4 1366.6,590.5 1367.0,596.6 1367.5,602.6 1368.0,608.7 1368.5,614.7 1368.9,620.7 1369.4,626.7 1369.9,632.6 1370.3,638.5 1370.8,644.3 1371.3,650.2 1371.7,655.9 1372.2,661.6 1372.7,667.3 1373.2,672.9 1373.6,678.4 1374.1,683.9 1374.6,689.3 1375.0,694.6 1375.5,699.8 1376.0,705.0 1376.4,710.0 1376.9,715.0 1377.4,719.9 1377.9,724.7 1378.3,729.3 1378.8,733.9 1379.3,738.4 1379.7,742.7 1380.2,747.0 1380.7,751.1 1381.1,755.1 1381.6,759.0 1382.1,762.8 1382.6,766.4 1383.0,770.0 1383.5,773.3 1384.0,776.6 1384.4,779.7 1384.9,782.7 1385.4,785.5 1385.8,788.2 1386.3,790.7 1386.8,793.1 1387.3,795.4 1387.7,797.5 1388.2,799.4 1388.7,801.2 1389.1,802.8 1389.6,804.3 1390.1,805.6 1390.5,806.8 1391.0,807.8 1391.5,808.7 1392.0,809.4 1392.4,809.9 1392.9,810.3 1393.4,810.5 1393.8,810.6 1394.3,810.5 1394.8,810.2 1395.2,809.8 1395.7,809.2 1396.2,808.5 1396.6,807.6 1397.1,806.5 1397.6,805.3 1398.1,803.9 1398.5,802.4 1399.0,800.7 1399.5,798.9 1399.9,796.9 1400.4,794.7 1400.9,792.4 1401.3,790.0 1401.8,787.4 1402.3,784.7 1402.8,781.8 1403.2,778.8 1403.7,775.7 1404.2,772.4 1404.6,769.0 1405.1,765.4 1405.6,761.7 1406.0,757.9 1406.5,754.0 1407.0,750.0 1407.5,745.8 1407.9,741.5 1408.4,737.1 1408.9,732.6 1409.3,728.0 1409.8,723.3 1410.3,718.5 1410.7,713.6 1411.2,708.6 1411.7,703.5 1412.2,698.3 1412.6,693.1 1413.1,687.7 1413.6,682.3 1414.0,676.8 1414.5,671.3 1415.0,665.7 1415.4,660.0 1415.9,654.3 1416.4,648.5 1416.9,642.7 1417.3,636.8 1417.8,630.9 1418.3,625.0 1418.7,619.0 1419.2,613.0 1419.7,607.0 1420.1,600.9 1420.6,594.9 1421.1,588.8 1421.6,582.7 1422.0,576.6 1422.5,570.6 1423.0,564.5 1423.4,558.5 1423.9,552.4 1424.4,546.4 1424.8,540.4 1425.3,534.4 1425.8,528.5 1426.2,522.6 1426.7,516.7 1427.2,510.9 1427.7,505.2 1428.1,499.4 1428.6,493.8 1429.1,488.2 1429.5,482.7 1430.0,477.2 1430.5,471.8 1430.9,466.5 1431.4,461.2 1431.9,456.1 1432.4,451.0 1432.8,446.0 1433.3,441.2 1433.8,436.4 1434.2,431.7 1434.7,427.1 1435.2,422.6 1435.6,418.3 1436.1,414.0 1436.6,409.9 1437.1,405.8 1437.5,401.9 1438.0,398.2 1438.5,394.5 1438.9,391.0 1439.4,387.6 1439.9,384.4 1440.3,381.3 1440.8,378.3 1441.3,375.4 1441.8,372.8 1442.2,370.2 1442.7,367.8 1443.2,365.5 1443.6,363.4 1444.1,361.5 1444.6,359.7 1445.0,358.0 1445.5,356.6 1446.0,355.2 1446.5,354.0 1446.9,353.0 1447.4,352.2 1447.9,351.4 1448.3,350.9 1448.8,350.5 1449.3,350.3 1449.7,350.2 1450.2,350.3 1450.7,350.6 1451.2,351.0 1451.6,351.6 1452.1,352.3 1452.6,353.2 1453.0,354.2 1453.5,355.5 1454.0,356.8 1454.4,358.3 1454.9,360.0 1455.4,361.9 1455.8,363.8 1456.3,366.0 1456.8,368.2 1457.3,370.7 1457.7,373.3 1458.2,376.0 1458.7,378.8 1459.1,381.8 1459.6,385.0 1460.1,388.3 1460.5,391.7 1461.0,395.2 1461.5,398.9 1462.0,402.7 1462.4,406.6 1462.9,410.6 1463.4,414.8 1463.8,419.1 1464.3,423.5 1464.8,428.0 1465.2,432.6" fill="none" stroke="#ff8080" stroke-width="3.3" stroke-linejoin="round" /></g><path d="M726 265.5 H1462.5 V899.5" fill="none" stroke="#6a6a6a" stroke-width="1"/><rect x="723" y="265.5" width="3" height="634.0" fill="#a8a8a8"/><rect x="726" y="899" width="736.5" height="3.5" fill="#a8a8a8"/><line x1="726" y1="265.5" x2="726" y2="900.0" stroke="#5a5a5a" stroke-width="1"/><line x1="726" y1="899.5" x2="1462.5" y2="899.5" stroke="#5a5a5a" stroke-width="1"/><rect x="723" y="268" width="2" height="10" fill="#3a3a3a"/><rect x="723" y="891" width="2.5" height="8" fill="#3a3a3a"/><rect x="727" y="900.5" width="7" height="2" fill="#3a3a3a"/><rect x="1454" y="900.5" width="8" height="2" fill="#3a3a3a"/><line x1="720.2" y1="889.5" x2="726" y2="889.5" stroke="#4a4a4a" stroke-width="1"/><line x1="720.2" y1="883.5" x2="726" y2="883.5" stroke="#4a4a4a" stroke-width="1"/><line x1="718" y1="877.5" x2="726" y2="877.5" stroke="#222" stroke-width="1.6"/><line x1="720.2" y1="871.5" x2="726" y2="871.5" stroke="#4a4a4a" stroke-width="1"/><line x1="720.2" y1="865.5" x2="726" y2="865.5" stroke="#4a4a4a" stroke-width="1"/><line x1="720.2" y1="859.5" x2="726" y2="859.5" stroke="#4a4a4a" stroke-width="1"/><line x1="720.2" y1="853.5" x2="726" y2="853.5" stroke="#4a4a4a" stroke-width="1"/><line x1="718" y1="847.5" x2="726" y2="847.5" stroke="#222" stroke-width="1.6"/><line x1="720.2" y1="841.5" x2="726" y2="841.5" stroke="#4a4a4a" stroke-width="1"/><line x1="720.2" y1="835.5" x2="726" y2="835.5" stroke="#4a4a4a" stroke-width="1"/><line x1="720.2" y1="829.5" x2="726" y2="829.5" stroke="#4a4a4a" stroke-width="1"/><line x1="720.2" y1="823.5" x2="726" y2="823.5" stroke="#4a4a4a" stroke-width="1"/><line x1="718" y1="818.5" x2="726" y2="818.5" stroke="#222" stroke-width="1.6"/><line x1="720.2" y1="812.5" x2="726" y2="812.5" stroke="#4a4a4a" stroke-width="1"/><line x1="720.2" y1="806.5" x2="726" y2="806.5" stroke="#4a4a4a" stroke-width="1"/><line x1="720.2" y1="800.5" x2="726" y2="800.5" stroke="#4a4a4a" stroke-width="1"/><line x1="720.2" y1="794.5" x2="726" y2="794.5" stroke="#4a4a4a" stroke-width="1"/><line x1="718" y1="788.5" x2="726" y2="788.5" stroke="#222" stroke-width="1.6"/><line x1="720.2" y1="782.5" x2="726" y2="782.5" stroke="#4a4a4a" stroke-width="1"/><line x1="720.2" y1="776.5" x2="726" y2="776.5" stroke="#4a4a4a" stroke-width="1"/><line x1="720.2" y1="770.5" x2="726" y2="770.5" stroke="#4a4a4a" stroke-width="1"/><line x1="720.2" y1="764.5" x2="726" y2="764.5" stroke="#4a4a4a" stroke-width="1"/><line x1="718" y1="758.5" x2="726" y2="758.5" stroke="#222" stroke-width="1.6"/><line x1="720.2" y1="752.5" x2="726" y2="752.5" stroke="#4a4a4a" stroke-width="1"/><line x1="720.2" y1="746.5" x2="726" y2="746.5" stroke="#4a4a4a" stroke-width="1"/><line x1="720.2" y1="740.5" x2="726" y2="740.5" stroke="#4a4a4a" stroke-width="1"/><line x1="720.2" y1="734.5" x2="726" y2="734.5" stroke="#4a4a4a" stroke-width="1"/><line x1="718" y1="728.5" x2="726" y2="728.5" stroke="#222" stroke-width="1.6"/><line x1="720.2" y1="722.5" x2="726" y2="722.5" stroke="#4a4a4a" stroke-width="1"/><line x1="720.2" y1="717.5" x2="726" y2="717.5" stroke="#4a4a4a" stroke-width="1"/><line x1="720.2" y1="711.5" x2="726" y2="711.5" stroke="#4a4a4a" stroke-width="1"/><line x1="720.2" y1="705.5" x2="726" y2="705.5" stroke="#4a4a4a" stroke-width="1"/><line x1="718" y1="699.5" x2="726" y2="699.5" stroke="#222" stroke-width="1.6"/><line x1="720.2" y1="693.5" x2="726" y2="693.5" stroke="#4a4a4a" stroke-width="1"/><line x1="720.2" y1="687.5" x2="726" y2="687.5" stroke="#4a4a4a" stroke-width="1"/><line x1="720.2" y1="681.5" x2="726" y2="681.5" stroke="#4a4a4a" stroke-width="1"/><line x1="720.2" y1="675.5" x2="726" y2="675.5" stroke="#4a4a4a" stroke-width="1"/><line x1="718" y1="669.5" x2="726" y2="669.5" stroke="#222" stroke-width="1.6"/><line x1="720.2" y1="663.5" x2="726" y2="663.5" stroke="#4a4a4a" stroke-width="1"/><line x1="720.2" y1="657.5" x2="726" y2="657.5" stroke="#4a4a4a" stroke-width="1"/><line x1="720.2" y1="651.5" x2="726" y2="651.5" stroke="#4a4a4a" stroke-width="1"/><line x1="720.2" y1="645.5" x2="726" y2="645.5" stroke="#4a4a4a" stroke-width="1"/><line x1="718" y1="639.5" x2="726" y2="639.5" stroke="#222" stroke-width="1.6"/><line x1="720.2" y1="633.5" x2="726" y2="633.5" stroke="#4a4a4a" stroke-width="1"/><line x1="720.2" y1="627.5" x2="726" y2="627.5" stroke="#4a4a4a" stroke-width="1"/><line x1="720.2" y1="621.5" x2="726" y2="621.5" stroke="#4a4a4a" stroke-width="1"/><line x1="720.2" y1="616.5" x2="726" y2="616.5" stroke="#4a4a4a" stroke-width="1"/><line x1="718" y1="610.5" x2="726" y2="610.5" stroke="#222" stroke-width="1.6"/><line x1="720.2" y1="604.5" x2="726" y2="604.5" stroke="#4a4a4a" stroke-width="1"/><line x1="720.2" y1="598.5" x2="726" y2="598.5" stroke="#4a4a4a" stroke-width="1"/><line x1="720.2" y1="592.5" x2="726" y2="592.5" stroke="#4a4a4a" stroke-width="1"/><line x1="720.2" y1="586.5" x2="726" y2="586.5" stroke="#4a4a4a" stroke-width="1"/><line x1="718" y1="580.5" x2="726" y2="580.5" stroke="#222" stroke-width="1.6"/><line x1="720.2" y1="574.5" x2="726" y2="574.5" stroke="#4a4a4a" stroke-width="1"/><line x1="720.2" y1="568.5" x2="726" y2="568.5" stroke="#4a4a4a" stroke-width="1"/><line x1="720.2" y1="562.5" x2="726" y2="562.5" stroke="#4a4a4a" stroke-width="1"/><line x1="720.2" y1="556.5" x2="726" y2="556.5" stroke="#4a4a4a" stroke-width="1"/><line x1="718" y1="550.5" x2="726" y2="550.5" stroke="#222" stroke-width="1.6"/><line x1="720.2" y1="544.5" x2="726" y2="544.5" stroke="#4a4a4a" stroke-width="1"/><line x1="720.2" y1="538.5" x2="726" y2="538.5" stroke="#4a4a4a" stroke-width="1"/><line x1="720.2" y1="532.5" x2="726" y2="532.5" stroke="#4a4a4a" stroke-width="1"/><line x1="720.2" y1="526.5" x2="726" y2="526.5" stroke="#4a4a4a" stroke-width="1"/><line x1="718" y1="521.5" x2="726" y2="521.5" stroke="#222" stroke-width="1.6"/><line x1="720.2" y1="515.5" x2="726" y2="515.5" stroke="#4a4a4a" stroke-width="1"/><line x1="720.2" y1="509.5" x2="726" y2="509.5" stroke="#4a4a4a" stroke-width="1"/><line x1="720.2" y1="503.5" x2="726" y2="503.5" stroke="#4a4a4a" stroke-width="1"/><line x1="720.2" y1="497.5" x2="726" y2="497.5" stroke="#4a4a4a" stroke-width="1"/><line x1="718" y1="491.5" x2="726" y2="491.5" stroke="#222" stroke-width="1.6"/><line x1="720.2" y1="485.5" x2="726" y2="485.5" stroke="#4a4a4a" stroke-width="1"/><line x1="720.2" y1="479.5" x2="726" y2="479.5" stroke="#4a4a4a" stroke-width="1"/><line x1="720.2" y1="473.5" x2="726" y2="473.5" stroke="#4a4a4a" stroke-width="1"/><line x1="720.2" y1="467.5" x2="726" y2="467.5" stroke="#4a4a4a" stroke-width="1"/><line x1="718" y1="461.5" x2="726" y2="461.5" stroke="#222" stroke-width="1.6"/><line x1="720.2" y1="455.5" x2="726" y2="455.5" stroke="#4a4a4a" stroke-width="1"/><line x1="720.2" y1="449.5" x2="726" y2="449.5" stroke="#4a4a4a" stroke-width="1"/><line x1="720.2" y1="443.5" x2="726" y2="443.5" stroke="#4a4a4a" stroke-width="1"/><line x1="720.2" y1="437.5" x2="726" y2="437.5" stroke="#4a4a4a" stroke-width="1"/><line x1="718" y1="431.5" x2="726" y2="431.5" stroke="#222" stroke-width="1.6"/><line x1="720.2" y1="425.5" x2="726" y2="425.5" stroke="#4a4a4a" stroke-width="1"/><line x1="720.2" y1="420.5" x2="726" y2="420.5" stroke="#4a4a4a" stroke-width="1"/><line x1="720.2" y1="414.5" x2="726" y2="414.5" stroke="#4a4a4a" stroke-width="1"/><line x1="720.2" y1="408.5" x2="726" y2="408.5" stroke="#4a4a4a" stroke-width="1"/><line x1="718" y1="402.5" x2="726" y2="402.5" stroke="#222" stroke-width="1.6"/><line x1="720.2" y1="396.5" x2="726" y2="396.5" stroke="#4a4a4a" stroke-width="1"/><line x1="720.2" y1="390.5" x2="726" y2="390.5" stroke="#4a4a4a" stroke-width="1"/><line x1="720.2" y1="384.5" x2="726" y2="384.5" stroke="#4a4a4a" stroke-width="1"/><line x1="720.2" y1="378.5" x2="726" y2="378.5" stroke="#4a4a4a" stroke-width="1"/><line x1="718" y1="372.5" x2="726" y2="372.5" stroke="#222" stroke-width="1.6"/><line x1="720.2" y1="366.5" x2="726" y2="366.5" stroke="#4a4a4a" stroke-width="1"/><line x1="720.2" y1="360.5" x2="726" y2="360.5" stroke="#4a4a4a" stroke-width="1"/><line x1="720.2" y1="354.5" x2="726" y2="354.5" stroke="#4a4a4a" stroke-width="1"/><line x1="720.2" y1="348.5" x2="726" y2="348.5" stroke="#4a4a4a" stroke-width="1"/><line x1="718" y1="342.5" x2="726" y2="342.5" stroke="#222" stroke-width="1.6"/><line x1="720.2" y1="336.5" x2="726" y2="336.5" stroke="#4a4a4a" stroke-width="1"/><line x1="720.2" y1="330.5" x2="726" y2="330.5" stroke="#4a4a4a" stroke-width="1"/><line x1="720.2" y1="324.5" x2="726" y2="324.5" stroke="#4a4a4a" stroke-width="1"/><line x1="720.2" y1="319.5" x2="726" y2="319.5" stroke="#4a4a4a" stroke-width="1"/><line x1="718" y1="313.5" x2="726" y2="313.5" stroke="#222" stroke-width="1.6"/><line x1="720.2" y1="307.5" x2="726" y2="307.5" stroke="#4a4a4a" stroke-width="1"/><line x1="720.2" y1="301.5" x2="726" y2="301.5" stroke="#4a4a4a" stroke-width="1"/><line x1="720.2" y1="295.5" x2="726" y2="295.5" stroke="#4a4a4a" stroke-width="1"/><line x1="720.2" y1="289.5" x2="726" y2="289.5" stroke="#4a4a4a" stroke-width="1"/><line x1="718" y1="283.5" x2="726" y2="283.5" stroke="#222" stroke-width="1.6"/><line x1="720.2" y1="277.5" x2="726" y2="277.5" stroke="#4a4a4a" stroke-width="1"/><line x1="720.2" y1="271.5" x2="726" y2="271.5" stroke="#4a4a4a" stroke-width="1"/><line x1="720.2" y1="265.5" x2="726" y2="265.5" stroke="#4a4a4a" stroke-width="1"/><line x1="728.5" y1="900" x2="728.5" y2="905.8" stroke="#4a4a4a" stroke-width="1"/><line x1="742.5" y1="900" x2="742.5" y2="905.8" stroke="#4a4a4a" stroke-width="1"/><line x1="755.5" y1="900" x2="755.5" y2="905.8" stroke="#4a4a4a" stroke-width="1"/><line x1="768.5" y1="900" x2="768.5" y2="905.8" stroke="#4a4a4a" stroke-width="1"/><line x1="782.5" y1="900" x2="782.5" y2="907.6" stroke="#222" stroke-width="1.6"/><line x1="795.5" y1="900" x2="795.5" y2="905.8" stroke="#4a4a4a" stroke-width="1"/><line x1="809.5" y1="900" x2="809.5" y2="905.8" stroke="#4a4a4a" stroke-width="1"/><line x1="822.5" y1="900" x2="822.5" y2="905.8" stroke="#4a4a4a" stroke-width="1"/><line x1="835.5" y1="900" x2="835.5" y2="905.8" stroke="#4a4a4a" stroke-width="1"/><line x1="849.5" y1="900" x2="849.5" y2="907.6" stroke="#222" stroke-width="1.6"/><line x1="862.5" y1="900" x2="862.5" y2="905.8" stroke="#4a4a4a" stroke-width="1"/><line x1="876.5" y1="900" x2="876.5" y2="905.8" stroke="#4a4a4a" stroke-width="1"/><line x1="889.5" y1="900" x2="889.5" y2="905.8" stroke="#4a4a4a" stroke-width="1"/><line x1="903.5" y1="900" x2="903.5" y2="905.8" stroke="#4a4a4a" stroke-width="1"/><line x1="916.5" y1="900" x2="916.5" y2="907.6" stroke="#222" stroke-width="1.6"/><line x1="929.5" y1="900" x2="929.5" y2="905.8" stroke="#4a4a4a" stroke-width="1"/><line x1="943.5" y1="900" x2="943.5" y2="905.8" stroke="#4a4a4a" stroke-width="1"/><line x1="956.5" y1="900" x2="956.5" y2="905.8" stroke="#4a4a4a" stroke-width="1"/><line x1="970.5" y1="900" x2="970.5" y2="905.8" stroke="#4a4a4a" stroke-width="1"/><line x1="983.5" y1="900" x2="983.5" y2="907.6" stroke="#222" stroke-width="1.6"/><line x1="997.5" y1="900" x2="997.5" y2="905.8" stroke="#4a4a4a" stroke-width="1"/><line x1="1010.5" y1="900" x2="1010.5" y2="905.8" stroke="#4a4a4a" stroke-width="1"/><line x1="1023.5" y1="900" x2="1023.5" y2="905.8" stroke="#4a4a4a" stroke-width="1"/><line x1="1037.5" y1="900" x2="1037.5" y2="905.8" stroke="#4a4a4a" stroke-width="1"/><line x1="1050.5" y1="900" x2="1050.5" y2="907.6" stroke="#222" stroke-width="1.6"/><line x1="1064.5" y1="900" x2="1064.5" y2="905.8" stroke="#4a4a4a" stroke-width="1"/><line x1="1077.5" y1="900" x2="1077.5" y2="905.8" stroke="#4a4a4a" stroke-width="1"/><line x1="1091.5" y1="900" x2="1091.5" y2="905.8" stroke="#4a4a4a" stroke-width="1"/><line x1="1104.5" y1="900" x2="1104.5" y2="905.8" stroke="#4a4a4a" stroke-width="1"/><line x1="1117.5" y1="900" x2="1117.5" y2="907.6" stroke="#222" stroke-width="1.6"/><line x1="1131.5" y1="900" x2="1131.5" y2="905.8" stroke="#4a4a4a" stroke-width="1"/><line x1="1144.5" y1="900" x2="1144.5" y2="905.8" stroke="#4a4a4a" stroke-width="1"/><line x1="1158.5" y1="900" x2="1158.5" y2="905.8" stroke="#4a4a4a" stroke-width="1"/><line x1="1171.5" y1="900" x2="1171.5" y2="905.8" stroke="#4a4a4a" stroke-width="1"/><line x1="1185.5" y1="900" x2="1185.5" y2="907.6" stroke="#222" stroke-width="1.6"/><line x1="1198.5" y1="900" x2="1198.5" y2="905.8" stroke="#4a4a4a" stroke-width="1"/><line x1="1211.5" y1="900" x2="1211.5" y2="905.8" stroke="#4a4a4a" stroke-width="1"/><line x1="1225.5" y1="900" x2="1225.5" y2="905.8" stroke="#4a4a4a" stroke-width="1"/><line x1="1238.5" y1="900" x2="1238.5" y2="905.8" stroke="#4a4a4a" stroke-width="1"/><line x1="1252.5" y1="900" x2="1252.5" y2="907.6" stroke="#222" stroke-width="1.6"/><line x1="1265.5" y1="900" x2="1265.5" y2="905.8" stroke="#4a4a4a" stroke-width="1"/><line x1="1278.5" y1="900" x2="1278.5" y2="905.8" stroke="#4a4a4a" stroke-width="1"/><line x1="1292.5" y1="900" x2="1292.5" y2="905.8" stroke="#4a4a4a" stroke-width="1"/><line x1="1305.5" y1="900" x2="1305.5" y2="905.8" stroke="#4a4a4a" stroke-width="1"/><line x1="1319.5" y1="900" x2="1319.5" y2="907.6" stroke="#222" stroke-width="1.6"/><line x1="1332.5" y1="900" x2="1332.5" y2="905.8" stroke="#4a4a4a" stroke-width="1"/><line x1="1346.5" y1="900" x2="1346.5" y2="905.8" stroke="#4a4a4a" stroke-width="1"/><line x1="1359.5" y1="900" x2="1359.5" y2="905.8" stroke="#4a4a4a" stroke-width="1"/><line x1="1372.5" y1="900" x2="1372.5" y2="905.8" stroke="#4a4a4a" stroke-width="1"/><line x1="1386.5" y1="900" x2="1386.5" y2="907.6" stroke="#222" stroke-width="1.6"/><line x1="1399.5" y1="900" x2="1399.5" y2="905.8" stroke="#4a4a4a" stroke-width="1"/><line x1="1413.5" y1="900" x2="1413.5" y2="905.8" stroke="#4a4a4a" stroke-width="1"/><line x1="1426.5" y1="900" x2="1426.5" y2="905.8" stroke="#4a4a4a" stroke-width="1"/><line x1="1440.5" y1="900" x2="1440.5" y2="905.8" stroke="#4a4a4a" stroke-width="1"/><line x1="1453.5" y1="900" x2="1453.5" y2="907.6" stroke="#222" stroke-width="1.6"/></svg>
<div class="t" style="left:631.8px;top:871.0px;width:80px;text-align:right;font-size:12px;transform-origin:100% 0;transform:scaleX(0.975)">-100.00</div>
<div class="t" style="left:631.8px;top:841.3px;width:80px;text-align:right;font-size:12px;transform-origin:100% 0;transform:scaleX(0.975)">-90.00</div>
<div class="t" style="left:631.8px;top:811.6px;width:80px;text-align:right;font-size:12px;transform-origin:100% 0;transform:scaleX(0.975)">-80.00</div>
<div class="t" style="left:631.8px;top:781.9px;width:80px;text-align:right;font-size:12px;transform-origin:100% 0;transform:scaleX(0.975)">-70.00</div>
<div class="t" style="left:631.8px;top:752.2px;width:80px;text-align:right;font-size:12px;transform-origin:100% 0;transform:scaleX(0.975)">-60.00</div>
<div class="t" style="left:631.8px;top:722.5px;width:80px;text-align:right;font-size:12px;transform-origin:100% 0;transform:scaleX(0.975)">-50.00</div>
<div class="t" style="left:631.8px;top:692.8px;width:80px;text-align:right;font-size:12px;transform-origin:100% 0;transform:scaleX(0.975)">-40.00</div>
<div class="t" style="left:631.8px;top:663.1px;width:80px;text-align:right;font-size:12px;transform-origin:100% 0;transform:scaleX(0.975)">-30.00</div>
<div class="t" style="left:631.8px;top:633.4px;width:80px;text-align:right;font-size:12px;transform-origin:100% 0;transform:scaleX(0.975)">-20.00</div>
<div class="t" style="left:631.8px;top:603.7px;width:80px;text-align:right;font-size:12px;transform-origin:100% 0;transform:scaleX(0.975)">-10.00</div>
<div class="t" style="left:631.8px;top:574.0px;width:80px;text-align:right;font-size:12px;transform-origin:100% 0;transform:scaleX(0.975)">0.00</div>
<div class="t" style="left:631.8px;top:544.3px;width:80px;text-align:right;font-size:12px;transform-origin:100% 0;transform:scaleX(0.975)">10.00</div>
<div class="t" style="left:631.8px;top:514.6px;width:80px;text-align:right;font-size:12px;transform-origin:100% 0;transform:scaleX(0.975)">20.00</div>
<div class="t" style="left:631.8px;top:484.9px;width:80px;text-align:right;font-size:12px;transform-origin:100% 0;transform:scaleX(0.975)">30.00</div>
<div class="t" style="left:631.8px;top:455.2px;width:80px;text-align:right;font-size:12px;transform-origin:100% 0;transform:scaleX(0.975)">40.00</div>
<div class="t" style="left:631.8px;top:425.5px;width:80px;text-align:right;font-size:12px;transform-origin:100% 0;transform:scaleX(0.975)">50.00</div>
<div class="t" style="left:631.8px;top:395.8px;width:80px;text-align:right;font-size:12px;transform-origin:100% 0;transform:scaleX(0.975)">60.00</div>
<div class="t" style="left:631.8px;top:366.1px;width:80px;text-align:right;font-size:12px;transform-origin:100% 0;transform:scaleX(0.975)">70.00</div>
<div class="t" style="left:631.8px;top:336.4px;width:80px;text-align:right;font-size:12px;transform-origin:100% 0;transform:scaleX(0.975)">80.00</div>
<div class="t" style="left:631.8px;top:306.7px;width:80px;text-align:right;font-size:12px;transform-origin:100% 0;transform:scaleX(0.975)">90.00</div>
<div class="t" style="left:631.8px;top:277.0px;width:80px;text-align:right;font-size:12px;transform-origin:100% 0;transform:scaleX(0.975)">100.00</div>
<div class="t" style="left:742.3px;top:916.7px;width:80px;text-align:center;font-size:12px;transform:scaleX(0.975)">200.00</div>
<div class="t" style="left:809.4px;top:916.7px;width:80px;text-align:center;font-size:12px;transform:scaleX(0.975)">210.00</div>
<div class="t" style="left:876.5px;top:916.7px;width:80px;text-align:center;font-size:12px;transform:scaleX(0.975)">220.00</div>
<div class="t" style="left:943.7px;top:916.7px;width:80px;text-align:center;font-size:12px;transform:scaleX(0.975)">230.00</div>
<div class="t" style="left:1010.8px;top:916.7px;width:80px;text-align:center;font-size:12px;transform:scaleX(0.975)">240.00</div>
<div class="t" style="left:1077.9px;top:916.7px;width:80px;text-align:center;font-size:12px;transform:scaleX(0.975)">250.00</div>
<div class="t" style="left:1145.0px;top:916.7px;width:80px;text-align:center;font-size:12px;transform:scaleX(0.975)">260.00</div>
<div class="t" style="left:1212.1px;top:916.7px;width:80px;text-align:center;font-size:12px;transform:scaleX(0.975)">270.00</div>
<div class="t" style="left:1279.3px;top:916.7px;width:80px;text-align:center;font-size:12px;transform:scaleX(0.975)">280.00</div>
<div class="t" style="left:1346.4px;top:916.7px;width:80px;text-align:center;font-size:12px;transform:scaleX(0.975)">290.00</div>
<div class="t" style="left:1413.5px;top:916.7px;width:80px;text-align:center;font-size:12px;transform:scaleX(0.975)">300.00</div>
<div class="t" style="left:1080.2px;top:930.9px;font-size:13px;transform-origin:0 0;transform:scaleX(0.9822);">Time</div>
<div class="t" style="left:1445.0px;top:928.0px;font-size:12px;transform-origin:0 0;transform:scaleX(0.9225);font-weight:bold;">ms</div>
<div class="t" style="left:916.3px;top:245.8px;width:300px;text-align:center;">Time Domain (V_PPCa)</div>
<div class="t" style="left:652px;top:603px;font-size:12.6px;transform-origin:0 0;transform:rotate(-90deg)">Voltage</div>
<div class="t" style="left:653.5px;top:278.3px;font-size:12.3px;transform-origin:0 0;transform:rotate(-90deg)">kV</div>
<div class="a" style="left:1493px;top:214px;width:373px;height:740px;background:#8f9ec3"></div>
<div class="a" style="left:1495px;top:216px;width:369px;height:1px;background:#c3cbe2"></div>
<div class="a" style="left:1497px;top:218px;width:365px;height:26px;background:#4c5e80"></div>
<div class="t" style="left:1502.0px;top:223.3px;font-size:15px;transform-origin:0 0;transform:scaleX(0.9588);color:#fff;">Legend</div>
<svg style="left:1823px;top:230px" width="10" height="6" viewBox="0 0 10 6"><path d="M0 0 H10 L5 6 Z" fill="#e4e8f2"/></svg>
<svg style="left:1844px;top:226px" width="10" height="14" viewBox="0 0 10 14"><path d="M2 1 H8 M3 1 V8 H7 V1 M1 8 H9 M5 8 V14" fill="none" stroke="#e4e8f2" stroke-width="1.6"/></svg>
<div class="a" style="left:1497px;top:244px;width:365px;height:706px;background:#fff"></div>
<div class="a" style="left:1864px;top:216px;width:1px;height:736px;background:#c3cbe2"></div>
<div class="a" style="left:1495px;top:951px;width:369px;height:1px;background:#c3cbe2"></div>
<div class="a" style="left:1498px;top:244px;width:25px;height:685px;background:#ece9d8"></div>
<div class="a" style="left:1502px;top:245px;width:16px;height:1.5px;background:#fbfbf4"></div>
<div class="a" style="left:1502px;top:284px;width:16px;height:1.5px;background:#fbfbf4"></div>
<div class="a" style="left:1502px;top:315px;width:16px;height:1.5px;background:#fbfbf4"></div>
<div class="a" style="left:1502px;top:341px;width:16px;height:1.5px;background:#fbfbf4"></div>
<div class="a" style="left:1502px;top:368px;width:16px;height:1.5px;background:#fbfbf4"></div>
<div class="a" style="left:1502px;top:394px;width:16px;height:1.5px;background:#fbfbf4"></div>
<div class="a" style="left:1502px;top:420px;width:16px;height:1.5px;background:#fbfbf4"></div>
<div class="a" style="left:1502px;top:446px;width:16px;height:1.5px;background:#fbfbf4"></div>
<div class="a" style="left:1502px;top:473px;width:16px;height:1.5px;background:#fbfbf4"></div>
<div class="a" style="left:1523px;top:244px;width:317px;height:41px;background:linear-gradient(to right,#b8b3a2,#c6c1b4 50%,#d4d0c8)"></div>
<div class="a" style="left:1523px;top:244px;width:317px;height:41px;overflow:hidden"><div class="t" style="left:10.7px;top:14.3px;font-size:15px;transform-origin:0 0;transform:scaleX(1.0074);">Drag a column header here to group by that column</div>
</div><div class="a" style="left:1523px;top:285px;width:317px;height:1px;background:#8a8a8a"></div>
<div class="a" style="left:1523px;top:286px;width:317px;height:29px;background:#ebe9d9"></div>
<div class="a" style="left:1523px;top:285px;width:2px;height:188px;background:#808080"></div>
<div class="a" style="left:1525px;top:315px;width:6px;height:158px;background:#d6d2c2"></div>
<div class="a" style="left:1578px;top:289px;width:1px;height:22px;background:#c8c4b4"></div>
<div class="a" style="left:1579px;top:289px;width:1px;height:22px;background:#fff"></div>
<div class="a" style="left:1628px;top:289px;width:1px;height:22px;background:#c8c4b4"></div>
<div class="a" style="left:1629px;top:289px;width:1px;height:22px;background:#fff"></div>
<div class="a" style="left:1753px;top:289px;width:1px;height:22px;background:#c8c4b4"></div>
<div class="a" style="left:1754px;top:289px;width:1px;height:22px;background:#fff"></div>
<svg style="left:1526px;top:289px" width="3" height="24" viewBox="0 0 3 24"><g fill="#777"><rect x="0" y="1" width="2" height="2"/><rect x="0" y="5" width="2" height="2"/><rect x="0" y="9" width="2" height="2"/><rect x="0" y="13" width="2" height="2"/><rect x="0" y="17" width="2" height="2"/></g></svg>
<svg style="left:1534px;top:290px" width="22" height="16" viewBox="0 0 22 16"><path d="M1 8 Q10 -1 19 8 Q10 17 1 8 Z" fill="#fff" stroke="#222" stroke-width="2"/><circle cx="10" cy="8" r="4.2" fill="#111"/><circle cx="8.6" cy="6.6" r="1.2" fill="#fff"/></svg>
<svg style="left:1555px;top:289px" width="20" height="20" viewBox="0 0 20 20"><path d="M6 14 L15 3 L18 5.5 L9 16.5 Z" fill="#f8b030" stroke="#c88010" stroke-width="0.8"/><path d="M6 14 L9 16.5 L4.5 17.5 Z" fill="#a8b8e8"/><rect x="1" y="17" width="17" height="2.4" fill="#f8c800"/></svg>
<div class="t" style="left:1582.3px;top:291.8px;">Color</div>
<div class="t" style="left:1632.3px;top:291.8px;">Name</div>
<div class="t" style="left:1757.0px;top:291.8px;font-size:15px;transform-origin:0 0;transform:scaleX(0.9391);">Scenario</div>
<div class="a" style="left:1523px;top:315px;width:317px;height:1.5px;background:#808080"></div>
<svg style="left:1536px;top:320px" width="17" height="16" viewBox="0 0 17 16"><rect x="0.5" y="0.5" width="16" height="15" fill="#fff" stroke="#666"/><path d="M2.60 8.20 L7.30 12.60 L14.00 3.40" fill="none" stroke="#111" stroke-width="2.5"/></svg>
<svg style="left:1556px;top:320px" width="17" height="16" viewBox="0 0 17 16"><rect x="0.5" y="0.5" width="16" height="15" fill="#fff" stroke="#666"/></svg>
<div class="a" style="left:1594px;top:323.5px;width:20px;height:10px;background:#008000;border:2px solid #000;box-shadow:inset -1px -1px 0 #d8c040"></div>
<div class="t" style="left:1632.0px;top:321.9px;font-size:15px;transform-origin:0 0;transform:scaleX(0.8341);">V_PPCa</div>
<div class="t" style="left:1757.0px;top:321.9px;">1</div>
<div class="a" style="left:1523px;top:341px;width:317px;height:1.5px;background:#808080"></div>
<svg style="left:1536px;top:346px" width="17" height="16" viewBox="0 0 17 16"><rect x="0.5" y="0.5" width="16" height="15" fill="#fff" stroke="#666"/><path d="M2.60 8.20 L7.30 12.60 L14.00 3.40" fill="none" stroke="#111" stroke-width="2.5"/></svg>
<svg style="left:1556px;top:346px" width="17" height="16" viewBox="0 0 17 16"><rect x="0.5" y="0.5" width="16" height="15" fill="#fff" stroke="#666"/></svg>
<div class="a" style="left:1594px;top:349.5px;width:20px;height:10px;background:#00ff00;border:2px solid #000;box-shadow:inset -1px -1px 0 #d8c040"></div>
<div class="t" style="left:1632.0px;top:347.9px;font-size:15px;transform-origin:0 0;transform:scaleX(0.8341);">V_PPCa</div>
<div class="t" style="left:1757.0px;top:347.9px;">2</div>
<div class="a" style="left:1523px;top:368px;width:317px;height:1.5px;background:#808080"></div>
<svg style="left:1536px;top:373px" width="17" height="16" viewBox="0 0 17 16"><rect x="0.5" y="0.5" width="16" height="15" fill="#fff" stroke="#666"/><path d="M2.60 8.20 L7.30 12.60 L14.00 3.40" fill="none" stroke="#111" stroke-width="2.5"/></svg>
<svg style="left:1556px;top:373px" width="17" height="16" viewBox="0 0 17 16"><rect x="0.5" y="0.5" width="16" height="15" fill="#fff" stroke="#666"/></svg>
<div class="a" style="left:1594px;top:376.5px;width:20px;height:10px;background:#00ffff;border:2px solid #000;box-shadow:inset -1px -1px 0 #d8c040"></div>
<div class="t" style="left:1632.0px;top:374.9px;font-size:15px;transform-origin:0 0;transform:scaleX(0.8341);">V_PPCa</div>
<div class="t" style="left:1757.0px;top:374.9px;">3</div>
<div class="a" style="left:1523px;top:394px;width:317px;height:1.5px;background:#808080"></div>
<svg style="left:1536px;top:399px" width="17" height="16" viewBox="0 0 17 16"><rect x="0.5" y="0.5" width="16" height="15" fill="#fff" stroke="#666"/><path d="M2.60 8.20 L7.30 12.60 L14.00 3.40" fill="none" stroke="#111" stroke-width="2.5"/></svg>
<svg style="left:1556px;top:399px" width="17" height="16" viewBox="0 0 17 16"><rect x="0.5" y="0.5" width="16" height="15" fill="#fff" stroke="#666"/></svg>
<div class="a" style="left:1594px;top:402.5px;width:20px;height:10px;background:#0000ff;border:2px solid #000;box-shadow:inset -1px -1px 0 #d8c040"></div>
<div class="t" style="left:1632.0px;top:400.9px;font-size:15px;transform-origin:0 0;transform:scaleX(0.8341);">V_PPCa</div>
<div class="t" style="left:1757.0px;top:400.9px;">4</div>
<div class="a" style="left:1531px;top:421px;width:309px;height:25px;background:#c2cedb"></div>
<div class="a" style="left:1523px;top:420px;width:317px;height:1.5px;background:#808080"></div>
<svg style="left:1536px;top:425px" width="17" height="16" viewBox="0 0 17 16"><rect x="0.5" y="0.5" width="16" height="15" fill="#fff" stroke="#666"/><path d="M2.60 8.20 L7.30 12.60 L14.00 3.40" fill="none" stroke="#111" stroke-width="2.5"/></svg>
<svg style="left:1556px;top:425px" width="17" height="16" viewBox="0 0 17 16"><rect x="0.5" y="0.5" width="16" height="15" fill="#fff" stroke="#666"/><path d="M2.60 8.20 L7.30 12.60 L14.00 3.40" fill="none" stroke="#111" stroke-width="2.5"/></svg>
<div class="a" style="left:1594px;top:428.5px;width:20px;height:10px;background:#ff0000;border:2px solid #000;box-shadow:inset -1px -1px 0 #d8c040"></div>
<div class="t" style="left:1632.0px;top:426.9px;font-size:15px;transform-origin:0 0;transform:scaleX(0.8341);">V_PPCa</div>
<div class="t" style="left:1757.0px;top:426.9px;">5</div>
<div class="a" style="left:1523px;top:446px;width:317px;height:1.5px;background:#808080"></div>
<svg style="left:1536px;top:451px" width="17" height="16" viewBox="0 0 17 16"><rect x="0.5" y="0.5" width="16" height="15" fill="#fff" stroke="#666"/><path d="M2.60 8.20 L7.30 12.60 L14.00 3.40" fill="none" stroke="#111" stroke-width="2.5"/></svg>
<svg style="left:1556px;top:451px" width="17" height="16" viewBox="0 0 17 16"><rect x="0.5" y="0.5" width="16" height="15" fill="#fff" stroke="#666"/></svg>
<div class="a" style="left:1594px;top:454.5px;width:20px;height:10px;background:#ff00ff;border:2px solid #000;box-shadow:inset -1px -1px 0 #d8c040"></div>
<div class="t" style="left:1632.0px;top:452.9px;font-size:15px;transform-origin:0 0;transform:scaleX(0.8341);">V_PPCa</div>
<div class="t" style="left:1757.0px;top:452.9px;">6</div>
<div class="a" style="left:1523px;top:473px;width:317px;height:1.5px;background:#808080"></div>
<div class="a" style="left:1531px;top:315px;width:1.5px;height:158px;background:#808080"></div>
<div class="a" style="left:1579px;top:315px;width:1.5px;height:158px;background:#808080"></div>
<div class="a" style="left:1629px;top:315px;width:1.5px;height:158px;background:#808080"></div>
<div class="a" style="left:1753px;top:315px;width:1.5px;height:158px;background:#808080"></div>
<svg style="left:1507px;top:425px" width="8" height="12" viewBox="0 0 8 12"><path d="M0 0 L7 6 L0 12 Z" fill="#111"/></svg>
<div class="a" style="left:1840px;top:244px;width:22px;height:685px;background:#f0f0f0"></div>
<svg style="left:1845px;top:253px" width="12" height="8" viewBox="0 0 12 8"><path d="M1 7 L6 2 L11 7" fill="none" stroke="#c8c8c8" stroke-width="1.2"/></svg>
<svg style="left:1845px;top:913px" width="12" height="8" viewBox="0 0 12 8"><path d="M1 1 L6 6 L11 1" fill="none" stroke="#c8c8c8" stroke-width="1.2"/></svg>
<div class="a" style="left:1498px;top:929px;width:342px;height:21px;background:#f0f0f0"></div>
<div class="a" style="left:1519px;top:929px;width:94px;height:21px;background:#cdcdcd"></div>
<svg style="left:1505px;top:934px" width="8" height="11" viewBox="0 0 8 11"><path d="M6 1 L1.5 5.5 L6 10" fill="none" stroke="#909090" stroke-width="1.3"/></svg>
<svg style="left:1826px;top:934px" width="8" height="11" viewBox="0 0 8 11"><path d="M2 1 L6.5 5.5 L2 10" fill="none" stroke="#909090" stroke-width="1.3"/></svg>
<div class="a" style="left:1875px;top:180px;width:34px;height:790px;background:#c8d3e6;border-left:1px solid #9aa6c8"></div>
<div class="a" style="left:1875px;top:180px;width:34px;height:98px;background:#4a5a80"></div>
<div class="a" style="left:1875px;top:280px;width:34px;height:79px;background:#4a5a80"></div>
<div class="a" style="left:1879px;top:182.5px;width:30px;height:93.5px;background:#2a3858"></div>
<div class="a" style="left:1879px;top:283px;width:30px;height:74px;background:#2a3858"></div>
<div class="t" style="left:1905.5px;top:187.3px;color:#fff;transform-origin:0 0;transform:rotate(90deg) scaleX(1.0079)">Macro Editor</div>
<div class="t" style="left:1905.5px;top:288.5px;color:#fff;transform-origin:0 0;transform:rotate(90deg) scaleX(1.0018)">Properties</div>

</body></html>
